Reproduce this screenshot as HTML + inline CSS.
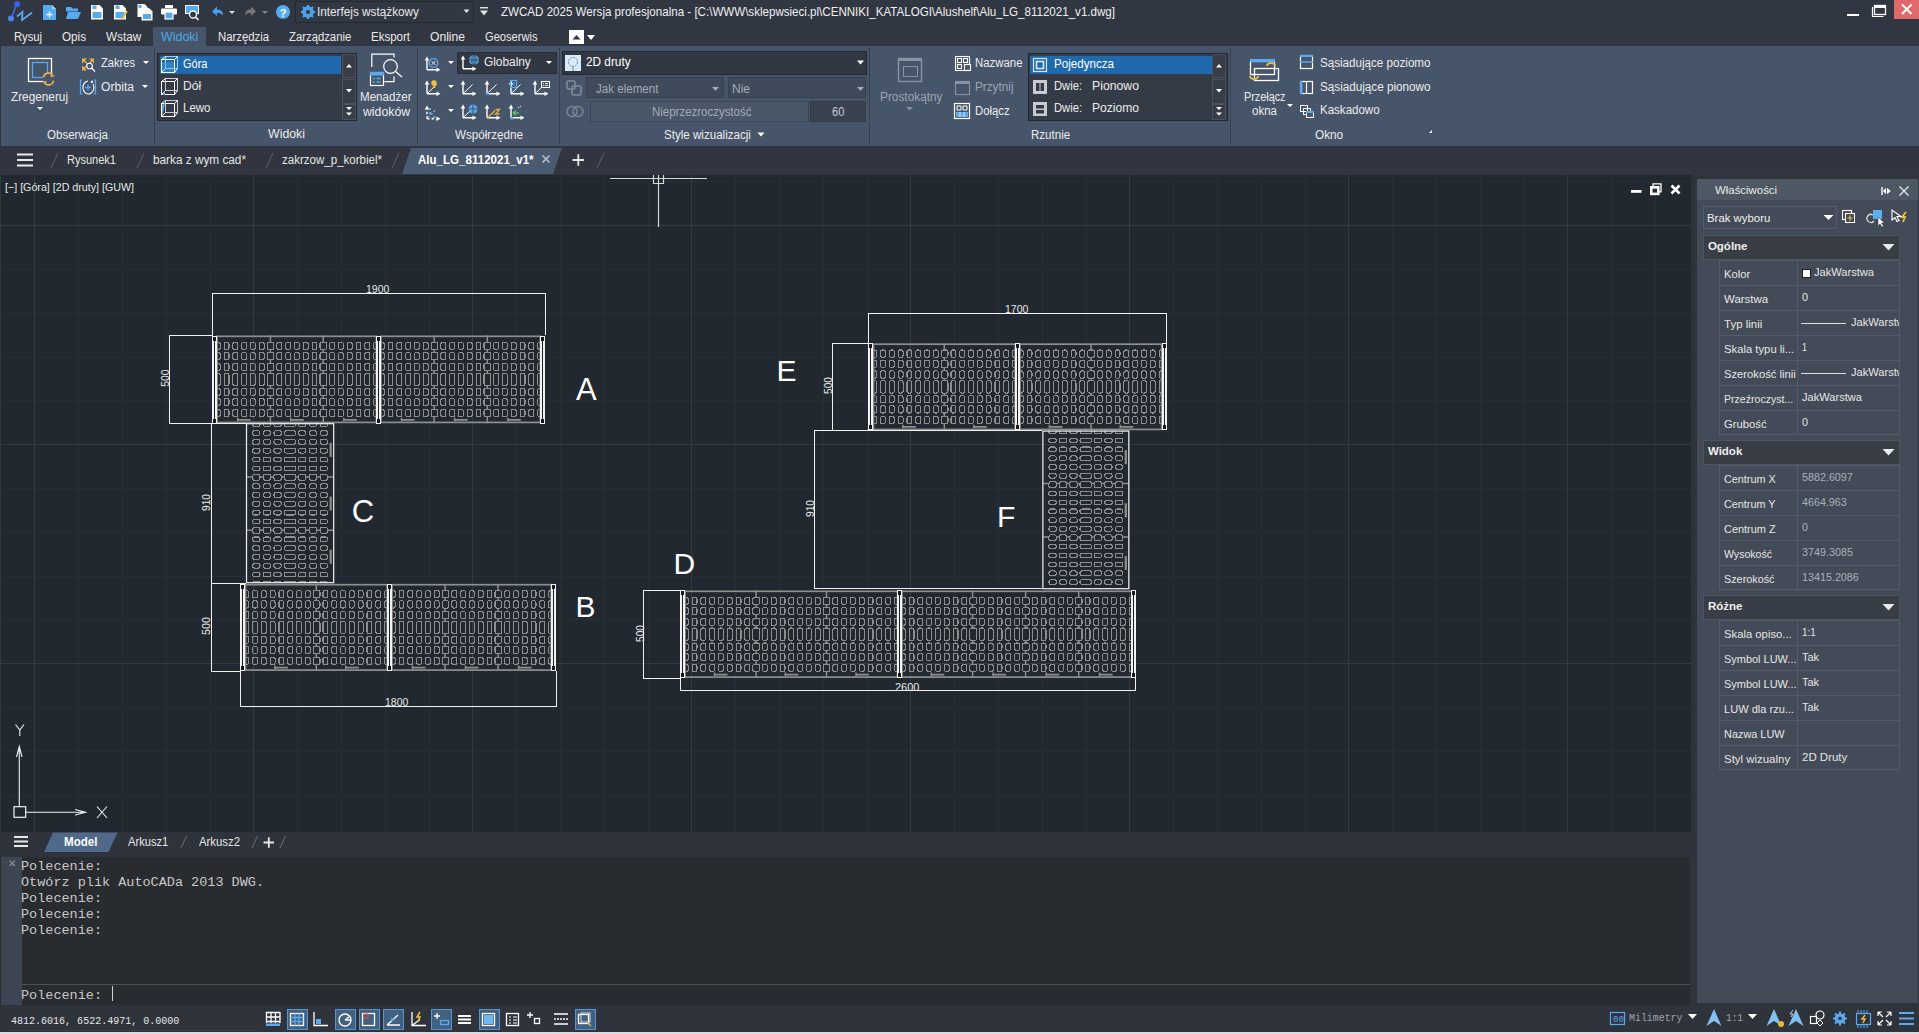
<!DOCTYPE html>
<html><head><meta charset="utf-8">
<style>
*{margin:0;padding:0;box-sizing:border-box}
html,body{width:1919px;height:1034px;overflow:hidden;background:#2e333c;font-family:"Liberation Sans",sans-serif}
.a{position:absolute}
.t{position:absolute;white-space:pre;line-height:normal;transform-origin:0 0}
svg{position:absolute;overflow:visible}
</style></head><body>
<div class="a" style="left:0px;top:0px;width:1919px;height:46px;background:#313742;"></div><div class="a" style="left:1px;top:46px;width:1918px;height:100px;background:#47556a;"></div><div class="a" style="left:0px;top:146px;width:1919px;height:29px;background:#30353f;"></div><div class="a" style="left:0px;top:175px;width:1691px;height:657px;background:#212830;"></div><div class="a" style="left:0px;top:175px;width:1px;height:657px;background:#38363a;"></div><div class="a" style="left:0px;top:832px;width:1697px;height:25px;background:#2e333c;"></div><div class="a" style="left:0px;top:857px;width:1690px;height:148px;background:#282b30;"></div><div class="a" style="left:1px;top:857px;width:21px;height:148px;background:#3e4552;"></div><div class="a" style="left:22px;top:984px;width:1668px;height:1px;background:#4a5059;"></div><div class="a" style="left:1697px;top:179px;width:221px;height:824px;background:#434b58;"></div><div class="a" style="left:1918px;top:179px;width:1px;height:824px;background:#30353f;"></div><div class="a" style="left:0px;top:1005px;width:1919px;height:27px;background:#2e333c;"></div><div class="a" style="left:0px;top:1032px;width:1919px;height:2px;background:#d9dde3;"></div><svg style="left:0;top:0" width="300" height="25">
<g fill="none" stroke-linecap="round">
<line x1="16.5" y1="4.5" x2="11.5" y2="18" stroke="#3d6ee8" stroke-width="1.6"/>
<circle cx="17" cy="4.3" r="3" fill="#3f5ff0"/>
<circle cx="11" cy="18.5" r="3" fill="#4a86f0"/>
<path d="M17.5 16 L22.5 12 L22 20 L31.5 13" stroke="#5aa8e8" stroke-width="1.8"/>
</g>
<path d="M43 5 h9 l4 4 v11 h-13z" fill="#56aaf0"/><path d="M52 5 v4 h4" fill="#a8d4f8"/>
<path d="M46.5 14.5 h6 M49.5 11.5 v6" stroke="#fff" stroke-width="1.3"/>
<path d="M66 7 h5 l1.5 1.5 h5.5 v3 h-12z" fill="#56aaf0"/><path d="M68 12 h13 l-3 7 h-12z" fill="#56aaf0"/>
<path d="M91 5 h8.5 l3.5 3.5 v11 h-12z" fill="#fff"/><rect x="92.5" y="12" width="9" height="6" fill="#56aaf0"/><rect x="92.5" y="5.5" width="4" height="3.5" fill="#56aaf0"/>
<path d="M114 5 h8.5 l3.5 3.5 v11 h-12z" fill="#fff"/><rect x="115.5" y="12" width="9" height="6" fill="#56aaf0"/><rect x="115.5" y="5.5" width="4" height="3.5" fill="#56aaf0"/>
<path d="M122 19 l5 -8" stroke="#e8b84a" stroke-width="2"/>
<path d="M137.5 4 h7 l3 3 v10 h-10z" fill="#fff"/><rect x="138.5" y="5" width="3" height="3" fill="#56aaf0"/>
<path d="M141.5 8 h7.5 l3.5 3.5 v9 h-11z" fill="#fff"/><rect x="143" y="14" width="8" height="5" fill="#56aaf0"/>
<rect x="165" y="5" width="8" height="3" fill="#fff"/><rect x="161" y="8.5" width="16" height="6" rx="1" fill="#fff"/><rect x="165" y="12" width="8" height="7" fill="#56aaf0" stroke="#fff" stroke-width="1.2"/>
<rect x="185.5" y="5.5" width="13" height="8" fill="#56aaf0" stroke="#fff" stroke-width="1"/>
<circle cx="193" cy="14.5" r="3.5" fill="#313742" stroke="#fff" stroke-width="1.3"/><path d="M195.5 17 l3 3" stroke="#fff" stroke-width="1.5"/>
<path d="M212 11.5 l5 -5 v3 c4 0 6 2 6 6 c-1.5 -2 -3 -2.5 -6 -2.5 v3z" fill="#4aa0f0"/>
<path d="M229 11 h6 l-3 3z" fill="#ddd"/>
<path d="M256 11.5 l-5 -5 v3 c-4 0 -6 2 -6 6 c1.5 -2 3 -2.5 6 -2.5 v3z" fill="#777"/>
<path d="M262 11 h6 l-3 3z" fill="#888"/>
<circle cx="283" cy="12" r="7" fill="#56aaf0"/>
<text x="283" y="16.5" font-family="Liberation Sans" font-size="11" font-weight="bold" fill="#fff" text-anchor="middle">?</text>
</svg><div class="a" style="left:295px;top:1px;width:179px;height:22px;background:#323843;border:1px solid #24282f;"></div><svg style="left:300px;top:4px" width="16" height="16"><g transform="translate(8 8)" fill="#4fa3ec">
<circle r="4.6" fill="none" stroke="#4fa3ec" stroke-width="2.4"/>
<g stroke="#4fa3ec" stroke-width="2.2"><line y1="-7" y2="7"/><line x1="-7" x2="7"/><line x1="-5" y1="-5" x2="5" y2="5"/><line x1="-5" y1="5" x2="5" y2="-5"/></g>
<circle r="2" fill="#323843"/></g></svg><svg style="left:463px;top:9px" width="8" height="6"><path d="M0.5 0.5h6l-3 3.5z" fill="#e0e0e0"/></svg><svg style="left:478px;top:6px" width="12" height="12"><rect x="2" y="1" width="8" height="1.5" fill="#e0e0e0"/><path d="M2 4.5h8l-4 5z" fill="#e0e0e0"/></svg><div class="a" style="left:1847px;top:14px;width:12px;height:2px;background:#fff;"></div><svg style="left:1870px;top:2px" width="20" height="16"><path d="M2.5 5 v9.5 h11" fill="none" stroke="#fff" stroke-width="1.2"/>
<rect x="4.5" y="3.5" width="11" height="9" fill="none" stroke="#fff" stroke-width="1.3"/><rect x="4.5" y="3" width="11" height="3" fill="#fff"/></svg><div class="a" style="left:1894px;top:0px;width:25px;height:19px;background:#e06a6a;"></div><svg style="left:1900px;top:3px" width="14" height="13"><path d="M2 1.5 L11.5 11 M11.5 1.5 L2 11" stroke="#fff" stroke-width="2"/></svg><div class="a" style="left:153px;top:27px;width:53px;height:19px;background:#47556a;"></div><div class="a" style="left:569px;top:30px;width:15px;height:14px;background:#ffffff;"></div><svg style="left:569px;top:30px" width="28" height="14"><path d="M3.5 9.5 l4 -4.5 l4 4.5z" fill="#313742"/><path d="M18 5 h8 l-4 5z" fill="#fff"/></svg><div class="a" style="left:154px;top:48px;width:1px;height:96px;background:#37404d;"></div><div class="a" style="left:417px;top:48px;width:1px;height:96px;background:#37404d;"></div><div class="a" style="left:559px;top:48px;width:1px;height:96px;background:#37404d;"></div><div class="a" style="left:869px;top:48px;width:1px;height:96px;background:#37404d;"></div><div class="a" style="left:1230px;top:48px;width:1px;height:96px;background:#37404d;"></div><svg style="left:0;top:46px" width="160" height="99">
<rect x="28.5" y="12.5" width="23" height="23" fill="none" stroke="#fff" stroke-width="1.3"/>
<rect x="32.5" y="16.5" width="15" height="15" fill="none" stroke="#5aaaf0" stroke-width="1.3"/>
<circle cx="48.5" cy="33" r="6" fill="#47556a"/>
<path d="M43.5 31.5 a5 5 0 0 1 9.5 -1.5 M53.5 34.5 a5 5 0 0 1 -9.5 1.5" fill="none" stroke="#e2b34a" stroke-width="1.7"/>
<path d="M51 27.5 l3.5 2.8 l-4 1z M46 38.5 l-3.5 -2.8 l4 -1z" fill="#e2b34a"/>
<path d="M37 61 h6 l-3 3z" fill="#fff"/>
<path d="M82 12.5 h5 l-5 5z M94 12.5 h-5 l5 5z M82 24.5 v-5 l5 5z" fill="#e2b34a"/>
<path d="M83 13.5 l4 4 M93 13.5 l-4 4 M83 23.5 l4 -4" stroke="#e2b34a" stroke-width="1.2"/>
<circle cx="89.5" cy="20" r="2.8" fill="#47556a" stroke="#fff" stroke-width="1.1"/><path d="M91.5 22 l3.5 3.5" stroke="#fff" stroke-width="1.2"/>
<path d="M82.5 34 h-2 v14 h2 M93.5 34 h2 v14 h-2" fill="none" stroke="#5aaaf0" stroke-width="1.2"/>
<path d="M88 35 a5.5 6.5 0 1 0 5 3" fill="none" stroke="#fff" stroke-width="1.1"/><path d="M85 41.5 h6 M88 38.5 v6" stroke="#5aaaf0" stroke-width="1.3"/><path d="M92 34 l1.5 2.5 l-3 0.5z" fill="#fff"/>
<path d="M143 15 h6 l-3 3z M142 39 h6 l-3 3z" fill="#fff"/>
</svg><div class="a" style="left:157px;top:53px;width:200px;height:68px;background:#22262d;"></div><div class="a" style="left:158px;top:54px;width:198px;height:66px;background:#353b46;"></div><div class="a" style="left:160px;top:56px;width:181px;height:18px;background:#1f6aae;"></div><div class="a" style="left:342px;top:54px;width:14px;height:24px;background:#383e49;border:1px solid #4b525d;"></div><div class="a" style="left:342px;top:79px;width:14px;height:25px;background:#383e49;border:1px solid #4b525d;"></div><div class="a" style="left:342px;top:104px;width:14px;height:16px;background:#383e49;border:1px solid #4b525d;"></div><svg style="left:157px;top:53px" width="200" height="68">
<g fill="none" stroke="#fff" stroke-width="1">
<rect x="4.5" y="6.5" width="13" height="13"/><rect x="8.5" y="3.5" width="12" height="12" stroke="#9fd0f8"/><path d="M4.5 6.5 l4 -3 M17.5 6.5 l3 -3 M4.5 19.5 l4 -4 M17.5 19.5 l3 -4"/>
<rect x="4.5" y="28.5" width="13" height="13"/><rect x="8.5" y="25.5" width="12" height="12" stroke="#ccc"/><path d="M4.5 28.5 l4 -3 M17.5 28.5 l3 -3 M4.5 41.5 l4 -4 M17.5 41.5 l3 -4"/>
<rect x="4.5" y="50.5" width="13" height="13"/><rect x="8.5" y="47.5" width="12" height="12" stroke="#ccc"/><path d="M4.5 50.5 l4 -3 M17.5 50.5 l3 -3 M4.5 63.5 l4 -4 M17.5 63.5 l3 -4"/>
</g>
<path d="M5 9 h12 v10 h-12z" fill="#5aaaf0" opacity="0.35"/>
<path d="M5 42 l3 -4 v4z M5 64 v-12 l3 -2z" fill="#5aaaf0"/>
<path d="M189 14.5 l3 -3.5 l3 3.5z M189 36 h6 l-3 3.5z M189 54 h6 l-3 3z M189 59.5 h6 l-3 3z" fill="#fff"/>
</svg><svg style="left:360px;top:50px" width="55" height="40">
<path d="M11.8 17V4.2H34V7.5 M24.5 31.7H34V26.5" fill="none" stroke="#fff" stroke-width="1.2"/>
<circle cx="30.5" cy="16.5" r="6.8" fill="none" stroke="#fff" stroke-width="1.2"/><path d="M35.3 21.3 L42 27" stroke="#fff" stroke-width="1.2"/>
<rect x="10.5" y="22.5" width="13" height="13" fill="#47556a" stroke="#fff" stroke-width="1.2"/>
<rect x="10" y="22" width="14" height="3.5" fill="#5aaaf0"/>
<path d="M13 28.5h2M16.5 28.5h4M13 32h2M16.5 32h4" stroke="#5aaaf0" stroke-width="1.5"/>
</svg><div class="a" style="left:457px;top:52px;width:100px;height:22px;background:#323843;border:1px solid #282c34;"></div><svg style="left:417px;top:46px" width="145" height="99"><path d="M10 23.8V12.5 M10 23.8H20.5" fill="none" stroke="#fff" stroke-width="1.4"/><path d="M7.7 14.5L10 10.5L12.3 14.5z M19.5 21.5L23.5 23.8L19.5 26.1z" fill="#fff"/><path d="M46 22.8V11.5 M46 22.8H56.5" fill="none" stroke="#fff" stroke-width="1.4"/><path d="M43.7 13.5L46 9.5L48.3 13.5z M55.5 20.5L59.5 22.8L55.5 25.1z" fill="#fff"/><path d="M10 47.8V36.5 M10 47.8H20.5" fill="none" stroke="#fff" stroke-width="1.4"/><path d="M7.7 38.5L10 34.5L12.3 38.5z M19.5 45.5L23.5 47.8L19.5 50.1z" fill="#fff"/><path d="M10.5 47.3L19.5 38.5" stroke="#fff" stroke-width="1" fill="none"/><path d="M46 47.8V36.5 M46 47.8H56.5" fill="none" stroke="#fff" stroke-width="1.4"/><path d="M43.7 38.5L46 34.5L48.3 38.5z M55.5 45.5L59.5 47.8L55.5 50.1z" fill="#fff"/><path d="M46.5 47.3L55.5 38.5" stroke="#fff" stroke-width="1" fill="none"/><path d="M70 47.8V36.5 M70 47.8H80.5" fill="none" stroke="#fff" stroke-width="1.4"/><path d="M67.7 38.5L70 34.5L72.3 38.5z M79.5 45.5L83.5 47.8L79.5 50.1z" fill="#fff"/><path d="M70.5 47.3L79.5 38.5" stroke="#fff" stroke-width="1" fill="none"/><path d="M94 47.8V36.5 M94 47.8H104.5" fill="none" stroke="#fff" stroke-width="1.4"/><path d="M91.7 38.5L94 34.5L96.3 38.5z M103.5 45.5L107.5 47.8L103.5 50.1z" fill="#fff"/><path d="M94.5 47.3L103.5 38.5" stroke="#fff" stroke-width="1" fill="none"/><path d="M118 47.8V36.5 M118 47.8H128.5" fill="none" stroke="#fff" stroke-width="1.4"/><path d="M115.7 38.5L118 34.5L120.3 38.5z M127.5 45.5L131.5 47.8L127.5 50.1z" fill="#fff"/><path d="M118.5 47.3L127.5 38.5" stroke="#fff" stroke-width="1" fill="none"/><path d="M46 71.8V60.5 M46 71.8H56.5" fill="none" stroke="#fff" stroke-width="1.4"/><path d="M43.7 62.5L46 58.5L48.3 62.5z M55.5 69.5L59.5 71.8L55.5 74.1z" fill="#fff"/><path d="M46.5 71.3L55.5 62.5" stroke="#fff" stroke-width="1" fill="none"/><path d="M70 71.8V60.5 M70 71.8H80.5" fill="none" stroke="#fff" stroke-width="1.4"/><path d="M67.7 62.5L70 58.5L72.3 62.5z M79.5 69.5L83.5 71.8L79.5 74.1z" fill="#fff"/><path d="M94 71.8V60.5 M94 71.8H104.5" fill="none" stroke="#fff" stroke-width="1.4"/><path d="M91.7 62.5L94 58.5L96.3 62.5z M103.5 69.5L107.5 71.8L103.5 74.1z" fill="#fff"/><path d="M10 72.8V61.5 M10 72.8H20.5" fill="none" stroke="#fff" stroke-width="1.4" stroke-dasharray="2.5 2"/><path d="M7.7 63.5L10 59.5L12.3 63.5z M19.5 70.5L23.5 72.8L19.5 75.1z" fill="#fff"/><path d="M11 71.5L19 63.5" stroke="#fff" stroke-dasharray="2 2"/><rect x="12" y="66" width="2.2" height="2.2" fill="#5aaaf0"/><rect x="16" y="70" width="2.2" height="2.2" fill="#5aaaf0"/><rect x="12" y="62" width="2" height="2" fill="#5aaaf0"/><path d="M31 15 h6 l-3 3z M31 39 h6 l-3 3z M31 63 h6 l-3 3z M129 15 h6 l-3 3z" fill="#fff"/><circle cx="16.5" cy="17" r="4.3" fill="none" stroke="#5aaaf0" stroke-width="1.3"/><path d="M14.5 15l4 4M18.5 15l-4 4" stroke="#fff" stroke-width="0.9"/><circle cx="57" cy="14" r="5" fill="#5aaaf0"/><path d="M52 14h10M57 9v10" stroke="#34404f" stroke-width="0.9"/><ellipse cx="57" cy="14" rx="2.2" ry="5" fill="none" stroke="#34404f" stroke-width="0.9"/><circle cx="17" cy="37" r="2.7" fill="#f0c040"/><rect x="15.8" y="40" width="2.4" height="2" fill="#f0c040"/><rect x="69.5" y="46.5" width="2.5" height="2.5" fill="#5aaaf0"/><rect x="93.5" y="34.5" width="6" height="7" fill="none" stroke="#5aaaf0" stroke-width="1.2"/><path d="M95.5 37h2M95.5 39h2" stroke="#5aaaf0"/><rect x="124.5" y="35.5" width="8" height="6" fill="#4d5a6c" stroke="#fff" stroke-width="1"/><path d="M126 37.5h1M128 37.5h3M126 39.5h1M128 39.5h3" stroke="#fff" stroke-width="0.8"/><circle cx="56" cy="63" r="4.5" fill="#5aaaf0"/><path d="M51.5 63h9M56 58.5v9" stroke="#34404f" stroke-width="0.8"/><path d="M70.5 72L78 64.5" stroke="#e0b040" stroke-width="1.2"/><path d="M78.5 63.5h4l-4 4.5h4" stroke="#e0b040" stroke-width="1.3" fill="none"/><path d="M96 67h6M96 67l3 -2.5M96 67l3 2.5" stroke="#5ac070" stroke-width="1.4" fill="none"/><path d="M101 62l3 -2" stroke="#fff" stroke-dasharray="1.5 1"/><rect x="93.5" y="71" width="2.5" height="2.5" fill="#5aaaf0"/></svg><div class="a" style="left:562px;top:51px;width:305px;height:24px;background:#323843;border:1px solid #24282f;"></div><div class="a" style="left:565px;top:55px;width:16px;height:16px;background:#d5ecfa;"></div><svg style="left:565px;top:55px" width="16" height="16"><circle cx="8" cy="7" r="4.5" fill="none" stroke="#667" stroke-width="0.8" stroke-dasharray="2 1"/><path d="M8 11 v5" stroke="#667" stroke-width="0.8"/></svg><svg style="left:856px;top:60px" width="10" height="6"><path d="M1 0.5h7l-3.5 4z" fill="#fff"/></svg><div class="a" style="left:586px;top:77px;width:138px;height:21px;background:#3f4a5a;border:1px solid #37404d;"></div><div class="a" style="left:728px;top:77px;width:138px;height:21px;background:#3f4a5a;border:1px solid #37404d;"></div><svg style="left:562px;top:76px" width="310" height="45"><path d="M150 11 h7 l-3.5 4z M295 11 h7 l-3.5 4z" fill="#a3abb6"/><g fill="none" stroke="#808a96" stroke-width="1.6"><rect x="5" y="5" width="8" height="8" rx="1.5"/><rect x="10" y="10" width="9" height="9" rx="1.5"/></g><g fill="none" stroke="#7d8794" stroke-width="1.4"><circle cx="10" cy="35.5" r="5"/><circle cx="16" cy="35.5" r="5"/></g></svg><div class="a" style="left:590px;top:101px;width:219px;height:21px;background:#4a5769;border:1px solid #3a4453;"></div><div class="a" style="left:810px;top:101px;width:56px;height:21px;background:#3a4250;border:1px solid #343c48;"></div><svg style="left:757px;top:132px" width="8" height="6"><path d="M0.5 0.5h7l-3.5 4z" fill="#fff"/></svg><svg style="left:869px;top:46px" width="361" height="99">
<rect x="29.5" y="12.5" width="23" height="23" fill="none" stroke="#8892a0" stroke-width="1.4"/><rect x="29" y="12" width="24" height="3" fill="#8892a0"/>
<rect x="34.5" y="20.5" width="14" height="10" fill="none" stroke="#8892a0" stroke-width="1"/>
<path d="M37 61 h7 l-3.5 3.5z" fill="#8892a0"/>
<g fill="none" stroke="#fff" stroke-width="1.1"><rect x="86.5" y="10.5" width="14" height="14"/><rect x="88.5" y="12.5" width="4" height="4"/><rect x="94.5" y="12.5" width="4" height="4"/><rect x="88.5" y="18.5" width="4" height="4"/><rect x="95.5" y="18.5" width="6" height="6" fill="#4d5a6c"/></g>
<g fill="none" stroke="#8892a0" stroke-width="1.1"><rect x="86.5" y="35.5" width="14" height="13"/></g><rect x="86" y="35" width="15" height="3" fill="#8892a0"/>
<rect x="85.5" y="57.5" width="15" height="15" fill="none" stroke="#fff" stroke-width="1.2"/>
<path d="M88 60 h4 v4 h-4z M94 60 h4 v4 h-4z" fill="none" stroke="#fff"/><rect x="87" y="66" width="12" height="5" fill="#5aaaf0"/><path d="M91 66 v5 M95 66 v5" stroke="#fff" stroke-width="0.8"/>
</svg><div class="a" style="left:1028px;top:53px;width:200px;height:68px;background:#22262d;"></div><div class="a" style="left:1029px;top:54px;width:198px;height:66px;background:#353b46;"></div><div class="a" style="left:1030px;top:56px;width:182px;height:18px;background:#1f6aae;"></div><div class="a" style="left:1212px;top:54px;width:14px;height:24px;background:#383e49;border:1px solid #4b525d;"></div><div class="a" style="left:1212px;top:79px;width:14px;height:25px;background:#383e49;border:1px solid #4b525d;"></div><div class="a" style="left:1212px;top:104px;width:14px;height:16px;background:#383e49;border:1px solid #4b525d;"></div><svg style="left:1028px;top:53px" width="200" height="68">
<rect x="5.5" y="5.5" width="13" height="13" fill="none" stroke="#d8e8f8" stroke-width="1.2"/><rect x="8.5" y="8.5" width="7" height="7" fill="none" stroke="#d8e8f8" stroke-width="1.6"/>
<rect x="5.5" y="27.5" width="13" height="13" fill="#c8ccd2" stroke="#c8ccd2"/><rect x="8" y="30" width="3.5" height="8" fill="#353b46"/><rect x="12.5" y="30" width="3.5" height="8" fill="#353b46"/>
<rect x="5.5" y="49.5" width="13" height="13" fill="#c8ccd2" stroke="#c8ccd2"/><rect x="8" y="52" width="8" height="3.5" fill="#353b46"/><rect x="8" y="57" width="8" height="3.5" fill="#353b46"/>
<path d="M188 14.5 l3 -3.5 l3 3.5z M188 36 h6 l-3 3.5z M188 54 h6 l-3 3z M188 59.5 h6 l-3 3z" fill="#fff"/>
</svg><svg style="left:1230px;top:46px" width="210" height="99">
<rect x="20.5" y="15.5" width="24" height="13" fill="none" stroke="#fff" stroke-width="1.3"/><rect x="20" y="13" width="25" height="3" fill="#5aaaf0"/>
<rect x="24.5" y="22.5" width="24" height="12" fill="none" stroke="#fff" stroke-width="1.3"/>
<path d="M37 20 a4 3 0 0 1 8 0" fill="none" stroke="#e8b84a" stroke-width="2"/><path d="M28 30 a4 3 0 0 1 -8 0" fill="none" stroke="#e8b84a" stroke-width="2"/>
<path d="M57 58 h6 l-3 3z" fill="#fff"/>
<rect x="70.5" y="9.5" width="12" height="13" fill="none" stroke="#fff" stroke-width="1.2"/><rect x="70" y="9" width="13" height="2" fill="#5aaaf0"/><path d="M70 16 h13" stroke="#5aaaf0" stroke-width="1.5"/>
<rect x="70.5" y="35.5" width="12" height="12" fill="none" stroke="#fff" stroke-width="1.2"/><rect x="70" y="35" width="2.5" height="13" fill="#5aaaf0"/><path d="M76.5 35.5 v12" stroke="#fff" stroke-width="1.2"/>
<rect x="70.5" y="59.5" width="7" height="6" fill="none" stroke="#fff"/><rect x="73.5" y="62.5" width="7" height="6" fill="none" stroke="#fff"/><rect x="76.5" y="65.5" width="7" height="6" fill="#4d5a6c" stroke="#fff"/><rect x="76" y="65" width="8" height="2" fill="#5aaaf0"/>
<path d="M199 87 l3 -3 v3z" fill="#fff"/>
</svg><svg style="left:0;top:145px" width="620" height="30"><path d="M17 9.5h16M17 15h16M17 20.5h16" stroke="#e8e8e8" stroke-width="1.8"/><path d="M51 23 l7 -15 M137 23 l7 -15 M266 23 l7 -15 M392 23 l7 -15" stroke="#5a606a" stroke-width="1"/><path d="M402 29 l9 -26 h151 l-9 26z" fill="#4a5a70"/><path d="M542.5 10.5 l7 7 M549.5 10.5 l-7 7" stroke="#b8c0ca" stroke-width="1.6"/><path d="M572.5 15 h11.5 M578.3 9.3 v11.5" stroke="#e8e8e8" stroke-width="1.8"/><path d="M597 23 l7 -15" stroke="#5a606a" stroke-width="1"/></svg><svg style="left:0;top:175px" width="1691" height="657" viewBox="0 175 1691 657"><path d="M78.5 175V832M122.5 175V832M166.5 175V832M210.5 175V832M297.5 175V832M341.5 175V832M385.5 175V832M429.5 175V832M516.5 175V832M560.5 175V832M604.5 175V832M648.5 175V832M735.5 175V832M779.5 175V832M823.5 175V832M867.5 175V832M954.5 175V832M998.5 175V832M1042.5 175V832M1086.5 175V832M1173.5 175V832M1217.5 175V832M1261.5 175V832M1305.5 175V832M1392.5 175V832M1436.5 175V832M1480.5 175V832M1524.5 175V832M1611.5 175V832M1655.5 175V832M0 181.5H1691M0 269.5H1691M0 313.5H1691M0 357.5H1691M0 400.5H1691M0 488.5H1691M0 532.5H1691M0 576.5H1691M0 619.5H1691M0 707.5H1691M0 751.5H1691M0 795.5H1691" stroke="#272e37" stroke-width="1"/><path d="M34.5 175V832M253.5 175V832M472.5 175V832M691.5 175V832M910.5 175V832M1129.5 175V832M1348.5 175V832M1567.5 175V832M0 225.5H1691M0 444.5H1691M0 663.5H1691" stroke="#333b46" stroke-width="1"/><clipPath id="c217_335"><rect x="217" y="335.5" width="159.39999999999998" height="87.69999999999999"/></clipPath><g clip-path="url(#c217_335)" fill="none" stroke="#8e8e8e" stroke-width="1.1" shape-rendering="crispEdges"><rect x="215.25" y="342.16" width="4.9" height="7.4" rx="2" ry="2"/><rect x="215.25" y="352.43" width="4.9" height="7.4" rx="2" ry="2"/><rect x="215.25" y="363.29" width="4.9" height="7.4" rx="2" ry="2"/><rect x="215.25" y="373.15" width="4.9" height="12.5" rx="2" ry="2"/><rect x="215.25" y="388.21" width="4.9" height="7.4" rx="2" ry="2"/><rect x="215.25" y="398.42" width="4.9" height="7.4" rx="2" ry="2"/><rect x="215.25" y="409.33" width="4.9" height="7.4" rx="2" ry="2"/><rect x="224.05" y="342.16" width="4.9" height="7.4" rx="2" ry="2"/><rect x="224.05" y="352.43" width="4.9" height="7.4" rx="2" ry="2"/><rect x="224.05" y="363.29" width="4.9" height="7.4" rx="2" ry="2"/><rect x="224.05" y="373.15" width="4.9" height="12.5" rx="2" ry="2"/><rect x="224.05" y="388.21" width="4.9" height="7.4" rx="2" ry="2"/><rect x="224.05" y="398.42" width="4.9" height="7.4" rx="2" ry="2"/><rect x="224.05" y="409.33" width="4.9" height="7.4" rx="2" ry="2"/><rect x="232.85" y="342.16" width="4.9" height="7.4" rx="2" ry="2"/><rect x="232.85" y="352.43" width="4.9" height="7.4" rx="2" ry="2"/><rect x="232.85" y="363.29" width="4.9" height="7.4" rx="2" ry="2"/><rect x="232.85" y="373.15" width="4.9" height="12.5" rx="2" ry="2"/><rect x="232.85" y="388.21" width="4.9" height="7.4" rx="2" ry="2"/><rect x="232.85" y="398.42" width="4.9" height="7.4" rx="2" ry="2"/><rect x="232.85" y="409.33" width="4.9" height="7.4" rx="2" ry="2"/><rect x="241.65" y="342.16" width="4.9" height="7.4" rx="2" ry="2"/><rect x="241.65" y="352.43" width="4.9" height="7.4" rx="2" ry="2"/><rect x="241.65" y="363.29" width="4.9" height="7.4" rx="2" ry="2"/><rect x="241.65" y="373.15" width="4.9" height="12.5" rx="2" ry="2"/><rect x="241.65" y="388.21" width="4.9" height="7.4" rx="2" ry="2"/><rect x="241.65" y="398.42" width="4.9" height="7.4" rx="2" ry="2"/><rect x="241.65" y="409.33" width="4.9" height="7.4" rx="2" ry="2"/><rect x="250.45" y="342.16" width="4.9" height="7.4" rx="2" ry="2"/><rect x="250.45" y="352.43" width="4.9" height="7.4" rx="2" ry="2"/><rect x="250.45" y="363.29" width="4.9" height="7.4" rx="2" ry="2"/><rect x="250.45" y="373.15" width="4.9" height="12.5" rx="2" ry="2"/><rect x="250.45" y="388.21" width="4.9" height="7.4" rx="2" ry="2"/><rect x="250.45" y="398.42" width="4.9" height="7.4" rx="2" ry="2"/><rect x="250.45" y="409.33" width="4.9" height="7.4" rx="2" ry="2"/><rect x="259.25" y="342.16" width="4.9" height="7.4" rx="2" ry="2"/><rect x="259.25" y="352.43" width="4.9" height="7.4" rx="2" ry="2"/><rect x="259.25" y="363.29" width="4.9" height="7.4" rx="2" ry="2"/><rect x="259.25" y="373.15" width="4.9" height="12.5" rx="2" ry="2"/><rect x="259.25" y="388.21" width="4.9" height="7.4" rx="2" ry="2"/><rect x="259.25" y="398.42" width="4.9" height="7.4" rx="2" ry="2"/><rect x="259.25" y="409.33" width="4.9" height="7.4" rx="2" ry="2"/><rect x="267.15" y="342.16" width="6.7" height="7.4" rx="2" ry="2"/><rect x="267.15" y="352.43" width="6.7" height="7.4" rx="2" ry="2"/><rect x="267.15" y="363.29" width="6.7" height="7.4" rx="2" ry="2"/><rect x="267.15" y="373.15" width="6.7" height="12.5" rx="2" ry="2"/><rect x="267.15" y="388.21" width="6.7" height="7.4" rx="2" ry="2"/><rect x="267.15" y="398.42" width="6.7" height="7.4" rx="2" ry="2"/><rect x="267.15" y="409.33" width="6.7" height="7.4" rx="2" ry="2"/><rect x="276.85" y="342.16" width="4.9" height="7.4" rx="2" ry="2"/><rect x="276.85" y="352.43" width="4.9" height="7.4" rx="2" ry="2"/><rect x="276.85" y="363.29" width="4.9" height="7.4" rx="2" ry="2"/><rect x="276.85" y="373.15" width="4.9" height="12.5" rx="2" ry="2"/><rect x="276.85" y="388.21" width="4.9" height="7.4" rx="2" ry="2"/><rect x="276.85" y="398.42" width="4.9" height="7.4" rx="2" ry="2"/><rect x="276.85" y="409.33" width="4.9" height="7.4" rx="2" ry="2"/><rect x="285.65" y="342.16" width="4.9" height="7.4" rx="2" ry="2"/><rect x="285.65" y="352.43" width="4.9" height="7.4" rx="2" ry="2"/><rect x="285.65" y="363.29" width="4.9" height="7.4" rx="2" ry="2"/><rect x="285.65" y="373.15" width="4.9" height="12.5" rx="2" ry="2"/><rect x="285.65" y="388.21" width="4.9" height="7.4" rx="2" ry="2"/><rect x="285.65" y="398.42" width="4.9" height="7.4" rx="2" ry="2"/><rect x="285.65" y="409.33" width="4.9" height="7.4" rx="2" ry="2"/><rect x="294.45" y="342.16" width="4.9" height="7.4" rx="2" ry="2"/><rect x="294.45" y="352.43" width="4.9" height="7.4" rx="2" ry="2"/><rect x="294.45" y="363.29" width="4.9" height="7.4" rx="2" ry="2"/><rect x="294.45" y="373.15" width="4.9" height="12.5" rx="2" ry="2"/><rect x="294.45" y="388.21" width="4.9" height="7.4" rx="2" ry="2"/><rect x="294.45" y="398.42" width="4.9" height="7.4" rx="2" ry="2"/><rect x="294.45" y="409.33" width="4.9" height="7.4" rx="2" ry="2"/><rect x="303.25" y="342.16" width="4.9" height="7.4" rx="2" ry="2"/><rect x="303.25" y="352.43" width="4.9" height="7.4" rx="2" ry="2"/><rect x="303.25" y="363.29" width="4.9" height="7.4" rx="2" ry="2"/><rect x="303.25" y="373.15" width="4.9" height="12.5" rx="2" ry="2"/><rect x="303.25" y="388.21" width="4.9" height="7.4" rx="2" ry="2"/><rect x="303.25" y="398.42" width="4.9" height="7.4" rx="2" ry="2"/><rect x="303.25" y="409.33" width="4.9" height="7.4" rx="2" ry="2"/><rect x="312.05" y="342.16" width="4.9" height="7.4" rx="2" ry="2"/><rect x="312.05" y="352.43" width="4.9" height="7.4" rx="2" ry="2"/><rect x="312.05" y="363.29" width="4.9" height="7.4" rx="2" ry="2"/><rect x="312.05" y="373.15" width="4.9" height="12.5" rx="2" ry="2"/><rect x="312.05" y="388.21" width="4.9" height="7.4" rx="2" ry="2"/><rect x="312.05" y="398.42" width="4.9" height="7.4" rx="2" ry="2"/><rect x="312.05" y="409.33" width="4.9" height="7.4" rx="2" ry="2"/><rect x="319.95" y="342.16" width="6.7" height="7.4" rx="2" ry="2"/><rect x="319.95" y="352.43" width="6.7" height="7.4" rx="2" ry="2"/><rect x="319.95" y="363.29" width="6.7" height="7.4" rx="2" ry="2"/><rect x="319.95" y="373.15" width="6.7" height="12.5" rx="2" ry="2"/><rect x="319.95" y="388.21" width="6.7" height="7.4" rx="2" ry="2"/><rect x="319.95" y="398.42" width="6.7" height="7.4" rx="2" ry="2"/><rect x="319.95" y="409.33" width="6.7" height="7.4" rx="2" ry="2"/><rect x="329.65" y="342.16" width="4.9" height="7.4" rx="2" ry="2"/><rect x="329.65" y="352.43" width="4.9" height="7.4" rx="2" ry="2"/><rect x="329.65" y="363.29" width="4.9" height="7.4" rx="2" ry="2"/><rect x="329.65" y="373.15" width="4.9" height="12.5" rx="2" ry="2"/><rect x="329.65" y="388.21" width="4.9" height="7.4" rx="2" ry="2"/><rect x="329.65" y="398.42" width="4.9" height="7.4" rx="2" ry="2"/><rect x="329.65" y="409.33" width="4.9" height="7.4" rx="2" ry="2"/><rect x="338.45" y="342.16" width="4.9" height="7.4" rx="2" ry="2"/><rect x="338.45" y="352.43" width="4.9" height="7.4" rx="2" ry="2"/><rect x="338.45" y="363.29" width="4.9" height="7.4" rx="2" ry="2"/><rect x="338.45" y="373.15" width="4.9" height="12.5" rx="2" ry="2"/><rect x="338.45" y="388.21" width="4.9" height="7.4" rx="2" ry="2"/><rect x="338.45" y="398.42" width="4.9" height="7.4" rx="2" ry="2"/><rect x="338.45" y="409.33" width="4.9" height="7.4" rx="2" ry="2"/><rect x="347.25" y="342.16" width="4.9" height="7.4" rx="2" ry="2"/><rect x="347.25" y="352.43" width="4.9" height="7.4" rx="2" ry="2"/><rect x="347.25" y="363.29" width="4.9" height="7.4" rx="2" ry="2"/><rect x="347.25" y="373.15" width="4.9" height="12.5" rx="2" ry="2"/><rect x="347.25" y="388.21" width="4.9" height="7.4" rx="2" ry="2"/><rect x="347.25" y="398.42" width="4.9" height="7.4" rx="2" ry="2"/><rect x="347.25" y="409.33" width="4.9" height="7.4" rx="2" ry="2"/><rect x="356.05" y="342.16" width="4.9" height="7.4" rx="2" ry="2"/><rect x="356.05" y="352.43" width="4.9" height="7.4" rx="2" ry="2"/><rect x="356.05" y="363.29" width="4.9" height="7.4" rx="2" ry="2"/><rect x="356.05" y="373.15" width="4.9" height="12.5" rx="2" ry="2"/><rect x="356.05" y="388.21" width="4.9" height="7.4" rx="2" ry="2"/><rect x="356.05" y="398.42" width="4.9" height="7.4" rx="2" ry="2"/><rect x="356.05" y="409.33" width="4.9" height="7.4" rx="2" ry="2"/><rect x="364.85" y="342.16" width="4.9" height="7.4" rx="2" ry="2"/><rect x="364.85" y="352.43" width="4.9" height="7.4" rx="2" ry="2"/><rect x="364.85" y="363.29" width="4.9" height="7.4" rx="2" ry="2"/><rect x="364.85" y="373.15" width="4.9" height="12.5" rx="2" ry="2"/><rect x="364.85" y="388.21" width="4.9" height="7.4" rx="2" ry="2"/><rect x="364.85" y="398.42" width="4.9" height="7.4" rx="2" ry="2"/><rect x="364.85" y="409.33" width="4.9" height="7.4" rx="2" ry="2"/><rect x="373.65" y="342.16" width="4.9" height="7.4" rx="2" ry="2"/><rect x="373.65" y="352.43" width="4.9" height="7.4" rx="2" ry="2"/><rect x="373.65" y="363.29" width="4.9" height="7.4" rx="2" ry="2"/><rect x="373.65" y="373.15" width="4.9" height="12.5" rx="2" ry="2"/><rect x="373.65" y="388.21" width="4.9" height="7.4" rx="2" ry="2"/><rect x="373.65" y="398.42" width="4.9" height="7.4" rx="2" ry="2"/><rect x="373.65" y="409.33" width="4.9" height="7.4" rx="2" ry="2"/></g><path d="M270.4 335.5V342.2M270.4 349.6V352.4M270.4 359.8V363.3M270.4 370.7V373.1M270.4 385.6V388.2M270.4 395.6V398.4M270.4 405.8V409.3M270.4 416.7V423.2M323.2 335.5V342.2M323.2 349.6V352.4M323.2 359.8V363.3M323.2 370.7V373.1M323.2 385.6V388.2M323.2 395.6V398.4M323.2 405.8V409.3M323.2 416.7V423.2" stroke="#8e8e8e" stroke-width="1.5"/><rect x="217" y="336.3" width="159.39999999999998" height="86.1" fill="none" stroke="#8e8e8e" stroke-width="1.7"/><path d="M237.7 419.9h13M237.7 417.7v3.5" stroke="#8e8e8e" stroke-width="1.6"/><path d="M290.8 419.9h13M290.8 417.7v3.5" stroke="#8e8e8e" stroke-width="1.6"/><path d="M343.8 419.9h13M343.8 417.7v3.5" stroke="#8e8e8e" stroke-width="1.6"/><clipPath id="c381_335"><rect x="381" y="335.5" width="159.39999999999998" height="87.69999999999999"/></clipPath><g clip-path="url(#c381_335)" fill="none" stroke="#8e8e8e" stroke-width="1.1" shape-rendering="crispEdges"><rect x="379.25" y="342.16" width="4.9" height="7.4" rx="2" ry="2"/><rect x="379.25" y="352.43" width="4.9" height="7.4" rx="2" ry="2"/><rect x="379.25" y="363.29" width="4.9" height="7.4" rx="2" ry="2"/><rect x="379.25" y="373.15" width="4.9" height="12.5" rx="2" ry="2"/><rect x="379.25" y="388.21" width="4.9" height="7.4" rx="2" ry="2"/><rect x="379.25" y="398.42" width="4.9" height="7.4" rx="2" ry="2"/><rect x="379.25" y="409.33" width="4.9" height="7.4" rx="2" ry="2"/><rect x="388.05" y="342.16" width="4.9" height="7.4" rx="2" ry="2"/><rect x="388.05" y="352.43" width="4.9" height="7.4" rx="2" ry="2"/><rect x="388.05" y="363.29" width="4.9" height="7.4" rx="2" ry="2"/><rect x="388.05" y="373.15" width="4.9" height="12.5" rx="2" ry="2"/><rect x="388.05" y="388.21" width="4.9" height="7.4" rx="2" ry="2"/><rect x="388.05" y="398.42" width="4.9" height="7.4" rx="2" ry="2"/><rect x="388.05" y="409.33" width="4.9" height="7.4" rx="2" ry="2"/><rect x="396.85" y="342.16" width="4.9" height="7.4" rx="2" ry="2"/><rect x="396.85" y="352.43" width="4.9" height="7.4" rx="2" ry="2"/><rect x="396.85" y="363.29" width="4.9" height="7.4" rx="2" ry="2"/><rect x="396.85" y="373.15" width="4.9" height="12.5" rx="2" ry="2"/><rect x="396.85" y="388.21" width="4.9" height="7.4" rx="2" ry="2"/><rect x="396.85" y="398.42" width="4.9" height="7.4" rx="2" ry="2"/><rect x="396.85" y="409.33" width="4.9" height="7.4" rx="2" ry="2"/><rect x="405.65" y="342.16" width="4.9" height="7.4" rx="2" ry="2"/><rect x="405.65" y="352.43" width="4.9" height="7.4" rx="2" ry="2"/><rect x="405.65" y="363.29" width="4.9" height="7.4" rx="2" ry="2"/><rect x="405.65" y="373.15" width="4.9" height="12.5" rx="2" ry="2"/><rect x="405.65" y="388.21" width="4.9" height="7.4" rx="2" ry="2"/><rect x="405.65" y="398.42" width="4.9" height="7.4" rx="2" ry="2"/><rect x="405.65" y="409.33" width="4.9" height="7.4" rx="2" ry="2"/><rect x="414.45" y="342.16" width="4.9" height="7.4" rx="2" ry="2"/><rect x="414.45" y="352.43" width="4.9" height="7.4" rx="2" ry="2"/><rect x="414.45" y="363.29" width="4.9" height="7.4" rx="2" ry="2"/><rect x="414.45" y="373.15" width="4.9" height="12.5" rx="2" ry="2"/><rect x="414.45" y="388.21" width="4.9" height="7.4" rx="2" ry="2"/><rect x="414.45" y="398.42" width="4.9" height="7.4" rx="2" ry="2"/><rect x="414.45" y="409.33" width="4.9" height="7.4" rx="2" ry="2"/><rect x="423.25" y="342.16" width="4.9" height="7.4" rx="2" ry="2"/><rect x="423.25" y="352.43" width="4.9" height="7.4" rx="2" ry="2"/><rect x="423.25" y="363.29" width="4.9" height="7.4" rx="2" ry="2"/><rect x="423.25" y="373.15" width="4.9" height="12.5" rx="2" ry="2"/><rect x="423.25" y="388.21" width="4.9" height="7.4" rx="2" ry="2"/><rect x="423.25" y="398.42" width="4.9" height="7.4" rx="2" ry="2"/><rect x="423.25" y="409.33" width="4.9" height="7.4" rx="2" ry="2"/><rect x="431.15" y="342.16" width="6.7" height="7.4" rx="2" ry="2"/><rect x="431.15" y="352.43" width="6.7" height="7.4" rx="2" ry="2"/><rect x="431.15" y="363.29" width="6.7" height="7.4" rx="2" ry="2"/><rect x="431.15" y="373.15" width="6.7" height="12.5" rx="2" ry="2"/><rect x="431.15" y="388.21" width="6.7" height="7.4" rx="2" ry="2"/><rect x="431.15" y="398.42" width="6.7" height="7.4" rx="2" ry="2"/><rect x="431.15" y="409.33" width="6.7" height="7.4" rx="2" ry="2"/><rect x="440.85" y="342.16" width="4.9" height="7.4" rx="2" ry="2"/><rect x="440.85" y="352.43" width="4.9" height="7.4" rx="2" ry="2"/><rect x="440.85" y="363.29" width="4.9" height="7.4" rx="2" ry="2"/><rect x="440.85" y="373.15" width="4.9" height="12.5" rx="2" ry="2"/><rect x="440.85" y="388.21" width="4.9" height="7.4" rx="2" ry="2"/><rect x="440.85" y="398.42" width="4.9" height="7.4" rx="2" ry="2"/><rect x="440.85" y="409.33" width="4.9" height="7.4" rx="2" ry="2"/><rect x="449.65" y="342.16" width="4.9" height="7.4" rx="2" ry="2"/><rect x="449.65" y="352.43" width="4.9" height="7.4" rx="2" ry="2"/><rect x="449.65" y="363.29" width="4.9" height="7.4" rx="2" ry="2"/><rect x="449.65" y="373.15" width="4.9" height="12.5" rx="2" ry="2"/><rect x="449.65" y="388.21" width="4.9" height="7.4" rx="2" ry="2"/><rect x="449.65" y="398.42" width="4.9" height="7.4" rx="2" ry="2"/><rect x="449.65" y="409.33" width="4.9" height="7.4" rx="2" ry="2"/><rect x="458.45" y="342.16" width="4.9" height="7.4" rx="2" ry="2"/><rect x="458.45" y="352.43" width="4.9" height="7.4" rx="2" ry="2"/><rect x="458.45" y="363.29" width="4.9" height="7.4" rx="2" ry="2"/><rect x="458.45" y="373.15" width="4.9" height="12.5" rx="2" ry="2"/><rect x="458.45" y="388.21" width="4.9" height="7.4" rx="2" ry="2"/><rect x="458.45" y="398.42" width="4.9" height="7.4" rx="2" ry="2"/><rect x="458.45" y="409.33" width="4.9" height="7.4" rx="2" ry="2"/><rect x="467.25" y="342.16" width="4.9" height="7.4" rx="2" ry="2"/><rect x="467.25" y="352.43" width="4.9" height="7.4" rx="2" ry="2"/><rect x="467.25" y="363.29" width="4.9" height="7.4" rx="2" ry="2"/><rect x="467.25" y="373.15" width="4.9" height="12.5" rx="2" ry="2"/><rect x="467.25" y="388.21" width="4.9" height="7.4" rx="2" ry="2"/><rect x="467.25" y="398.42" width="4.9" height="7.4" rx="2" ry="2"/><rect x="467.25" y="409.33" width="4.9" height="7.4" rx="2" ry="2"/><rect x="476.05" y="342.16" width="4.9" height="7.4" rx="2" ry="2"/><rect x="476.05" y="352.43" width="4.9" height="7.4" rx="2" ry="2"/><rect x="476.05" y="363.29" width="4.9" height="7.4" rx="2" ry="2"/><rect x="476.05" y="373.15" width="4.9" height="12.5" rx="2" ry="2"/><rect x="476.05" y="388.21" width="4.9" height="7.4" rx="2" ry="2"/><rect x="476.05" y="398.42" width="4.9" height="7.4" rx="2" ry="2"/><rect x="476.05" y="409.33" width="4.9" height="7.4" rx="2" ry="2"/><rect x="483.95" y="342.16" width="6.7" height="7.4" rx="2" ry="2"/><rect x="483.95" y="352.43" width="6.7" height="7.4" rx="2" ry="2"/><rect x="483.95" y="363.29" width="6.7" height="7.4" rx="2" ry="2"/><rect x="483.95" y="373.15" width="6.7" height="12.5" rx="2" ry="2"/><rect x="483.95" y="388.21" width="6.7" height="7.4" rx="2" ry="2"/><rect x="483.95" y="398.42" width="6.7" height="7.4" rx="2" ry="2"/><rect x="483.95" y="409.33" width="6.7" height="7.4" rx="2" ry="2"/><rect x="493.65" y="342.16" width="4.9" height="7.4" rx="2" ry="2"/><rect x="493.65" y="352.43" width="4.9" height="7.4" rx="2" ry="2"/><rect x="493.65" y="363.29" width="4.9" height="7.4" rx="2" ry="2"/><rect x="493.65" y="373.15" width="4.9" height="12.5" rx="2" ry="2"/><rect x="493.65" y="388.21" width="4.9" height="7.4" rx="2" ry="2"/><rect x="493.65" y="398.42" width="4.9" height="7.4" rx="2" ry="2"/><rect x="493.65" y="409.33" width="4.9" height="7.4" rx="2" ry="2"/><rect x="502.45" y="342.16" width="4.9" height="7.4" rx="2" ry="2"/><rect x="502.45" y="352.43" width="4.9" height="7.4" rx="2" ry="2"/><rect x="502.45" y="363.29" width="4.9" height="7.4" rx="2" ry="2"/><rect x="502.45" y="373.15" width="4.9" height="12.5" rx="2" ry="2"/><rect x="502.45" y="388.21" width="4.9" height="7.4" rx="2" ry="2"/><rect x="502.45" y="398.42" width="4.9" height="7.4" rx="2" ry="2"/><rect x="502.45" y="409.33" width="4.9" height="7.4" rx="2" ry="2"/><rect x="511.25" y="342.16" width="4.9" height="7.4" rx="2" ry="2"/><rect x="511.25" y="352.43" width="4.9" height="7.4" rx="2" ry="2"/><rect x="511.25" y="363.29" width="4.9" height="7.4" rx="2" ry="2"/><rect x="511.25" y="373.15" width="4.9" height="12.5" rx="2" ry="2"/><rect x="511.25" y="388.21" width="4.9" height="7.4" rx="2" ry="2"/><rect x="511.25" y="398.42" width="4.9" height="7.4" rx="2" ry="2"/><rect x="511.25" y="409.33" width="4.9" height="7.4" rx="2" ry="2"/><rect x="520.05" y="342.16" width="4.9" height="7.4" rx="2" ry="2"/><rect x="520.05" y="352.43" width="4.9" height="7.4" rx="2" ry="2"/><rect x="520.05" y="363.29" width="4.9" height="7.4" rx="2" ry="2"/><rect x="520.05" y="373.15" width="4.9" height="12.5" rx="2" ry="2"/><rect x="520.05" y="388.21" width="4.9" height="7.4" rx="2" ry="2"/><rect x="520.05" y="398.42" width="4.9" height="7.4" rx="2" ry="2"/><rect x="520.05" y="409.33" width="4.9" height="7.4" rx="2" ry="2"/><rect x="528.85" y="342.16" width="4.9" height="7.4" rx="2" ry="2"/><rect x="528.85" y="352.43" width="4.9" height="7.4" rx="2" ry="2"/><rect x="528.85" y="363.29" width="4.9" height="7.4" rx="2" ry="2"/><rect x="528.85" y="373.15" width="4.9" height="12.5" rx="2" ry="2"/><rect x="528.85" y="388.21" width="4.9" height="7.4" rx="2" ry="2"/><rect x="528.85" y="398.42" width="4.9" height="7.4" rx="2" ry="2"/><rect x="528.85" y="409.33" width="4.9" height="7.4" rx="2" ry="2"/><rect x="537.65" y="342.16" width="4.9" height="7.4" rx="2" ry="2"/><rect x="537.65" y="352.43" width="4.9" height="7.4" rx="2" ry="2"/><rect x="537.65" y="363.29" width="4.9" height="7.4" rx="2" ry="2"/><rect x="537.65" y="373.15" width="4.9" height="12.5" rx="2" ry="2"/><rect x="537.65" y="388.21" width="4.9" height="7.4" rx="2" ry="2"/><rect x="537.65" y="398.42" width="4.9" height="7.4" rx="2" ry="2"/><rect x="537.65" y="409.33" width="4.9" height="7.4" rx="2" ry="2"/></g><path d="M434.1 335.5V342.2M434.1 349.6V352.4M434.1 359.8V363.3M434.1 370.7V373.1M434.1 385.6V388.2M434.1 395.6V398.4M434.1 405.8V409.3M434.1 416.7V423.2M487.3 335.5V342.2M487.3 349.6V352.4M487.3 359.8V363.3M487.3 370.7V373.1M487.3 385.6V388.2M487.3 395.6V398.4M487.3 405.8V409.3M487.3 416.7V423.2" stroke="#8e8e8e" stroke-width="1.5"/><rect x="381" y="336.3" width="159.39999999999998" height="86.1" fill="none" stroke="#8e8e8e" stroke-width="1.7"/><path d="M401.6 419.9h13M401.6 417.7v3.5" stroke="#8e8e8e" stroke-width="1.6"/><path d="M454.7 419.9h13M454.7 417.7v3.5" stroke="#8e8e8e" stroke-width="1.6"/><path d="M507.9 419.9h13M507.9 417.7v3.5" stroke="#8e8e8e" stroke-width="1.6"/><g shape-rendering="crispEdges"><rect x="212" y="336" width="5" height="88" fill="#f2f2f2"/><rect x="214" y="341" width="1" height="78" fill="#1c2128"/><rect x="213" y="337" width="3" height="4" fill="#15181d"/><rect x="213" y="419" width="3" height="4" fill="#15181d"/></g><g shape-rendering="crispEdges"><rect x="376" y="336" width="5" height="88" fill="#f2f2f2"/><rect x="378" y="341" width="1" height="78" fill="#1c2128"/><rect x="377" y="337" width="3" height="4" fill="#15181d"/><rect x="377" y="419" width="3" height="4" fill="#15181d"/></g><g shape-rendering="crispEdges"><rect x="540" y="336" width="5" height="88" fill="#f2f2f2"/><rect x="542" y="341" width="1" height="78" fill="#1c2128"/><rect x="541" y="337" width="3" height="4" fill="#15181d"/><rect x="541" y="419" width="3" height="4" fill="#15181d"/></g><path d="M212.3 335.3V293.6H545V335.3 M213 335.3H169.3V423.5H213" fill="none" stroke="#f2f2f2" stroke-width="1" shape-rendering="crispEdges"/><clipPath id="v246_423"><rect x="246" y="423.2" width="88.19999999999999" height="160.00000000000006"/></clipPath><g clip-path="url(#v246_423)" fill="none" stroke="#8e8e8e" stroke-width="1.1" shape-rendering="crispEdges"><rect x="252.67" y="421.90" width="7.3" height="4.6" rx="2" ry="2"/><rect x="263.30" y="421.90" width="7.3" height="4.6" rx="2" ry="2"/><rect x="273.92" y="421.90" width="7.3" height="4.6" rx="2" ry="2"/><rect x="284.25" y="421.90" width="11.5" height="4.6" rx="2" ry="2"/><rect x="298.58" y="421.90" width="7.3" height="4.6" rx="2" ry="2"/><rect x="309.40" y="421.90" width="7.3" height="4.6" rx="2" ry="2"/><rect x="320.13" y="421.90" width="7.3" height="4.6" rx="2" ry="2"/><rect x="252.67" y="430.75" width="7.3" height="4.6" rx="2" ry="2"/><rect x="263.30" y="430.75" width="7.3" height="4.6" rx="2" ry="2"/><rect x="273.92" y="430.75" width="7.3" height="4.6" rx="2" ry="2"/><rect x="284.25" y="430.75" width="11.5" height="4.6" rx="2" ry="2"/><rect x="298.58" y="430.75" width="7.3" height="4.6" rx="2" ry="2"/><rect x="309.40" y="430.75" width="7.3" height="4.6" rx="2" ry="2"/><rect x="320.13" y="430.75" width="7.3" height="4.6" rx="2" ry="2"/><rect x="252.67" y="439.60" width="7.3" height="4.6" rx="2" ry="2"/><rect x="263.30" y="439.60" width="7.3" height="4.6" rx="2" ry="2"/><rect x="273.92" y="439.60" width="7.3" height="4.6" rx="2" ry="2"/><rect x="284.25" y="439.60" width="11.5" height="4.6" rx="2" ry="2"/><rect x="298.58" y="439.60" width="7.3" height="4.6" rx="2" ry="2"/><rect x="309.40" y="439.60" width="7.3" height="4.6" rx="2" ry="2"/><rect x="320.13" y="439.60" width="7.3" height="4.6" rx="2" ry="2"/><rect x="252.67" y="448.45" width="7.3" height="4.6" rx="2" ry="2"/><rect x="263.30" y="448.45" width="7.3" height="4.6" rx="2" ry="2"/><rect x="273.92" y="448.45" width="7.3" height="4.6" rx="2" ry="2"/><rect x="284.25" y="448.45" width="11.5" height="4.6" rx="2" ry="2"/><rect x="298.58" y="448.45" width="7.3" height="4.6" rx="2" ry="2"/><rect x="309.40" y="448.45" width="7.3" height="4.6" rx="2" ry="2"/><rect x="320.13" y="448.45" width="7.3" height="4.6" rx="2" ry="2"/><rect x="252.67" y="457.30" width="7.3" height="4.6" rx="2" ry="2"/><rect x="263.30" y="457.30" width="7.3" height="4.6" rx="2" ry="2"/><rect x="273.92" y="457.30" width="7.3" height="4.6" rx="2" ry="2"/><rect x="284.25" y="457.30" width="11.5" height="4.6" rx="2" ry="2"/><rect x="298.58" y="457.30" width="7.3" height="4.6" rx="2" ry="2"/><rect x="309.40" y="457.30" width="7.3" height="4.6" rx="2" ry="2"/><rect x="320.13" y="457.30" width="7.3" height="4.6" rx="2" ry="2"/><rect x="252.67" y="466.15" width="7.3" height="4.6" rx="2" ry="2"/><rect x="263.30" y="466.15" width="7.3" height="4.6" rx="2" ry="2"/><rect x="273.92" y="466.15" width="7.3" height="4.6" rx="2" ry="2"/><rect x="284.25" y="466.15" width="11.5" height="4.6" rx="2" ry="2"/><rect x="298.58" y="466.15" width="7.3" height="4.6" rx="2" ry="2"/><rect x="309.40" y="466.15" width="7.3" height="4.6" rx="2" ry="2"/><rect x="320.13" y="466.15" width="7.3" height="4.6" rx="2" ry="2"/><rect x="252.67" y="474.30" width="7.3" height="6.0" rx="2" ry="2"/><rect x="263.30" y="474.30" width="7.3" height="6.0" rx="2" ry="2"/><rect x="273.92" y="474.30" width="7.3" height="6.0" rx="2" ry="2"/><rect x="284.25" y="474.30" width="11.5" height="6.0" rx="2" ry="2"/><rect x="298.58" y="474.30" width="7.3" height="6.0" rx="2" ry="2"/><rect x="309.40" y="474.30" width="7.3" height="6.0" rx="2" ry="2"/><rect x="320.13" y="474.30" width="7.3" height="6.0" rx="2" ry="2"/><rect x="252.67" y="483.85" width="7.3" height="4.6" rx="2" ry="2"/><rect x="263.30" y="483.85" width="7.3" height="4.6" rx="2" ry="2"/><rect x="273.92" y="483.85" width="7.3" height="4.6" rx="2" ry="2"/><rect x="284.25" y="483.85" width="11.5" height="4.6" rx="2" ry="2"/><rect x="298.58" y="483.85" width="7.3" height="4.6" rx="2" ry="2"/><rect x="309.40" y="483.85" width="7.3" height="4.6" rx="2" ry="2"/><rect x="320.13" y="483.85" width="7.3" height="4.6" rx="2" ry="2"/><rect x="252.67" y="492.70" width="7.3" height="4.6" rx="2" ry="2"/><rect x="263.30" y="492.70" width="7.3" height="4.6" rx="2" ry="2"/><rect x="273.92" y="492.70" width="7.3" height="4.6" rx="2" ry="2"/><rect x="284.25" y="492.70" width="11.5" height="4.6" rx="2" ry="2"/><rect x="298.58" y="492.70" width="7.3" height="4.6" rx="2" ry="2"/><rect x="309.40" y="492.70" width="7.3" height="4.6" rx="2" ry="2"/><rect x="320.13" y="492.70" width="7.3" height="4.6" rx="2" ry="2"/><rect x="252.67" y="501.55" width="7.3" height="4.6" rx="2" ry="2"/><rect x="263.30" y="501.55" width="7.3" height="4.6" rx="2" ry="2"/><rect x="273.92" y="501.55" width="7.3" height="4.6" rx="2" ry="2"/><rect x="284.25" y="501.55" width="11.5" height="4.6" rx="2" ry="2"/><rect x="298.58" y="501.55" width="7.3" height="4.6" rx="2" ry="2"/><rect x="309.40" y="501.55" width="7.3" height="4.6" rx="2" ry="2"/><rect x="320.13" y="501.55" width="7.3" height="4.6" rx="2" ry="2"/><rect x="252.67" y="510.40" width="7.3" height="4.6" rx="2" ry="2"/><rect x="263.30" y="510.40" width="7.3" height="4.6" rx="2" ry="2"/><rect x="273.92" y="510.40" width="7.3" height="4.6" rx="2" ry="2"/><rect x="284.25" y="510.40" width="11.5" height="4.6" rx="2" ry="2"/><rect x="298.58" y="510.40" width="7.3" height="4.6" rx="2" ry="2"/><rect x="309.40" y="510.40" width="7.3" height="4.6" rx="2" ry="2"/><rect x="320.13" y="510.40" width="7.3" height="4.6" rx="2" ry="2"/><rect x="252.67" y="519.25" width="7.3" height="4.6" rx="2" ry="2"/><rect x="263.30" y="519.25" width="7.3" height="4.6" rx="2" ry="2"/><rect x="273.92" y="519.25" width="7.3" height="4.6" rx="2" ry="2"/><rect x="284.25" y="519.25" width="11.5" height="4.6" rx="2" ry="2"/><rect x="298.58" y="519.25" width="7.3" height="4.6" rx="2" ry="2"/><rect x="309.40" y="519.25" width="7.3" height="4.6" rx="2" ry="2"/><rect x="320.13" y="519.25" width="7.3" height="4.6" rx="2" ry="2"/><rect x="252.67" y="527.40" width="7.3" height="6.0" rx="2" ry="2"/><rect x="263.30" y="527.40" width="7.3" height="6.0" rx="2" ry="2"/><rect x="273.92" y="527.40" width="7.3" height="6.0" rx="2" ry="2"/><rect x="284.25" y="527.40" width="11.5" height="6.0" rx="2" ry="2"/><rect x="298.58" y="527.40" width="7.3" height="6.0" rx="2" ry="2"/><rect x="309.40" y="527.40" width="7.3" height="6.0" rx="2" ry="2"/><rect x="320.13" y="527.40" width="7.3" height="6.0" rx="2" ry="2"/><rect x="252.67" y="536.95" width="7.3" height="4.6" rx="2" ry="2"/><rect x="263.30" y="536.95" width="7.3" height="4.6" rx="2" ry="2"/><rect x="273.92" y="536.95" width="7.3" height="4.6" rx="2" ry="2"/><rect x="284.25" y="536.95" width="11.5" height="4.6" rx="2" ry="2"/><rect x="298.58" y="536.95" width="7.3" height="4.6" rx="2" ry="2"/><rect x="309.40" y="536.95" width="7.3" height="4.6" rx="2" ry="2"/><rect x="320.13" y="536.95" width="7.3" height="4.6" rx="2" ry="2"/><rect x="252.67" y="545.80" width="7.3" height="4.6" rx="2" ry="2"/><rect x="263.30" y="545.80" width="7.3" height="4.6" rx="2" ry="2"/><rect x="273.92" y="545.80" width="7.3" height="4.6" rx="2" ry="2"/><rect x="284.25" y="545.80" width="11.5" height="4.6" rx="2" ry="2"/><rect x="298.58" y="545.80" width="7.3" height="4.6" rx="2" ry="2"/><rect x="309.40" y="545.80" width="7.3" height="4.6" rx="2" ry="2"/><rect x="320.13" y="545.80" width="7.3" height="4.6" rx="2" ry="2"/><rect x="252.67" y="554.65" width="7.3" height="4.6" rx="2" ry="2"/><rect x="263.30" y="554.65" width="7.3" height="4.6" rx="2" ry="2"/><rect x="273.92" y="554.65" width="7.3" height="4.6" rx="2" ry="2"/><rect x="284.25" y="554.65" width="11.5" height="4.6" rx="2" ry="2"/><rect x="298.58" y="554.65" width="7.3" height="4.6" rx="2" ry="2"/><rect x="309.40" y="554.65" width="7.3" height="4.6" rx="2" ry="2"/><rect x="320.13" y="554.65" width="7.3" height="4.6" rx="2" ry="2"/><rect x="252.67" y="563.50" width="7.3" height="4.6" rx="2" ry="2"/><rect x="263.30" y="563.50" width="7.3" height="4.6" rx="2" ry="2"/><rect x="273.92" y="563.50" width="7.3" height="4.6" rx="2" ry="2"/><rect x="284.25" y="563.50" width="11.5" height="4.6" rx="2" ry="2"/><rect x="298.58" y="563.50" width="7.3" height="4.6" rx="2" ry="2"/><rect x="309.40" y="563.50" width="7.3" height="4.6" rx="2" ry="2"/><rect x="320.13" y="563.50" width="7.3" height="4.6" rx="2" ry="2"/><rect x="252.67" y="572.35" width="7.3" height="4.6" rx="2" ry="2"/><rect x="263.30" y="572.35" width="7.3" height="4.6" rx="2" ry="2"/><rect x="273.92" y="572.35" width="7.3" height="4.6" rx="2" ry="2"/><rect x="284.25" y="572.35" width="11.5" height="4.6" rx="2" ry="2"/><rect x="298.58" y="572.35" width="7.3" height="4.6" rx="2" ry="2"/><rect x="309.40" y="572.35" width="7.3" height="4.6" rx="2" ry="2"/><rect x="320.13" y="572.35" width="7.3" height="4.6" rx="2" ry="2"/><rect x="252.67" y="581.20" width="7.3" height="4.6" rx="2" ry="2"/><rect x="263.30" y="581.20" width="7.3" height="4.6" rx="2" ry="2"/><rect x="273.92" y="581.20" width="7.3" height="4.6" rx="2" ry="2"/><rect x="284.25" y="581.20" width="11.5" height="4.6" rx="2" ry="2"/><rect x="298.58" y="581.20" width="7.3" height="4.6" rx="2" ry="2"/><rect x="309.40" y="581.20" width="7.3" height="4.6" rx="2" ry="2"/><rect x="320.13" y="581.20" width="7.3" height="4.6" rx="2" ry="2"/></g><path d="M247.0 476.9H252.7M260.0 476.9H263.3M270.6 476.9H273.9M281.2 476.9H284.2M295.7 476.9H298.6M305.9 476.9H309.4M316.7 476.9H320.1M327.4 476.9H333.2M247.0 530.2H252.7M260.0 530.2H263.3M270.6 530.2H273.9M281.2 530.2H284.2M295.7 530.2H298.6M305.9 530.2H309.4M316.7 530.2H320.1M327.4 530.2H333.2" stroke="#8e8e8e" stroke-width="1.5"/><path d="M330.7 443.0v14" stroke="#8e8e8e" stroke-width="2.2"/><path d="M330.7 496.6v14" stroke="#8e8e8e" stroke-width="2.2"/><path d="M330.7 549.7v14" stroke="#8e8e8e" stroke-width="2.2"/><rect x="246.5" y="423.7" width="87.19999999999999" height="159.00000000000006" fill="none" stroke="#f2f2f2" stroke-width="1.2"/><path d="M246 423.3H211.7V583.2H246" fill="none" stroke="#f2f2f2" stroke-width="1" shape-rendering="crispEdges"/><clipPath id="c245_583"><rect x="245.5" y="583.9" width="141.8" height="87.0"/></clipPath><g clip-path="url(#c245_583)" fill="none" stroke="#8e8e8e" stroke-width="1.1" shape-rendering="crispEdges"><rect x="243.75" y="590.48" width="4.9" height="7.4" rx="2" ry="2"/><rect x="243.75" y="600.66" width="4.9" height="7.4" rx="2" ry="2"/><rect x="243.75" y="611.44" width="4.9" height="7.4" rx="2" ry="2"/><rect x="243.75" y="621.20" width="4.9" height="12.5" rx="2" ry="2"/><rect x="243.75" y="636.16" width="4.9" height="7.4" rx="2" ry="2"/><rect x="243.75" y="646.29" width="4.9" height="7.4" rx="2" ry="2"/><rect x="243.75" y="657.12" width="4.9" height="7.4" rx="2" ry="2"/><rect x="252.55" y="590.48" width="4.9" height="7.4" rx="2" ry="2"/><rect x="252.55" y="600.66" width="4.9" height="7.4" rx="2" ry="2"/><rect x="252.55" y="611.44" width="4.9" height="7.4" rx="2" ry="2"/><rect x="252.55" y="621.20" width="4.9" height="12.5" rx="2" ry="2"/><rect x="252.55" y="636.16" width="4.9" height="7.4" rx="2" ry="2"/><rect x="252.55" y="646.29" width="4.9" height="7.4" rx="2" ry="2"/><rect x="252.55" y="657.12" width="4.9" height="7.4" rx="2" ry="2"/><rect x="261.35" y="590.48" width="4.9" height="7.4" rx="2" ry="2"/><rect x="261.35" y="600.66" width="4.9" height="7.4" rx="2" ry="2"/><rect x="261.35" y="611.44" width="4.9" height="7.4" rx="2" ry="2"/><rect x="261.35" y="621.20" width="4.9" height="12.5" rx="2" ry="2"/><rect x="261.35" y="636.16" width="4.9" height="7.4" rx="2" ry="2"/><rect x="261.35" y="646.29" width="4.9" height="7.4" rx="2" ry="2"/><rect x="261.35" y="657.12" width="4.9" height="7.4" rx="2" ry="2"/><rect x="270.15" y="590.48" width="4.9" height="7.4" rx="2" ry="2"/><rect x="270.15" y="600.66" width="4.9" height="7.4" rx="2" ry="2"/><rect x="270.15" y="611.44" width="4.9" height="7.4" rx="2" ry="2"/><rect x="270.15" y="621.20" width="4.9" height="12.5" rx="2" ry="2"/><rect x="270.15" y="636.16" width="4.9" height="7.4" rx="2" ry="2"/><rect x="270.15" y="646.29" width="4.9" height="7.4" rx="2" ry="2"/><rect x="270.15" y="657.12" width="4.9" height="7.4" rx="2" ry="2"/><rect x="278.95" y="590.48" width="4.9" height="7.4" rx="2" ry="2"/><rect x="278.95" y="600.66" width="4.9" height="7.4" rx="2" ry="2"/><rect x="278.95" y="611.44" width="4.9" height="7.4" rx="2" ry="2"/><rect x="278.95" y="621.20" width="4.9" height="12.5" rx="2" ry="2"/><rect x="278.95" y="636.16" width="4.9" height="7.4" rx="2" ry="2"/><rect x="278.95" y="646.29" width="4.9" height="7.4" rx="2" ry="2"/><rect x="278.95" y="657.12" width="4.9" height="7.4" rx="2" ry="2"/><rect x="287.75" y="590.48" width="4.9" height="7.4" rx="2" ry="2"/><rect x="287.75" y="600.66" width="4.9" height="7.4" rx="2" ry="2"/><rect x="287.75" y="611.44" width="4.9" height="7.4" rx="2" ry="2"/><rect x="287.75" y="621.20" width="4.9" height="12.5" rx="2" ry="2"/><rect x="287.75" y="636.16" width="4.9" height="7.4" rx="2" ry="2"/><rect x="287.75" y="646.29" width="4.9" height="7.4" rx="2" ry="2"/><rect x="287.75" y="657.12" width="4.9" height="7.4" rx="2" ry="2"/><rect x="296.55" y="590.48" width="4.9" height="7.4" rx="2" ry="2"/><rect x="296.55" y="600.66" width="4.9" height="7.4" rx="2" ry="2"/><rect x="296.55" y="611.44" width="4.9" height="7.4" rx="2" ry="2"/><rect x="296.55" y="621.20" width="4.9" height="12.5" rx="2" ry="2"/><rect x="296.55" y="636.16" width="4.9" height="7.4" rx="2" ry="2"/><rect x="296.55" y="646.29" width="4.9" height="7.4" rx="2" ry="2"/><rect x="296.55" y="657.12" width="4.9" height="7.4" rx="2" ry="2"/><rect x="305.35" y="590.48" width="4.9" height="7.4" rx="2" ry="2"/><rect x="305.35" y="600.66" width="4.9" height="7.4" rx="2" ry="2"/><rect x="305.35" y="611.44" width="4.9" height="7.4" rx="2" ry="2"/><rect x="305.35" y="621.20" width="4.9" height="12.5" rx="2" ry="2"/><rect x="305.35" y="636.16" width="4.9" height="7.4" rx="2" ry="2"/><rect x="305.35" y="646.29" width="4.9" height="7.4" rx="2" ry="2"/><rect x="305.35" y="657.12" width="4.9" height="7.4" rx="2" ry="2"/><rect x="313.25" y="590.48" width="6.7" height="7.4" rx="2" ry="2"/><rect x="313.25" y="600.66" width="6.7" height="7.4" rx="2" ry="2"/><rect x="313.25" y="611.44" width="6.7" height="7.4" rx="2" ry="2"/><rect x="313.25" y="621.20" width="6.7" height="12.5" rx="2" ry="2"/><rect x="313.25" y="636.16" width="6.7" height="7.4" rx="2" ry="2"/><rect x="313.25" y="646.29" width="6.7" height="7.4" rx="2" ry="2"/><rect x="313.25" y="657.12" width="6.7" height="7.4" rx="2" ry="2"/><rect x="322.95" y="590.48" width="4.9" height="7.4" rx="2" ry="2"/><rect x="322.95" y="600.66" width="4.9" height="7.4" rx="2" ry="2"/><rect x="322.95" y="611.44" width="4.9" height="7.4" rx="2" ry="2"/><rect x="322.95" y="621.20" width="4.9" height="12.5" rx="2" ry="2"/><rect x="322.95" y="636.16" width="4.9" height="7.4" rx="2" ry="2"/><rect x="322.95" y="646.29" width="4.9" height="7.4" rx="2" ry="2"/><rect x="322.95" y="657.12" width="4.9" height="7.4" rx="2" ry="2"/><rect x="331.75" y="590.48" width="4.9" height="7.4" rx="2" ry="2"/><rect x="331.75" y="600.66" width="4.9" height="7.4" rx="2" ry="2"/><rect x="331.75" y="611.44" width="4.9" height="7.4" rx="2" ry="2"/><rect x="331.75" y="621.20" width="4.9" height="12.5" rx="2" ry="2"/><rect x="331.75" y="636.16" width="4.9" height="7.4" rx="2" ry="2"/><rect x="331.75" y="646.29" width="4.9" height="7.4" rx="2" ry="2"/><rect x="331.75" y="657.12" width="4.9" height="7.4" rx="2" ry="2"/><rect x="340.55" y="590.48" width="4.9" height="7.4" rx="2" ry="2"/><rect x="340.55" y="600.66" width="4.9" height="7.4" rx="2" ry="2"/><rect x="340.55" y="611.44" width="4.9" height="7.4" rx="2" ry="2"/><rect x="340.55" y="621.20" width="4.9" height="12.5" rx="2" ry="2"/><rect x="340.55" y="636.16" width="4.9" height="7.4" rx="2" ry="2"/><rect x="340.55" y="646.29" width="4.9" height="7.4" rx="2" ry="2"/><rect x="340.55" y="657.12" width="4.9" height="7.4" rx="2" ry="2"/><rect x="349.35" y="590.48" width="4.9" height="7.4" rx="2" ry="2"/><rect x="349.35" y="600.66" width="4.9" height="7.4" rx="2" ry="2"/><rect x="349.35" y="611.44" width="4.9" height="7.4" rx="2" ry="2"/><rect x="349.35" y="621.20" width="4.9" height="12.5" rx="2" ry="2"/><rect x="349.35" y="636.16" width="4.9" height="7.4" rx="2" ry="2"/><rect x="349.35" y="646.29" width="4.9" height="7.4" rx="2" ry="2"/><rect x="349.35" y="657.12" width="4.9" height="7.4" rx="2" ry="2"/><rect x="358.15" y="590.48" width="4.9" height="7.4" rx="2" ry="2"/><rect x="358.15" y="600.66" width="4.9" height="7.4" rx="2" ry="2"/><rect x="358.15" y="611.44" width="4.9" height="7.4" rx="2" ry="2"/><rect x="358.15" y="621.20" width="4.9" height="12.5" rx="2" ry="2"/><rect x="358.15" y="636.16" width="4.9" height="7.4" rx="2" ry="2"/><rect x="358.15" y="646.29" width="4.9" height="7.4" rx="2" ry="2"/><rect x="358.15" y="657.12" width="4.9" height="7.4" rx="2" ry="2"/><rect x="366.95" y="590.48" width="4.9" height="7.4" rx="2" ry="2"/><rect x="366.95" y="600.66" width="4.9" height="7.4" rx="2" ry="2"/><rect x="366.95" y="611.44" width="4.9" height="7.4" rx="2" ry="2"/><rect x="366.95" y="621.20" width="4.9" height="12.5" rx="2" ry="2"/><rect x="366.95" y="636.16" width="4.9" height="7.4" rx="2" ry="2"/><rect x="366.95" y="646.29" width="4.9" height="7.4" rx="2" ry="2"/><rect x="366.95" y="657.12" width="4.9" height="7.4" rx="2" ry="2"/><rect x="375.75" y="590.48" width="4.9" height="7.4" rx="2" ry="2"/><rect x="375.75" y="600.66" width="4.9" height="7.4" rx="2" ry="2"/><rect x="375.75" y="611.44" width="4.9" height="7.4" rx="2" ry="2"/><rect x="375.75" y="621.20" width="4.9" height="12.5" rx="2" ry="2"/><rect x="375.75" y="636.16" width="4.9" height="7.4" rx="2" ry="2"/><rect x="375.75" y="646.29" width="4.9" height="7.4" rx="2" ry="2"/><rect x="375.75" y="657.12" width="4.9" height="7.4" rx="2" ry="2"/><rect x="384.55" y="590.48" width="4.9" height="7.4" rx="2" ry="2"/><rect x="384.55" y="600.66" width="4.9" height="7.4" rx="2" ry="2"/><rect x="384.55" y="611.44" width="4.9" height="7.4" rx="2" ry="2"/><rect x="384.55" y="621.20" width="4.9" height="12.5" rx="2" ry="2"/><rect x="384.55" y="636.16" width="4.9" height="7.4" rx="2" ry="2"/><rect x="384.55" y="646.29" width="4.9" height="7.4" rx="2" ry="2"/><rect x="384.55" y="657.12" width="4.9" height="7.4" rx="2" ry="2"/></g><path d="M316.3 583.9V590.5M316.3 597.9V600.7M316.3 608.1V611.4M316.3 618.8V621.2M316.3 633.7V636.2M316.3 643.6V646.3M316.3 653.7V657.1M316.3 664.5V670.9" stroke="#8e8e8e" stroke-width="1.5"/><rect x="245.5" y="584.6999999999999" width="141.8" height="85.4" fill="none" stroke="#8e8e8e" stroke-width="1.7"/><path d="M274.9 667.6h13M274.9 665.4v3.5" stroke="#8e8e8e" stroke-width="1.6"/><path d="M345.8 667.6h13M345.8 665.4v3.5" stroke="#8e8e8e" stroke-width="1.6"/><clipPath id="c392_583"><rect x="392" y="583.9" width="159.29999999999995" height="87.0"/></clipPath><g clip-path="url(#c392_583)" fill="none" stroke="#8e8e8e" stroke-width="1.1" shape-rendering="crispEdges"><rect x="390.25" y="590.48" width="4.9" height="7.4" rx="2" ry="2"/><rect x="390.25" y="600.66" width="4.9" height="7.4" rx="2" ry="2"/><rect x="390.25" y="611.44" width="4.9" height="7.4" rx="2" ry="2"/><rect x="390.25" y="621.20" width="4.9" height="12.5" rx="2" ry="2"/><rect x="390.25" y="636.16" width="4.9" height="7.4" rx="2" ry="2"/><rect x="390.25" y="646.29" width="4.9" height="7.4" rx="2" ry="2"/><rect x="390.25" y="657.12" width="4.9" height="7.4" rx="2" ry="2"/><rect x="399.05" y="590.48" width="4.9" height="7.4" rx="2" ry="2"/><rect x="399.05" y="600.66" width="4.9" height="7.4" rx="2" ry="2"/><rect x="399.05" y="611.44" width="4.9" height="7.4" rx="2" ry="2"/><rect x="399.05" y="621.20" width="4.9" height="12.5" rx="2" ry="2"/><rect x="399.05" y="636.16" width="4.9" height="7.4" rx="2" ry="2"/><rect x="399.05" y="646.29" width="4.9" height="7.4" rx="2" ry="2"/><rect x="399.05" y="657.12" width="4.9" height="7.4" rx="2" ry="2"/><rect x="407.85" y="590.48" width="4.9" height="7.4" rx="2" ry="2"/><rect x="407.85" y="600.66" width="4.9" height="7.4" rx="2" ry="2"/><rect x="407.85" y="611.44" width="4.9" height="7.4" rx="2" ry="2"/><rect x="407.85" y="621.20" width="4.9" height="12.5" rx="2" ry="2"/><rect x="407.85" y="636.16" width="4.9" height="7.4" rx="2" ry="2"/><rect x="407.85" y="646.29" width="4.9" height="7.4" rx="2" ry="2"/><rect x="407.85" y="657.12" width="4.9" height="7.4" rx="2" ry="2"/><rect x="416.65" y="590.48" width="4.9" height="7.4" rx="2" ry="2"/><rect x="416.65" y="600.66" width="4.9" height="7.4" rx="2" ry="2"/><rect x="416.65" y="611.44" width="4.9" height="7.4" rx="2" ry="2"/><rect x="416.65" y="621.20" width="4.9" height="12.5" rx="2" ry="2"/><rect x="416.65" y="636.16" width="4.9" height="7.4" rx="2" ry="2"/><rect x="416.65" y="646.29" width="4.9" height="7.4" rx="2" ry="2"/><rect x="416.65" y="657.12" width="4.9" height="7.4" rx="2" ry="2"/><rect x="425.45" y="590.48" width="4.9" height="7.4" rx="2" ry="2"/><rect x="425.45" y="600.66" width="4.9" height="7.4" rx="2" ry="2"/><rect x="425.45" y="611.44" width="4.9" height="7.4" rx="2" ry="2"/><rect x="425.45" y="621.20" width="4.9" height="12.5" rx="2" ry="2"/><rect x="425.45" y="636.16" width="4.9" height="7.4" rx="2" ry="2"/><rect x="425.45" y="646.29" width="4.9" height="7.4" rx="2" ry="2"/><rect x="425.45" y="657.12" width="4.9" height="7.4" rx="2" ry="2"/><rect x="434.25" y="590.48" width="4.9" height="7.4" rx="2" ry="2"/><rect x="434.25" y="600.66" width="4.9" height="7.4" rx="2" ry="2"/><rect x="434.25" y="611.44" width="4.9" height="7.4" rx="2" ry="2"/><rect x="434.25" y="621.20" width="4.9" height="12.5" rx="2" ry="2"/><rect x="434.25" y="636.16" width="4.9" height="7.4" rx="2" ry="2"/><rect x="434.25" y="646.29" width="4.9" height="7.4" rx="2" ry="2"/><rect x="434.25" y="657.12" width="4.9" height="7.4" rx="2" ry="2"/><rect x="442.15" y="590.48" width="6.7" height="7.4" rx="2" ry="2"/><rect x="442.15" y="600.66" width="6.7" height="7.4" rx="2" ry="2"/><rect x="442.15" y="611.44" width="6.7" height="7.4" rx="2" ry="2"/><rect x="442.15" y="621.20" width="6.7" height="12.5" rx="2" ry="2"/><rect x="442.15" y="636.16" width="6.7" height="7.4" rx="2" ry="2"/><rect x="442.15" y="646.29" width="6.7" height="7.4" rx="2" ry="2"/><rect x="442.15" y="657.12" width="6.7" height="7.4" rx="2" ry="2"/><rect x="451.85" y="590.48" width="4.9" height="7.4" rx="2" ry="2"/><rect x="451.85" y="600.66" width="4.9" height="7.4" rx="2" ry="2"/><rect x="451.85" y="611.44" width="4.9" height="7.4" rx="2" ry="2"/><rect x="451.85" y="621.20" width="4.9" height="12.5" rx="2" ry="2"/><rect x="451.85" y="636.16" width="4.9" height="7.4" rx="2" ry="2"/><rect x="451.85" y="646.29" width="4.9" height="7.4" rx="2" ry="2"/><rect x="451.85" y="657.12" width="4.9" height="7.4" rx="2" ry="2"/><rect x="460.65" y="590.48" width="4.9" height="7.4" rx="2" ry="2"/><rect x="460.65" y="600.66" width="4.9" height="7.4" rx="2" ry="2"/><rect x="460.65" y="611.44" width="4.9" height="7.4" rx="2" ry="2"/><rect x="460.65" y="621.20" width="4.9" height="12.5" rx="2" ry="2"/><rect x="460.65" y="636.16" width="4.9" height="7.4" rx="2" ry="2"/><rect x="460.65" y="646.29" width="4.9" height="7.4" rx="2" ry="2"/><rect x="460.65" y="657.12" width="4.9" height="7.4" rx="2" ry="2"/><rect x="469.45" y="590.48" width="4.9" height="7.4" rx="2" ry="2"/><rect x="469.45" y="600.66" width="4.9" height="7.4" rx="2" ry="2"/><rect x="469.45" y="611.44" width="4.9" height="7.4" rx="2" ry="2"/><rect x="469.45" y="621.20" width="4.9" height="12.5" rx="2" ry="2"/><rect x="469.45" y="636.16" width="4.9" height="7.4" rx="2" ry="2"/><rect x="469.45" y="646.29" width="4.9" height="7.4" rx="2" ry="2"/><rect x="469.45" y="657.12" width="4.9" height="7.4" rx="2" ry="2"/><rect x="478.25" y="590.48" width="4.9" height="7.4" rx="2" ry="2"/><rect x="478.25" y="600.66" width="4.9" height="7.4" rx="2" ry="2"/><rect x="478.25" y="611.44" width="4.9" height="7.4" rx="2" ry="2"/><rect x="478.25" y="621.20" width="4.9" height="12.5" rx="2" ry="2"/><rect x="478.25" y="636.16" width="4.9" height="7.4" rx="2" ry="2"/><rect x="478.25" y="646.29" width="4.9" height="7.4" rx="2" ry="2"/><rect x="478.25" y="657.12" width="4.9" height="7.4" rx="2" ry="2"/><rect x="487.05" y="590.48" width="4.9" height="7.4" rx="2" ry="2"/><rect x="487.05" y="600.66" width="4.9" height="7.4" rx="2" ry="2"/><rect x="487.05" y="611.44" width="4.9" height="7.4" rx="2" ry="2"/><rect x="487.05" y="621.20" width="4.9" height="12.5" rx="2" ry="2"/><rect x="487.05" y="636.16" width="4.9" height="7.4" rx="2" ry="2"/><rect x="487.05" y="646.29" width="4.9" height="7.4" rx="2" ry="2"/><rect x="487.05" y="657.12" width="4.9" height="7.4" rx="2" ry="2"/><rect x="494.95" y="590.48" width="6.7" height="7.4" rx="2" ry="2"/><rect x="494.95" y="600.66" width="6.7" height="7.4" rx="2" ry="2"/><rect x="494.95" y="611.44" width="6.7" height="7.4" rx="2" ry="2"/><rect x="494.95" y="621.20" width="6.7" height="12.5" rx="2" ry="2"/><rect x="494.95" y="636.16" width="6.7" height="7.4" rx="2" ry="2"/><rect x="494.95" y="646.29" width="6.7" height="7.4" rx="2" ry="2"/><rect x="494.95" y="657.12" width="6.7" height="7.4" rx="2" ry="2"/><rect x="504.65" y="590.48" width="4.9" height="7.4" rx="2" ry="2"/><rect x="504.65" y="600.66" width="4.9" height="7.4" rx="2" ry="2"/><rect x="504.65" y="611.44" width="4.9" height="7.4" rx="2" ry="2"/><rect x="504.65" y="621.20" width="4.9" height="12.5" rx="2" ry="2"/><rect x="504.65" y="636.16" width="4.9" height="7.4" rx="2" ry="2"/><rect x="504.65" y="646.29" width="4.9" height="7.4" rx="2" ry="2"/><rect x="504.65" y="657.12" width="4.9" height="7.4" rx="2" ry="2"/><rect x="513.45" y="590.48" width="4.9" height="7.4" rx="2" ry="2"/><rect x="513.45" y="600.66" width="4.9" height="7.4" rx="2" ry="2"/><rect x="513.45" y="611.44" width="4.9" height="7.4" rx="2" ry="2"/><rect x="513.45" y="621.20" width="4.9" height="12.5" rx="2" ry="2"/><rect x="513.45" y="636.16" width="4.9" height="7.4" rx="2" ry="2"/><rect x="513.45" y="646.29" width="4.9" height="7.4" rx="2" ry="2"/><rect x="513.45" y="657.12" width="4.9" height="7.4" rx="2" ry="2"/><rect x="522.25" y="590.48" width="4.9" height="7.4" rx="2" ry="2"/><rect x="522.25" y="600.66" width="4.9" height="7.4" rx="2" ry="2"/><rect x="522.25" y="611.44" width="4.9" height="7.4" rx="2" ry="2"/><rect x="522.25" y="621.20" width="4.9" height="12.5" rx="2" ry="2"/><rect x="522.25" y="636.16" width="4.9" height="7.4" rx="2" ry="2"/><rect x="522.25" y="646.29" width="4.9" height="7.4" rx="2" ry="2"/><rect x="522.25" y="657.12" width="4.9" height="7.4" rx="2" ry="2"/><rect x="531.05" y="590.48" width="4.9" height="7.4" rx="2" ry="2"/><rect x="531.05" y="600.66" width="4.9" height="7.4" rx="2" ry="2"/><rect x="531.05" y="611.44" width="4.9" height="7.4" rx="2" ry="2"/><rect x="531.05" y="621.20" width="4.9" height="12.5" rx="2" ry="2"/><rect x="531.05" y="636.16" width="4.9" height="7.4" rx="2" ry="2"/><rect x="531.05" y="646.29" width="4.9" height="7.4" rx="2" ry="2"/><rect x="531.05" y="657.12" width="4.9" height="7.4" rx="2" ry="2"/><rect x="539.85" y="590.48" width="4.9" height="7.4" rx="2" ry="2"/><rect x="539.85" y="600.66" width="4.9" height="7.4" rx="2" ry="2"/><rect x="539.85" y="611.44" width="4.9" height="7.4" rx="2" ry="2"/><rect x="539.85" y="621.20" width="4.9" height="12.5" rx="2" ry="2"/><rect x="539.85" y="636.16" width="4.9" height="7.4" rx="2" ry="2"/><rect x="539.85" y="646.29" width="4.9" height="7.4" rx="2" ry="2"/><rect x="539.85" y="657.12" width="4.9" height="7.4" rx="2" ry="2"/><rect x="548.65" y="590.48" width="4.9" height="7.4" rx="2" ry="2"/><rect x="548.65" y="600.66" width="4.9" height="7.4" rx="2" ry="2"/><rect x="548.65" y="611.44" width="4.9" height="7.4" rx="2" ry="2"/><rect x="548.65" y="621.20" width="4.9" height="12.5" rx="2" ry="2"/><rect x="548.65" y="636.16" width="4.9" height="7.4" rx="2" ry="2"/><rect x="548.65" y="646.29" width="4.9" height="7.4" rx="2" ry="2"/><rect x="548.65" y="657.12" width="4.9" height="7.4" rx="2" ry="2"/></g><path d="M445 583.9V590.5M445 597.9V600.7M445 608.1V611.4M445 618.8V621.2M445 633.7V636.2M445 643.6V646.3M445 653.7V657.1M445 664.5V670.9M498 583.9V590.5M498 597.9V600.7M498 608.1V611.4M498 618.8V621.2M498 633.7V636.2M498 643.6V646.3M498 653.7V657.1M498 664.5V670.9" stroke="#8e8e8e" stroke-width="1.5"/><rect x="392" y="584.6999999999999" width="159.29999999999995" height="85.4" fill="none" stroke="#8e8e8e" stroke-width="1.7"/><path d="M412.5 667.6h13M412.5 665.4v3.5" stroke="#8e8e8e" stroke-width="1.6"/><path d="M465.5 667.6h13M465.5 665.4v3.5" stroke="#8e8e8e" stroke-width="1.6"/><path d="M518.6 667.6h13M518.6 665.4v3.5" stroke="#8e8e8e" stroke-width="1.6"/><g shape-rendering="crispEdges"><rect x="240" y="584" width="5" height="87" fill="#f2f2f2"/><rect x="242" y="589" width="1" height="77" fill="#1c2128"/><rect x="241" y="585" width="3" height="4" fill="#15181d"/><rect x="241" y="666" width="3" height="4" fill="#15181d"/></g><g shape-rendering="crispEdges"><rect x="387" y="584" width="5" height="87" fill="#f2f2f2"/><rect x="389" y="589" width="1" height="77" fill="#1c2128"/><rect x="388" y="585" width="3" height="4" fill="#15181d"/><rect x="388" y="666" width="3" height="4" fill="#15181d"/></g><g shape-rendering="crispEdges"><rect x="551" y="584" width="5" height="87" fill="#f2f2f2"/><rect x="553" y="589" width="1" height="77" fill="#1c2128"/><rect x="552" y="585" width="3" height="4" fill="#15181d"/><rect x="552" y="666" width="3" height="4" fill="#15181d"/></g><path d="M241 583.7H211.1V671H241 M240.1 583.7V706H556V671" fill="none" stroke="#f2f2f2" stroke-width="1" shape-rendering="crispEdges"/><clipPath id="c873_343"><rect x="873.5" y="343.4" width="141.70000000000005" height="86.80000000000001"/></clipPath><g clip-path="url(#c873_343)" fill="none" stroke="#8e8e8e" stroke-width="1.1" shape-rendering="crispEdges"><rect x="871.75" y="349.96" width="4.9" height="7.4" rx="2" ry="2"/><rect x="871.75" y="360.12" width="4.9" height="7.4" rx="2" ry="2"/><rect x="871.75" y="370.87" width="4.9" height="7.4" rx="2" ry="2"/><rect x="871.75" y="380.60" width="4.9" height="12.5" rx="2" ry="2"/><rect x="871.75" y="395.53" width="4.9" height="7.4" rx="2" ry="2"/><rect x="871.75" y="405.64" width="4.9" height="7.4" rx="2" ry="2"/><rect x="871.75" y="416.44" width="4.9" height="7.4" rx="2" ry="2"/><rect x="880.55" y="349.96" width="4.9" height="7.4" rx="2" ry="2"/><rect x="880.55" y="360.12" width="4.9" height="7.4" rx="2" ry="2"/><rect x="880.55" y="370.87" width="4.9" height="7.4" rx="2" ry="2"/><rect x="880.55" y="380.60" width="4.9" height="12.5" rx="2" ry="2"/><rect x="880.55" y="395.53" width="4.9" height="7.4" rx="2" ry="2"/><rect x="880.55" y="405.64" width="4.9" height="7.4" rx="2" ry="2"/><rect x="880.55" y="416.44" width="4.9" height="7.4" rx="2" ry="2"/><rect x="889.35" y="349.96" width="4.9" height="7.4" rx="2" ry="2"/><rect x="889.35" y="360.12" width="4.9" height="7.4" rx="2" ry="2"/><rect x="889.35" y="370.87" width="4.9" height="7.4" rx="2" ry="2"/><rect x="889.35" y="380.60" width="4.9" height="12.5" rx="2" ry="2"/><rect x="889.35" y="395.53" width="4.9" height="7.4" rx="2" ry="2"/><rect x="889.35" y="405.64" width="4.9" height="7.4" rx="2" ry="2"/><rect x="889.35" y="416.44" width="4.9" height="7.4" rx="2" ry="2"/><rect x="898.15" y="349.96" width="4.9" height="7.4" rx="2" ry="2"/><rect x="898.15" y="360.12" width="4.9" height="7.4" rx="2" ry="2"/><rect x="898.15" y="370.87" width="4.9" height="7.4" rx="2" ry="2"/><rect x="898.15" y="380.60" width="4.9" height="12.5" rx="2" ry="2"/><rect x="898.15" y="395.53" width="4.9" height="7.4" rx="2" ry="2"/><rect x="898.15" y="405.64" width="4.9" height="7.4" rx="2" ry="2"/><rect x="898.15" y="416.44" width="4.9" height="7.4" rx="2" ry="2"/><rect x="906.95" y="349.96" width="4.9" height="7.4" rx="2" ry="2"/><rect x="906.95" y="360.12" width="4.9" height="7.4" rx="2" ry="2"/><rect x="906.95" y="370.87" width="4.9" height="7.4" rx="2" ry="2"/><rect x="906.95" y="380.60" width="4.9" height="12.5" rx="2" ry="2"/><rect x="906.95" y="395.53" width="4.9" height="7.4" rx="2" ry="2"/><rect x="906.95" y="405.64" width="4.9" height="7.4" rx="2" ry="2"/><rect x="906.95" y="416.44" width="4.9" height="7.4" rx="2" ry="2"/><rect x="915.75" y="349.96" width="4.9" height="7.4" rx="2" ry="2"/><rect x="915.75" y="360.12" width="4.9" height="7.4" rx="2" ry="2"/><rect x="915.75" y="370.87" width="4.9" height="7.4" rx="2" ry="2"/><rect x="915.75" y="380.60" width="4.9" height="12.5" rx="2" ry="2"/><rect x="915.75" y="395.53" width="4.9" height="7.4" rx="2" ry="2"/><rect x="915.75" y="405.64" width="4.9" height="7.4" rx="2" ry="2"/><rect x="915.75" y="416.44" width="4.9" height="7.4" rx="2" ry="2"/><rect x="924.55" y="349.96" width="4.9" height="7.4" rx="2" ry="2"/><rect x="924.55" y="360.12" width="4.9" height="7.4" rx="2" ry="2"/><rect x="924.55" y="370.87" width="4.9" height="7.4" rx="2" ry="2"/><rect x="924.55" y="380.60" width="4.9" height="12.5" rx="2" ry="2"/><rect x="924.55" y="395.53" width="4.9" height="7.4" rx="2" ry="2"/><rect x="924.55" y="405.64" width="4.9" height="7.4" rx="2" ry="2"/><rect x="924.55" y="416.44" width="4.9" height="7.4" rx="2" ry="2"/><rect x="933.35" y="349.96" width="4.9" height="7.4" rx="2" ry="2"/><rect x="933.35" y="360.12" width="4.9" height="7.4" rx="2" ry="2"/><rect x="933.35" y="370.87" width="4.9" height="7.4" rx="2" ry="2"/><rect x="933.35" y="380.60" width="4.9" height="12.5" rx="2" ry="2"/><rect x="933.35" y="395.53" width="4.9" height="7.4" rx="2" ry="2"/><rect x="933.35" y="405.64" width="4.9" height="7.4" rx="2" ry="2"/><rect x="933.35" y="416.44" width="4.9" height="7.4" rx="2" ry="2"/><rect x="941.25" y="349.96" width="6.7" height="7.4" rx="2" ry="2"/><rect x="941.25" y="360.12" width="6.7" height="7.4" rx="2" ry="2"/><rect x="941.25" y="370.87" width="6.7" height="7.4" rx="2" ry="2"/><rect x="941.25" y="380.60" width="6.7" height="12.5" rx="2" ry="2"/><rect x="941.25" y="395.53" width="6.7" height="7.4" rx="2" ry="2"/><rect x="941.25" y="405.64" width="6.7" height="7.4" rx="2" ry="2"/><rect x="941.25" y="416.44" width="6.7" height="7.4" rx="2" ry="2"/><rect x="950.95" y="349.96" width="4.9" height="7.4" rx="2" ry="2"/><rect x="950.95" y="360.12" width="4.9" height="7.4" rx="2" ry="2"/><rect x="950.95" y="370.87" width="4.9" height="7.4" rx="2" ry="2"/><rect x="950.95" y="380.60" width="4.9" height="12.5" rx="2" ry="2"/><rect x="950.95" y="395.53" width="4.9" height="7.4" rx="2" ry="2"/><rect x="950.95" y="405.64" width="4.9" height="7.4" rx="2" ry="2"/><rect x="950.95" y="416.44" width="4.9" height="7.4" rx="2" ry="2"/><rect x="959.75" y="349.96" width="4.9" height="7.4" rx="2" ry="2"/><rect x="959.75" y="360.12" width="4.9" height="7.4" rx="2" ry="2"/><rect x="959.75" y="370.87" width="4.9" height="7.4" rx="2" ry="2"/><rect x="959.75" y="380.60" width="4.9" height="12.5" rx="2" ry="2"/><rect x="959.75" y="395.53" width="4.9" height="7.4" rx="2" ry="2"/><rect x="959.75" y="405.64" width="4.9" height="7.4" rx="2" ry="2"/><rect x="959.75" y="416.44" width="4.9" height="7.4" rx="2" ry="2"/><rect x="968.55" y="349.96" width="4.9" height="7.4" rx="2" ry="2"/><rect x="968.55" y="360.12" width="4.9" height="7.4" rx="2" ry="2"/><rect x="968.55" y="370.87" width="4.9" height="7.4" rx="2" ry="2"/><rect x="968.55" y="380.60" width="4.9" height="12.5" rx="2" ry="2"/><rect x="968.55" y="395.53" width="4.9" height="7.4" rx="2" ry="2"/><rect x="968.55" y="405.64" width="4.9" height="7.4" rx="2" ry="2"/><rect x="968.55" y="416.44" width="4.9" height="7.4" rx="2" ry="2"/><rect x="977.35" y="349.96" width="4.9" height="7.4" rx="2" ry="2"/><rect x="977.35" y="360.12" width="4.9" height="7.4" rx="2" ry="2"/><rect x="977.35" y="370.87" width="4.9" height="7.4" rx="2" ry="2"/><rect x="977.35" y="380.60" width="4.9" height="12.5" rx="2" ry="2"/><rect x="977.35" y="395.53" width="4.9" height="7.4" rx="2" ry="2"/><rect x="977.35" y="405.64" width="4.9" height="7.4" rx="2" ry="2"/><rect x="977.35" y="416.44" width="4.9" height="7.4" rx="2" ry="2"/><rect x="986.15" y="349.96" width="4.9" height="7.4" rx="2" ry="2"/><rect x="986.15" y="360.12" width="4.9" height="7.4" rx="2" ry="2"/><rect x="986.15" y="370.87" width="4.9" height="7.4" rx="2" ry="2"/><rect x="986.15" y="380.60" width="4.9" height="12.5" rx="2" ry="2"/><rect x="986.15" y="395.53" width="4.9" height="7.4" rx="2" ry="2"/><rect x="986.15" y="405.64" width="4.9" height="7.4" rx="2" ry="2"/><rect x="986.15" y="416.44" width="4.9" height="7.4" rx="2" ry="2"/><rect x="994.95" y="349.96" width="4.9" height="7.4" rx="2" ry="2"/><rect x="994.95" y="360.12" width="4.9" height="7.4" rx="2" ry="2"/><rect x="994.95" y="370.87" width="4.9" height="7.4" rx="2" ry="2"/><rect x="994.95" y="380.60" width="4.9" height="12.5" rx="2" ry="2"/><rect x="994.95" y="395.53" width="4.9" height="7.4" rx="2" ry="2"/><rect x="994.95" y="405.64" width="4.9" height="7.4" rx="2" ry="2"/><rect x="994.95" y="416.44" width="4.9" height="7.4" rx="2" ry="2"/><rect x="1003.75" y="349.96" width="4.9" height="7.4" rx="2" ry="2"/><rect x="1003.75" y="360.12" width="4.9" height="7.4" rx="2" ry="2"/><rect x="1003.75" y="370.87" width="4.9" height="7.4" rx="2" ry="2"/><rect x="1003.75" y="380.60" width="4.9" height="12.5" rx="2" ry="2"/><rect x="1003.75" y="395.53" width="4.9" height="7.4" rx="2" ry="2"/><rect x="1003.75" y="405.64" width="4.9" height="7.4" rx="2" ry="2"/><rect x="1003.75" y="416.44" width="4.9" height="7.4" rx="2" ry="2"/><rect x="1012.55" y="349.96" width="4.9" height="7.4" rx="2" ry="2"/><rect x="1012.55" y="360.12" width="4.9" height="7.4" rx="2" ry="2"/><rect x="1012.55" y="370.87" width="4.9" height="7.4" rx="2" ry="2"/><rect x="1012.55" y="380.60" width="4.9" height="12.5" rx="2" ry="2"/><rect x="1012.55" y="395.53" width="4.9" height="7.4" rx="2" ry="2"/><rect x="1012.55" y="405.64" width="4.9" height="7.4" rx="2" ry="2"/><rect x="1012.55" y="416.44" width="4.9" height="7.4" rx="2" ry="2"/></g><path d="M944.3 343.4V350.0M944.3 357.4V360.1M944.3 367.5V370.9M944.3 378.3V380.6M944.3 393.1V395.5M944.3 402.9V405.6M944.3 413.0V416.4M944.3 423.8V430.2" stroke="#8e8e8e" stroke-width="1.5"/><rect x="873.5" y="344.2" width="141.70000000000005" height="85.20000000000002" fill="none" stroke="#8e8e8e" stroke-width="1.7"/><path d="M902.9 426.9h13M902.9 424.7v3.5" stroke="#8e8e8e" stroke-width="1.6"/><path d="M973.8 426.9h13M973.8 424.7v3.5" stroke="#8e8e8e" stroke-width="1.6"/><clipPath id="c1020_343"><rect x="1020" y="343.4" width="141.70000000000005" height="86.80000000000001"/></clipPath><g clip-path="url(#c1020_343)" fill="none" stroke="#8e8e8e" stroke-width="1.1" shape-rendering="crispEdges"><rect x="1018.25" y="349.96" width="4.9" height="7.4" rx="2" ry="2"/><rect x="1018.25" y="360.12" width="4.9" height="7.4" rx="2" ry="2"/><rect x="1018.25" y="370.87" width="4.9" height="7.4" rx="2" ry="2"/><rect x="1018.25" y="380.60" width="4.9" height="12.5" rx="2" ry="2"/><rect x="1018.25" y="395.53" width="4.9" height="7.4" rx="2" ry="2"/><rect x="1018.25" y="405.64" width="4.9" height="7.4" rx="2" ry="2"/><rect x="1018.25" y="416.44" width="4.9" height="7.4" rx="2" ry="2"/><rect x="1027.05" y="349.96" width="4.9" height="7.4" rx="2" ry="2"/><rect x="1027.05" y="360.12" width="4.9" height="7.4" rx="2" ry="2"/><rect x="1027.05" y="370.87" width="4.9" height="7.4" rx="2" ry="2"/><rect x="1027.05" y="380.60" width="4.9" height="12.5" rx="2" ry="2"/><rect x="1027.05" y="395.53" width="4.9" height="7.4" rx="2" ry="2"/><rect x="1027.05" y="405.64" width="4.9" height="7.4" rx="2" ry="2"/><rect x="1027.05" y="416.44" width="4.9" height="7.4" rx="2" ry="2"/><rect x="1035.85" y="349.96" width="4.9" height="7.4" rx="2" ry="2"/><rect x="1035.85" y="360.12" width="4.9" height="7.4" rx="2" ry="2"/><rect x="1035.85" y="370.87" width="4.9" height="7.4" rx="2" ry="2"/><rect x="1035.85" y="380.60" width="4.9" height="12.5" rx="2" ry="2"/><rect x="1035.85" y="395.53" width="4.9" height="7.4" rx="2" ry="2"/><rect x="1035.85" y="405.64" width="4.9" height="7.4" rx="2" ry="2"/><rect x="1035.85" y="416.44" width="4.9" height="7.4" rx="2" ry="2"/><rect x="1044.65" y="349.96" width="4.9" height="7.4" rx="2" ry="2"/><rect x="1044.65" y="360.12" width="4.9" height="7.4" rx="2" ry="2"/><rect x="1044.65" y="370.87" width="4.9" height="7.4" rx="2" ry="2"/><rect x="1044.65" y="380.60" width="4.9" height="12.5" rx="2" ry="2"/><rect x="1044.65" y="395.53" width="4.9" height="7.4" rx="2" ry="2"/><rect x="1044.65" y="405.64" width="4.9" height="7.4" rx="2" ry="2"/><rect x="1044.65" y="416.44" width="4.9" height="7.4" rx="2" ry="2"/><rect x="1053.45" y="349.96" width="4.9" height="7.4" rx="2" ry="2"/><rect x="1053.45" y="360.12" width="4.9" height="7.4" rx="2" ry="2"/><rect x="1053.45" y="370.87" width="4.9" height="7.4" rx="2" ry="2"/><rect x="1053.45" y="380.60" width="4.9" height="12.5" rx="2" ry="2"/><rect x="1053.45" y="395.53" width="4.9" height="7.4" rx="2" ry="2"/><rect x="1053.45" y="405.64" width="4.9" height="7.4" rx="2" ry="2"/><rect x="1053.45" y="416.44" width="4.9" height="7.4" rx="2" ry="2"/><rect x="1062.25" y="349.96" width="4.9" height="7.4" rx="2" ry="2"/><rect x="1062.25" y="360.12" width="4.9" height="7.4" rx="2" ry="2"/><rect x="1062.25" y="370.87" width="4.9" height="7.4" rx="2" ry="2"/><rect x="1062.25" y="380.60" width="4.9" height="12.5" rx="2" ry="2"/><rect x="1062.25" y="395.53" width="4.9" height="7.4" rx="2" ry="2"/><rect x="1062.25" y="405.64" width="4.9" height="7.4" rx="2" ry="2"/><rect x="1062.25" y="416.44" width="4.9" height="7.4" rx="2" ry="2"/><rect x="1071.05" y="349.96" width="4.9" height="7.4" rx="2" ry="2"/><rect x="1071.05" y="360.12" width="4.9" height="7.4" rx="2" ry="2"/><rect x="1071.05" y="370.87" width="4.9" height="7.4" rx="2" ry="2"/><rect x="1071.05" y="380.60" width="4.9" height="12.5" rx="2" ry="2"/><rect x="1071.05" y="395.53" width="4.9" height="7.4" rx="2" ry="2"/><rect x="1071.05" y="405.64" width="4.9" height="7.4" rx="2" ry="2"/><rect x="1071.05" y="416.44" width="4.9" height="7.4" rx="2" ry="2"/><rect x="1079.85" y="349.96" width="4.9" height="7.4" rx="2" ry="2"/><rect x="1079.85" y="360.12" width="4.9" height="7.4" rx="2" ry="2"/><rect x="1079.85" y="370.87" width="4.9" height="7.4" rx="2" ry="2"/><rect x="1079.85" y="380.60" width="4.9" height="12.5" rx="2" ry="2"/><rect x="1079.85" y="395.53" width="4.9" height="7.4" rx="2" ry="2"/><rect x="1079.85" y="405.64" width="4.9" height="7.4" rx="2" ry="2"/><rect x="1079.85" y="416.44" width="4.9" height="7.4" rx="2" ry="2"/><rect x="1087.75" y="349.96" width="6.7" height="7.4" rx="2" ry="2"/><rect x="1087.75" y="360.12" width="6.7" height="7.4" rx="2" ry="2"/><rect x="1087.75" y="370.87" width="6.7" height="7.4" rx="2" ry="2"/><rect x="1087.75" y="380.60" width="6.7" height="12.5" rx="2" ry="2"/><rect x="1087.75" y="395.53" width="6.7" height="7.4" rx="2" ry="2"/><rect x="1087.75" y="405.64" width="6.7" height="7.4" rx="2" ry="2"/><rect x="1087.75" y="416.44" width="6.7" height="7.4" rx="2" ry="2"/><rect x="1097.45" y="349.96" width="4.9" height="7.4" rx="2" ry="2"/><rect x="1097.45" y="360.12" width="4.9" height="7.4" rx="2" ry="2"/><rect x="1097.45" y="370.87" width="4.9" height="7.4" rx="2" ry="2"/><rect x="1097.45" y="380.60" width="4.9" height="12.5" rx="2" ry="2"/><rect x="1097.45" y="395.53" width="4.9" height="7.4" rx="2" ry="2"/><rect x="1097.45" y="405.64" width="4.9" height="7.4" rx="2" ry="2"/><rect x="1097.45" y="416.44" width="4.9" height="7.4" rx="2" ry="2"/><rect x="1106.25" y="349.96" width="4.9" height="7.4" rx="2" ry="2"/><rect x="1106.25" y="360.12" width="4.9" height="7.4" rx="2" ry="2"/><rect x="1106.25" y="370.87" width="4.9" height="7.4" rx="2" ry="2"/><rect x="1106.25" y="380.60" width="4.9" height="12.5" rx="2" ry="2"/><rect x="1106.25" y="395.53" width="4.9" height="7.4" rx="2" ry="2"/><rect x="1106.25" y="405.64" width="4.9" height="7.4" rx="2" ry="2"/><rect x="1106.25" y="416.44" width="4.9" height="7.4" rx="2" ry="2"/><rect x="1115.05" y="349.96" width="4.9" height="7.4" rx="2" ry="2"/><rect x="1115.05" y="360.12" width="4.9" height="7.4" rx="2" ry="2"/><rect x="1115.05" y="370.87" width="4.9" height="7.4" rx="2" ry="2"/><rect x="1115.05" y="380.60" width="4.9" height="12.5" rx="2" ry="2"/><rect x="1115.05" y="395.53" width="4.9" height="7.4" rx="2" ry="2"/><rect x="1115.05" y="405.64" width="4.9" height="7.4" rx="2" ry="2"/><rect x="1115.05" y="416.44" width="4.9" height="7.4" rx="2" ry="2"/><rect x="1123.85" y="349.96" width="4.9" height="7.4" rx="2" ry="2"/><rect x="1123.85" y="360.12" width="4.9" height="7.4" rx="2" ry="2"/><rect x="1123.85" y="370.87" width="4.9" height="7.4" rx="2" ry="2"/><rect x="1123.85" y="380.60" width="4.9" height="12.5" rx="2" ry="2"/><rect x="1123.85" y="395.53" width="4.9" height="7.4" rx="2" ry="2"/><rect x="1123.85" y="405.64" width="4.9" height="7.4" rx="2" ry="2"/><rect x="1123.85" y="416.44" width="4.9" height="7.4" rx="2" ry="2"/><rect x="1132.65" y="349.96" width="4.9" height="7.4" rx="2" ry="2"/><rect x="1132.65" y="360.12" width="4.9" height="7.4" rx="2" ry="2"/><rect x="1132.65" y="370.87" width="4.9" height="7.4" rx="2" ry="2"/><rect x="1132.65" y="380.60" width="4.9" height="12.5" rx="2" ry="2"/><rect x="1132.65" y="395.53" width="4.9" height="7.4" rx="2" ry="2"/><rect x="1132.65" y="405.64" width="4.9" height="7.4" rx="2" ry="2"/><rect x="1132.65" y="416.44" width="4.9" height="7.4" rx="2" ry="2"/><rect x="1141.45" y="349.96" width="4.9" height="7.4" rx="2" ry="2"/><rect x="1141.45" y="360.12" width="4.9" height="7.4" rx="2" ry="2"/><rect x="1141.45" y="370.87" width="4.9" height="7.4" rx="2" ry="2"/><rect x="1141.45" y="380.60" width="4.9" height="12.5" rx="2" ry="2"/><rect x="1141.45" y="395.53" width="4.9" height="7.4" rx="2" ry="2"/><rect x="1141.45" y="405.64" width="4.9" height="7.4" rx="2" ry="2"/><rect x="1141.45" y="416.44" width="4.9" height="7.4" rx="2" ry="2"/><rect x="1150.25" y="349.96" width="4.9" height="7.4" rx="2" ry="2"/><rect x="1150.25" y="360.12" width="4.9" height="7.4" rx="2" ry="2"/><rect x="1150.25" y="370.87" width="4.9" height="7.4" rx="2" ry="2"/><rect x="1150.25" y="380.60" width="4.9" height="12.5" rx="2" ry="2"/><rect x="1150.25" y="395.53" width="4.9" height="7.4" rx="2" ry="2"/><rect x="1150.25" y="405.64" width="4.9" height="7.4" rx="2" ry="2"/><rect x="1150.25" y="416.44" width="4.9" height="7.4" rx="2" ry="2"/><rect x="1159.05" y="349.96" width="4.9" height="7.4" rx="2" ry="2"/><rect x="1159.05" y="360.12" width="4.9" height="7.4" rx="2" ry="2"/><rect x="1159.05" y="370.87" width="4.9" height="7.4" rx="2" ry="2"/><rect x="1159.05" y="380.60" width="4.9" height="12.5" rx="2" ry="2"/><rect x="1159.05" y="395.53" width="4.9" height="7.4" rx="2" ry="2"/><rect x="1159.05" y="405.64" width="4.9" height="7.4" rx="2" ry="2"/><rect x="1159.05" y="416.44" width="4.9" height="7.4" rx="2" ry="2"/></g><path d="M1091 343.4V350.0M1091 357.4V360.1M1091 367.5V370.9M1091 378.3V380.6M1091 393.1V395.5M1091 402.9V405.6M1091 413.0V416.4M1091 423.8V430.2" stroke="#8e8e8e" stroke-width="1.5"/><rect x="1020" y="344.2" width="141.70000000000005" height="85.20000000000002" fill="none" stroke="#8e8e8e" stroke-width="1.7"/><path d="M1049.5 426.9h13M1049.5 424.7v3.5" stroke="#8e8e8e" stroke-width="1.6"/><path d="M1120.3 426.9h13M1120.3 424.7v3.5" stroke="#8e8e8e" stroke-width="1.6"/><g shape-rendering="crispEdges"><rect x="868" y="343" width="5" height="87" fill="#f2f2f2"/><rect x="870" y="348" width="1" height="77" fill="#1c2128"/><rect x="869" y="344" width="3" height="4" fill="#15181d"/><rect x="869" y="425" width="3" height="4" fill="#15181d"/></g><g shape-rendering="crispEdges"><rect x="1015" y="343" width="5" height="87" fill="#f2f2f2"/><rect x="1017" y="348" width="1" height="77" fill="#1c2128"/><rect x="1016" y="344" width="3" height="4" fill="#15181d"/><rect x="1016" y="425" width="3" height="4" fill="#15181d"/></g><g shape-rendering="crispEdges"><rect x="1162" y="343" width="5" height="87" fill="#f2f2f2"/><rect x="1164" y="348" width="1" height="77" fill="#1c2128"/><rect x="1163" y="344" width="3" height="4" fill="#15181d"/><rect x="1163" y="425" width="3" height="4" fill="#15181d"/></g><path d="M868.1 343V313.5H1166.5V343 M868.5 343H832.5V430.2" fill="none" stroke="#f2f2f2" stroke-width="1" shape-rendering="crispEdges"/><clipPath id="v1042_430"><rect x="1042.4" y="430.6" width="86.89999999999986" height="158.60000000000002"/></clipPath><g clip-path="url(#v1042_430)" fill="none" stroke="#8e8e8e" stroke-width="1.1" shape-rendering="crispEdges"><rect x="1048.92" y="429.30" width="7.3" height="4.6" rx="2" ry="2"/><rect x="1059.39" y="429.30" width="7.3" height="4.6" rx="2" ry="2"/><rect x="1069.86" y="429.30" width="7.3" height="4.6" rx="2" ry="2"/><rect x="1080.00" y="429.30" width="11.5" height="4.6" rx="2" ry="2"/><rect x="1094.15" y="429.30" width="7.3" height="4.6" rx="2" ry="2"/><rect x="1104.81" y="429.30" width="7.3" height="4.6" rx="2" ry="2"/><rect x="1115.38" y="429.30" width="7.3" height="4.6" rx="2" ry="2"/><rect x="1048.92" y="438.15" width="7.3" height="4.6" rx="2" ry="2"/><rect x="1059.39" y="438.15" width="7.3" height="4.6" rx="2" ry="2"/><rect x="1069.86" y="438.15" width="7.3" height="4.6" rx="2" ry="2"/><rect x="1080.00" y="438.15" width="11.5" height="4.6" rx="2" ry="2"/><rect x="1094.15" y="438.15" width="7.3" height="4.6" rx="2" ry="2"/><rect x="1104.81" y="438.15" width="7.3" height="4.6" rx="2" ry="2"/><rect x="1115.38" y="438.15" width="7.3" height="4.6" rx="2" ry="2"/><rect x="1048.92" y="447.00" width="7.3" height="4.6" rx="2" ry="2"/><rect x="1059.39" y="447.00" width="7.3" height="4.6" rx="2" ry="2"/><rect x="1069.86" y="447.00" width="7.3" height="4.6" rx="2" ry="2"/><rect x="1080.00" y="447.00" width="11.5" height="4.6" rx="2" ry="2"/><rect x="1094.15" y="447.00" width="7.3" height="4.6" rx="2" ry="2"/><rect x="1104.81" y="447.00" width="7.3" height="4.6" rx="2" ry="2"/><rect x="1115.38" y="447.00" width="7.3" height="4.6" rx="2" ry="2"/><rect x="1048.92" y="455.85" width="7.3" height="4.6" rx="2" ry="2"/><rect x="1059.39" y="455.85" width="7.3" height="4.6" rx="2" ry="2"/><rect x="1069.86" y="455.85" width="7.3" height="4.6" rx="2" ry="2"/><rect x="1080.00" y="455.85" width="11.5" height="4.6" rx="2" ry="2"/><rect x="1094.15" y="455.85" width="7.3" height="4.6" rx="2" ry="2"/><rect x="1104.81" y="455.85" width="7.3" height="4.6" rx="2" ry="2"/><rect x="1115.38" y="455.85" width="7.3" height="4.6" rx="2" ry="2"/><rect x="1048.92" y="464.70" width="7.3" height="4.6" rx="2" ry="2"/><rect x="1059.39" y="464.70" width="7.3" height="4.6" rx="2" ry="2"/><rect x="1069.86" y="464.70" width="7.3" height="4.6" rx="2" ry="2"/><rect x="1080.00" y="464.70" width="11.5" height="4.6" rx="2" ry="2"/><rect x="1094.15" y="464.70" width="7.3" height="4.6" rx="2" ry="2"/><rect x="1104.81" y="464.70" width="7.3" height="4.6" rx="2" ry="2"/><rect x="1115.38" y="464.70" width="7.3" height="4.6" rx="2" ry="2"/><rect x="1048.92" y="473.55" width="7.3" height="4.6" rx="2" ry="2"/><rect x="1059.39" y="473.55" width="7.3" height="4.6" rx="2" ry="2"/><rect x="1069.86" y="473.55" width="7.3" height="4.6" rx="2" ry="2"/><rect x="1080.00" y="473.55" width="11.5" height="4.6" rx="2" ry="2"/><rect x="1094.15" y="473.55" width="7.3" height="4.6" rx="2" ry="2"/><rect x="1104.81" y="473.55" width="7.3" height="4.6" rx="2" ry="2"/><rect x="1115.38" y="473.55" width="7.3" height="4.6" rx="2" ry="2"/><rect x="1048.92" y="481.70" width="7.3" height="6.0" rx="2" ry="2"/><rect x="1059.39" y="481.70" width="7.3" height="6.0" rx="2" ry="2"/><rect x="1069.86" y="481.70" width="7.3" height="6.0" rx="2" ry="2"/><rect x="1080.00" y="481.70" width="11.5" height="6.0" rx="2" ry="2"/><rect x="1094.15" y="481.70" width="7.3" height="6.0" rx="2" ry="2"/><rect x="1104.81" y="481.70" width="7.3" height="6.0" rx="2" ry="2"/><rect x="1115.38" y="481.70" width="7.3" height="6.0" rx="2" ry="2"/><rect x="1048.92" y="491.25" width="7.3" height="4.6" rx="2" ry="2"/><rect x="1059.39" y="491.25" width="7.3" height="4.6" rx="2" ry="2"/><rect x="1069.86" y="491.25" width="7.3" height="4.6" rx="2" ry="2"/><rect x="1080.00" y="491.25" width="11.5" height="4.6" rx="2" ry="2"/><rect x="1094.15" y="491.25" width="7.3" height="4.6" rx="2" ry="2"/><rect x="1104.81" y="491.25" width="7.3" height="4.6" rx="2" ry="2"/><rect x="1115.38" y="491.25" width="7.3" height="4.6" rx="2" ry="2"/><rect x="1048.92" y="500.10" width="7.3" height="4.6" rx="2" ry="2"/><rect x="1059.39" y="500.10" width="7.3" height="4.6" rx="2" ry="2"/><rect x="1069.86" y="500.10" width="7.3" height="4.6" rx="2" ry="2"/><rect x="1080.00" y="500.10" width="11.5" height="4.6" rx="2" ry="2"/><rect x="1094.15" y="500.10" width="7.3" height="4.6" rx="2" ry="2"/><rect x="1104.81" y="500.10" width="7.3" height="4.6" rx="2" ry="2"/><rect x="1115.38" y="500.10" width="7.3" height="4.6" rx="2" ry="2"/><rect x="1048.92" y="508.95" width="7.3" height="4.6" rx="2" ry="2"/><rect x="1059.39" y="508.95" width="7.3" height="4.6" rx="2" ry="2"/><rect x="1069.86" y="508.95" width="7.3" height="4.6" rx="2" ry="2"/><rect x="1080.00" y="508.95" width="11.5" height="4.6" rx="2" ry="2"/><rect x="1094.15" y="508.95" width="7.3" height="4.6" rx="2" ry="2"/><rect x="1104.81" y="508.95" width="7.3" height="4.6" rx="2" ry="2"/><rect x="1115.38" y="508.95" width="7.3" height="4.6" rx="2" ry="2"/><rect x="1048.92" y="517.80" width="7.3" height="4.6" rx="2" ry="2"/><rect x="1059.39" y="517.80" width="7.3" height="4.6" rx="2" ry="2"/><rect x="1069.86" y="517.80" width="7.3" height="4.6" rx="2" ry="2"/><rect x="1080.00" y="517.80" width="11.5" height="4.6" rx="2" ry="2"/><rect x="1094.15" y="517.80" width="7.3" height="4.6" rx="2" ry="2"/><rect x="1104.81" y="517.80" width="7.3" height="4.6" rx="2" ry="2"/><rect x="1115.38" y="517.80" width="7.3" height="4.6" rx="2" ry="2"/><rect x="1048.92" y="526.65" width="7.3" height="4.6" rx="2" ry="2"/><rect x="1059.39" y="526.65" width="7.3" height="4.6" rx="2" ry="2"/><rect x="1069.86" y="526.65" width="7.3" height="4.6" rx="2" ry="2"/><rect x="1080.00" y="526.65" width="11.5" height="4.6" rx="2" ry="2"/><rect x="1094.15" y="526.65" width="7.3" height="4.6" rx="2" ry="2"/><rect x="1104.81" y="526.65" width="7.3" height="4.6" rx="2" ry="2"/><rect x="1115.38" y="526.65" width="7.3" height="4.6" rx="2" ry="2"/><rect x="1048.92" y="534.80" width="7.3" height="6.0" rx="2" ry="2"/><rect x="1059.39" y="534.80" width="7.3" height="6.0" rx="2" ry="2"/><rect x="1069.86" y="534.80" width="7.3" height="6.0" rx="2" ry="2"/><rect x="1080.00" y="534.80" width="11.5" height="6.0" rx="2" ry="2"/><rect x="1094.15" y="534.80" width="7.3" height="6.0" rx="2" ry="2"/><rect x="1104.81" y="534.80" width="7.3" height="6.0" rx="2" ry="2"/><rect x="1115.38" y="534.80" width="7.3" height="6.0" rx="2" ry="2"/><rect x="1048.92" y="544.35" width="7.3" height="4.6" rx="2" ry="2"/><rect x="1059.39" y="544.35" width="7.3" height="4.6" rx="2" ry="2"/><rect x="1069.86" y="544.35" width="7.3" height="4.6" rx="2" ry="2"/><rect x="1080.00" y="544.35" width="11.5" height="4.6" rx="2" ry="2"/><rect x="1094.15" y="544.35" width="7.3" height="4.6" rx="2" ry="2"/><rect x="1104.81" y="544.35" width="7.3" height="4.6" rx="2" ry="2"/><rect x="1115.38" y="544.35" width="7.3" height="4.6" rx="2" ry="2"/><rect x="1048.92" y="553.20" width="7.3" height="4.6" rx="2" ry="2"/><rect x="1059.39" y="553.20" width="7.3" height="4.6" rx="2" ry="2"/><rect x="1069.86" y="553.20" width="7.3" height="4.6" rx="2" ry="2"/><rect x="1080.00" y="553.20" width="11.5" height="4.6" rx="2" ry="2"/><rect x="1094.15" y="553.20" width="7.3" height="4.6" rx="2" ry="2"/><rect x="1104.81" y="553.20" width="7.3" height="4.6" rx="2" ry="2"/><rect x="1115.38" y="553.20" width="7.3" height="4.6" rx="2" ry="2"/><rect x="1048.92" y="562.05" width="7.3" height="4.6" rx="2" ry="2"/><rect x="1059.39" y="562.05" width="7.3" height="4.6" rx="2" ry="2"/><rect x="1069.86" y="562.05" width="7.3" height="4.6" rx="2" ry="2"/><rect x="1080.00" y="562.05" width="11.5" height="4.6" rx="2" ry="2"/><rect x="1094.15" y="562.05" width="7.3" height="4.6" rx="2" ry="2"/><rect x="1104.81" y="562.05" width="7.3" height="4.6" rx="2" ry="2"/><rect x="1115.38" y="562.05" width="7.3" height="4.6" rx="2" ry="2"/><rect x="1048.92" y="570.90" width="7.3" height="4.6" rx="2" ry="2"/><rect x="1059.39" y="570.90" width="7.3" height="4.6" rx="2" ry="2"/><rect x="1069.86" y="570.90" width="7.3" height="4.6" rx="2" ry="2"/><rect x="1080.00" y="570.90" width="11.5" height="4.6" rx="2" ry="2"/><rect x="1094.15" y="570.90" width="7.3" height="4.6" rx="2" ry="2"/><rect x="1104.81" y="570.90" width="7.3" height="4.6" rx="2" ry="2"/><rect x="1115.38" y="570.90" width="7.3" height="4.6" rx="2" ry="2"/><rect x="1048.92" y="579.75" width="7.3" height="4.6" rx="2" ry="2"/><rect x="1059.39" y="579.75" width="7.3" height="4.6" rx="2" ry="2"/><rect x="1069.86" y="579.75" width="7.3" height="4.6" rx="2" ry="2"/><rect x="1080.00" y="579.75" width="11.5" height="4.6" rx="2" ry="2"/><rect x="1094.15" y="579.75" width="7.3" height="4.6" rx="2" ry="2"/><rect x="1104.81" y="579.75" width="7.3" height="4.6" rx="2" ry="2"/><rect x="1115.38" y="579.75" width="7.3" height="4.6" rx="2" ry="2"/><rect x="1048.92" y="588.60" width="7.3" height="4.6" rx="2" ry="2"/><rect x="1059.39" y="588.60" width="7.3" height="4.6" rx="2" ry="2"/><rect x="1069.86" y="588.60" width="7.3" height="4.6" rx="2" ry="2"/><rect x="1080.00" y="588.60" width="11.5" height="4.6" rx="2" ry="2"/><rect x="1094.15" y="588.60" width="7.3" height="4.6" rx="2" ry="2"/><rect x="1104.81" y="588.60" width="7.3" height="4.6" rx="2" ry="2"/><rect x="1115.38" y="588.60" width="7.3" height="4.6" rx="2" ry="2"/></g><path d="M1043.4 483.6H1048.9M1056.2 483.6H1059.4M1066.7 483.6H1069.9M1077.2 483.6H1080.0M1091.5 483.6H1094.1M1101.4 483.6H1104.8M1112.1 483.6H1115.4M1122.7 483.6H1128.3M1043.4 537H1048.9M1056.2 537H1059.4M1066.7 537H1069.9M1077.2 537H1080.0M1091.5 537H1094.1M1101.4 537H1104.8M1112.1 537H1115.4M1122.7 537H1128.3" stroke="#8e8e8e" stroke-width="1.5"/><path d="M1125.8 450.1v14" stroke="#8e8e8e" stroke-width="2.2"/><path d="M1125.8 503.3v14" stroke="#8e8e8e" stroke-width="2.2"/><path d="M1125.8 556.1v14" stroke="#8e8e8e" stroke-width="2.2"/><rect x="1042.9" y="431.1" width="85.89999999999986" height="157.60000000000002" fill="none" stroke="#f2f2f2" stroke-width="1.2"/><path d="M1042.4 430.6H814.5V588.3H1042.4" fill="none" stroke="#f2f2f2" stroke-width="1" shape-rendering="crispEdges"/><clipPath id="c685_590"><rect x="685" y="590.5" width="212.60000000000002" height="87.39999999999998"/></clipPath><g clip-path="url(#c685_590)" fill="none" stroke="#8e8e8e" stroke-width="1.1" shape-rendering="crispEdges"><rect x="683.25" y="597.13" width="4.9" height="7.4" rx="2" ry="2"/><rect x="683.25" y="607.36" width="4.9" height="7.4" rx="2" ry="2"/><rect x="683.25" y="618.18" width="4.9" height="7.4" rx="2" ry="2"/><rect x="683.25" y="628.00" width="4.9" height="12.5" rx="2" ry="2"/><rect x="683.25" y="643.01" width="4.9" height="7.4" rx="2" ry="2"/><rect x="683.25" y="653.19" width="4.9" height="7.4" rx="2" ry="2"/><rect x="683.25" y="664.07" width="4.9" height="7.4" rx="2" ry="2"/><rect x="692.05" y="597.13" width="4.9" height="7.4" rx="2" ry="2"/><rect x="692.05" y="607.36" width="4.9" height="7.4" rx="2" ry="2"/><rect x="692.05" y="618.18" width="4.9" height="7.4" rx="2" ry="2"/><rect x="692.05" y="628.00" width="4.9" height="12.5" rx="2" ry="2"/><rect x="692.05" y="643.01" width="4.9" height="7.4" rx="2" ry="2"/><rect x="692.05" y="653.19" width="4.9" height="7.4" rx="2" ry="2"/><rect x="692.05" y="664.07" width="4.9" height="7.4" rx="2" ry="2"/><rect x="700.85" y="597.13" width="4.9" height="7.4" rx="2" ry="2"/><rect x="700.85" y="607.36" width="4.9" height="7.4" rx="2" ry="2"/><rect x="700.85" y="618.18" width="4.9" height="7.4" rx="2" ry="2"/><rect x="700.85" y="628.00" width="4.9" height="12.5" rx="2" ry="2"/><rect x="700.85" y="643.01" width="4.9" height="7.4" rx="2" ry="2"/><rect x="700.85" y="653.19" width="4.9" height="7.4" rx="2" ry="2"/><rect x="700.85" y="664.07" width="4.9" height="7.4" rx="2" ry="2"/><rect x="709.65" y="597.13" width="4.9" height="7.4" rx="2" ry="2"/><rect x="709.65" y="607.36" width="4.9" height="7.4" rx="2" ry="2"/><rect x="709.65" y="618.18" width="4.9" height="7.4" rx="2" ry="2"/><rect x="709.65" y="628.00" width="4.9" height="12.5" rx="2" ry="2"/><rect x="709.65" y="643.01" width="4.9" height="7.4" rx="2" ry="2"/><rect x="709.65" y="653.19" width="4.9" height="7.4" rx="2" ry="2"/><rect x="709.65" y="664.07" width="4.9" height="7.4" rx="2" ry="2"/><rect x="718.45" y="597.13" width="4.9" height="7.4" rx="2" ry="2"/><rect x="718.45" y="607.36" width="4.9" height="7.4" rx="2" ry="2"/><rect x="718.45" y="618.18" width="4.9" height="7.4" rx="2" ry="2"/><rect x="718.45" y="628.00" width="4.9" height="12.5" rx="2" ry="2"/><rect x="718.45" y="643.01" width="4.9" height="7.4" rx="2" ry="2"/><rect x="718.45" y="653.19" width="4.9" height="7.4" rx="2" ry="2"/><rect x="718.45" y="664.07" width="4.9" height="7.4" rx="2" ry="2"/><rect x="727.25" y="597.13" width="4.9" height="7.4" rx="2" ry="2"/><rect x="727.25" y="607.36" width="4.9" height="7.4" rx="2" ry="2"/><rect x="727.25" y="618.18" width="4.9" height="7.4" rx="2" ry="2"/><rect x="727.25" y="628.00" width="4.9" height="12.5" rx="2" ry="2"/><rect x="727.25" y="643.01" width="4.9" height="7.4" rx="2" ry="2"/><rect x="727.25" y="653.19" width="4.9" height="7.4" rx="2" ry="2"/><rect x="727.25" y="664.07" width="4.9" height="7.4" rx="2" ry="2"/><rect x="736.05" y="597.13" width="4.9" height="7.4" rx="2" ry="2"/><rect x="736.05" y="607.36" width="4.9" height="7.4" rx="2" ry="2"/><rect x="736.05" y="618.18" width="4.9" height="7.4" rx="2" ry="2"/><rect x="736.05" y="628.00" width="4.9" height="12.5" rx="2" ry="2"/><rect x="736.05" y="643.01" width="4.9" height="7.4" rx="2" ry="2"/><rect x="736.05" y="653.19" width="4.9" height="7.4" rx="2" ry="2"/><rect x="736.05" y="664.07" width="4.9" height="7.4" rx="2" ry="2"/><rect x="744.85" y="597.13" width="4.9" height="7.4" rx="2" ry="2"/><rect x="744.85" y="607.36" width="4.9" height="7.4" rx="2" ry="2"/><rect x="744.85" y="618.18" width="4.9" height="7.4" rx="2" ry="2"/><rect x="744.85" y="628.00" width="4.9" height="12.5" rx="2" ry="2"/><rect x="744.85" y="643.01" width="4.9" height="7.4" rx="2" ry="2"/><rect x="744.85" y="653.19" width="4.9" height="7.4" rx="2" ry="2"/><rect x="744.85" y="664.07" width="4.9" height="7.4" rx="2" ry="2"/><rect x="752.75" y="597.13" width="6.7" height="7.4" rx="2" ry="2"/><rect x="752.75" y="607.36" width="6.7" height="7.4" rx="2" ry="2"/><rect x="752.75" y="618.18" width="6.7" height="7.4" rx="2" ry="2"/><rect x="752.75" y="628.00" width="6.7" height="12.5" rx="2" ry="2"/><rect x="752.75" y="643.01" width="6.7" height="7.4" rx="2" ry="2"/><rect x="752.75" y="653.19" width="6.7" height="7.4" rx="2" ry="2"/><rect x="752.75" y="664.07" width="6.7" height="7.4" rx="2" ry="2"/><rect x="762.45" y="597.13" width="4.9" height="7.4" rx="2" ry="2"/><rect x="762.45" y="607.36" width="4.9" height="7.4" rx="2" ry="2"/><rect x="762.45" y="618.18" width="4.9" height="7.4" rx="2" ry="2"/><rect x="762.45" y="628.00" width="4.9" height="12.5" rx="2" ry="2"/><rect x="762.45" y="643.01" width="4.9" height="7.4" rx="2" ry="2"/><rect x="762.45" y="653.19" width="4.9" height="7.4" rx="2" ry="2"/><rect x="762.45" y="664.07" width="4.9" height="7.4" rx="2" ry="2"/><rect x="771.25" y="597.13" width="4.9" height="7.4" rx="2" ry="2"/><rect x="771.25" y="607.36" width="4.9" height="7.4" rx="2" ry="2"/><rect x="771.25" y="618.18" width="4.9" height="7.4" rx="2" ry="2"/><rect x="771.25" y="628.00" width="4.9" height="12.5" rx="2" ry="2"/><rect x="771.25" y="643.01" width="4.9" height="7.4" rx="2" ry="2"/><rect x="771.25" y="653.19" width="4.9" height="7.4" rx="2" ry="2"/><rect x="771.25" y="664.07" width="4.9" height="7.4" rx="2" ry="2"/><rect x="780.05" y="597.13" width="4.9" height="7.4" rx="2" ry="2"/><rect x="780.05" y="607.36" width="4.9" height="7.4" rx="2" ry="2"/><rect x="780.05" y="618.18" width="4.9" height="7.4" rx="2" ry="2"/><rect x="780.05" y="628.00" width="4.9" height="12.5" rx="2" ry="2"/><rect x="780.05" y="643.01" width="4.9" height="7.4" rx="2" ry="2"/><rect x="780.05" y="653.19" width="4.9" height="7.4" rx="2" ry="2"/><rect x="780.05" y="664.07" width="4.9" height="7.4" rx="2" ry="2"/><rect x="788.85" y="597.13" width="4.9" height="7.4" rx="2" ry="2"/><rect x="788.85" y="607.36" width="4.9" height="7.4" rx="2" ry="2"/><rect x="788.85" y="618.18" width="4.9" height="7.4" rx="2" ry="2"/><rect x="788.85" y="628.00" width="4.9" height="12.5" rx="2" ry="2"/><rect x="788.85" y="643.01" width="4.9" height="7.4" rx="2" ry="2"/><rect x="788.85" y="653.19" width="4.9" height="7.4" rx="2" ry="2"/><rect x="788.85" y="664.07" width="4.9" height="7.4" rx="2" ry="2"/><rect x="797.65" y="597.13" width="4.9" height="7.4" rx="2" ry="2"/><rect x="797.65" y="607.36" width="4.9" height="7.4" rx="2" ry="2"/><rect x="797.65" y="618.18" width="4.9" height="7.4" rx="2" ry="2"/><rect x="797.65" y="628.00" width="4.9" height="12.5" rx="2" ry="2"/><rect x="797.65" y="643.01" width="4.9" height="7.4" rx="2" ry="2"/><rect x="797.65" y="653.19" width="4.9" height="7.4" rx="2" ry="2"/><rect x="797.65" y="664.07" width="4.9" height="7.4" rx="2" ry="2"/><rect x="806.45" y="597.13" width="4.9" height="7.4" rx="2" ry="2"/><rect x="806.45" y="607.36" width="4.9" height="7.4" rx="2" ry="2"/><rect x="806.45" y="618.18" width="4.9" height="7.4" rx="2" ry="2"/><rect x="806.45" y="628.00" width="4.9" height="12.5" rx="2" ry="2"/><rect x="806.45" y="643.01" width="4.9" height="7.4" rx="2" ry="2"/><rect x="806.45" y="653.19" width="4.9" height="7.4" rx="2" ry="2"/><rect x="806.45" y="664.07" width="4.9" height="7.4" rx="2" ry="2"/><rect x="815.25" y="597.13" width="4.9" height="7.4" rx="2" ry="2"/><rect x="815.25" y="607.36" width="4.9" height="7.4" rx="2" ry="2"/><rect x="815.25" y="618.18" width="4.9" height="7.4" rx="2" ry="2"/><rect x="815.25" y="628.00" width="4.9" height="12.5" rx="2" ry="2"/><rect x="815.25" y="643.01" width="4.9" height="7.4" rx="2" ry="2"/><rect x="815.25" y="653.19" width="4.9" height="7.4" rx="2" ry="2"/><rect x="815.25" y="664.07" width="4.9" height="7.4" rx="2" ry="2"/><rect x="823.15" y="597.13" width="6.7" height="7.4" rx="2" ry="2"/><rect x="823.15" y="607.36" width="6.7" height="7.4" rx="2" ry="2"/><rect x="823.15" y="618.18" width="6.7" height="7.4" rx="2" ry="2"/><rect x="823.15" y="628.00" width="6.7" height="12.5" rx="2" ry="2"/><rect x="823.15" y="643.01" width="6.7" height="7.4" rx="2" ry="2"/><rect x="823.15" y="653.19" width="6.7" height="7.4" rx="2" ry="2"/><rect x="823.15" y="664.07" width="6.7" height="7.4" rx="2" ry="2"/><rect x="832.85" y="597.13" width="4.9" height="7.4" rx="2" ry="2"/><rect x="832.85" y="607.36" width="4.9" height="7.4" rx="2" ry="2"/><rect x="832.85" y="618.18" width="4.9" height="7.4" rx="2" ry="2"/><rect x="832.85" y="628.00" width="4.9" height="12.5" rx="2" ry="2"/><rect x="832.85" y="643.01" width="4.9" height="7.4" rx="2" ry="2"/><rect x="832.85" y="653.19" width="4.9" height="7.4" rx="2" ry="2"/><rect x="832.85" y="664.07" width="4.9" height="7.4" rx="2" ry="2"/><rect x="841.65" y="597.13" width="4.9" height="7.4" rx="2" ry="2"/><rect x="841.65" y="607.36" width="4.9" height="7.4" rx="2" ry="2"/><rect x="841.65" y="618.18" width="4.9" height="7.4" rx="2" ry="2"/><rect x="841.65" y="628.00" width="4.9" height="12.5" rx="2" ry="2"/><rect x="841.65" y="643.01" width="4.9" height="7.4" rx="2" ry="2"/><rect x="841.65" y="653.19" width="4.9" height="7.4" rx="2" ry="2"/><rect x="841.65" y="664.07" width="4.9" height="7.4" rx="2" ry="2"/><rect x="850.45" y="597.13" width="4.9" height="7.4" rx="2" ry="2"/><rect x="850.45" y="607.36" width="4.9" height="7.4" rx="2" ry="2"/><rect x="850.45" y="618.18" width="4.9" height="7.4" rx="2" ry="2"/><rect x="850.45" y="628.00" width="4.9" height="12.5" rx="2" ry="2"/><rect x="850.45" y="643.01" width="4.9" height="7.4" rx="2" ry="2"/><rect x="850.45" y="653.19" width="4.9" height="7.4" rx="2" ry="2"/><rect x="850.45" y="664.07" width="4.9" height="7.4" rx="2" ry="2"/><rect x="859.25" y="597.13" width="4.9" height="7.4" rx="2" ry="2"/><rect x="859.25" y="607.36" width="4.9" height="7.4" rx="2" ry="2"/><rect x="859.25" y="618.18" width="4.9" height="7.4" rx="2" ry="2"/><rect x="859.25" y="628.00" width="4.9" height="12.5" rx="2" ry="2"/><rect x="859.25" y="643.01" width="4.9" height="7.4" rx="2" ry="2"/><rect x="859.25" y="653.19" width="4.9" height="7.4" rx="2" ry="2"/><rect x="859.25" y="664.07" width="4.9" height="7.4" rx="2" ry="2"/><rect x="868.05" y="597.13" width="4.9" height="7.4" rx="2" ry="2"/><rect x="868.05" y="607.36" width="4.9" height="7.4" rx="2" ry="2"/><rect x="868.05" y="618.18" width="4.9" height="7.4" rx="2" ry="2"/><rect x="868.05" y="628.00" width="4.9" height="12.5" rx="2" ry="2"/><rect x="868.05" y="643.01" width="4.9" height="7.4" rx="2" ry="2"/><rect x="868.05" y="653.19" width="4.9" height="7.4" rx="2" ry="2"/><rect x="868.05" y="664.07" width="4.9" height="7.4" rx="2" ry="2"/><rect x="876.85" y="597.13" width="4.9" height="7.4" rx="2" ry="2"/><rect x="876.85" y="607.36" width="4.9" height="7.4" rx="2" ry="2"/><rect x="876.85" y="618.18" width="4.9" height="7.4" rx="2" ry="2"/><rect x="876.85" y="628.00" width="4.9" height="12.5" rx="2" ry="2"/><rect x="876.85" y="643.01" width="4.9" height="7.4" rx="2" ry="2"/><rect x="876.85" y="653.19" width="4.9" height="7.4" rx="2" ry="2"/><rect x="876.85" y="664.07" width="4.9" height="7.4" rx="2" ry="2"/><rect x="885.65" y="597.13" width="4.9" height="7.4" rx="2" ry="2"/><rect x="885.65" y="607.36" width="4.9" height="7.4" rx="2" ry="2"/><rect x="885.65" y="618.18" width="4.9" height="7.4" rx="2" ry="2"/><rect x="885.65" y="628.00" width="4.9" height="12.5" rx="2" ry="2"/><rect x="885.65" y="643.01" width="4.9" height="7.4" rx="2" ry="2"/><rect x="885.65" y="653.19" width="4.9" height="7.4" rx="2" ry="2"/><rect x="885.65" y="664.07" width="4.9" height="7.4" rx="2" ry="2"/><rect x="894.45" y="597.13" width="4.9" height="7.4" rx="2" ry="2"/><rect x="894.45" y="607.36" width="4.9" height="7.4" rx="2" ry="2"/><rect x="894.45" y="618.18" width="4.9" height="7.4" rx="2" ry="2"/><rect x="894.45" y="628.00" width="4.9" height="12.5" rx="2" ry="2"/><rect x="894.45" y="643.01" width="4.9" height="7.4" rx="2" ry="2"/><rect x="894.45" y="653.19" width="4.9" height="7.4" rx="2" ry="2"/><rect x="894.45" y="664.07" width="4.9" height="7.4" rx="2" ry="2"/></g><path d="M756.1 590.5V597.1M756.1 604.5V607.4M756.1 614.8V618.2M756.1 625.6V628.0M756.1 640.5V643.0M756.1 650.4V653.2M756.1 660.6V664.1M756.1 671.5V677.9M826.5 590.5V597.1M826.5 604.5V607.4M826.5 614.8V618.2M826.5 625.6V628.0M826.5 640.5V643.0M826.5 650.4V653.2M826.5 660.6V664.1M826.5 671.5V677.9" stroke="#8e8e8e" stroke-width="1.5"/><rect x="685" y="591.3" width="212.60000000000002" height="85.79999999999998" fill="none" stroke="#8e8e8e" stroke-width="1.7"/><path d="M714.5 674.6h13M714.5 672.4v3.5" stroke="#8e8e8e" stroke-width="1.6"/><path d="M785.3 674.6h13M785.3 672.4v3.5" stroke="#8e8e8e" stroke-width="1.6"/><path d="M856.0 674.6h13M856.0 672.4v3.5" stroke="#8e8e8e" stroke-width="1.6"/><clipPath id="c902_590"><rect x="902" y="590.5" width="230.4000000000001" height="87.39999999999998"/></clipPath><g clip-path="url(#c902_590)" fill="none" stroke="#8e8e8e" stroke-width="1.1" shape-rendering="crispEdges"><rect x="900.25" y="597.13" width="4.9" height="7.4" rx="2" ry="2"/><rect x="900.25" y="607.36" width="4.9" height="7.4" rx="2" ry="2"/><rect x="900.25" y="618.18" width="4.9" height="7.4" rx="2" ry="2"/><rect x="900.25" y="628.00" width="4.9" height="12.5" rx="2" ry="2"/><rect x="900.25" y="643.01" width="4.9" height="7.4" rx="2" ry="2"/><rect x="900.25" y="653.19" width="4.9" height="7.4" rx="2" ry="2"/><rect x="900.25" y="664.07" width="4.9" height="7.4" rx="2" ry="2"/><rect x="909.05" y="597.13" width="4.9" height="7.4" rx="2" ry="2"/><rect x="909.05" y="607.36" width="4.9" height="7.4" rx="2" ry="2"/><rect x="909.05" y="618.18" width="4.9" height="7.4" rx="2" ry="2"/><rect x="909.05" y="628.00" width="4.9" height="12.5" rx="2" ry="2"/><rect x="909.05" y="643.01" width="4.9" height="7.4" rx="2" ry="2"/><rect x="909.05" y="653.19" width="4.9" height="7.4" rx="2" ry="2"/><rect x="909.05" y="664.07" width="4.9" height="7.4" rx="2" ry="2"/><rect x="917.85" y="597.13" width="4.9" height="7.4" rx="2" ry="2"/><rect x="917.85" y="607.36" width="4.9" height="7.4" rx="2" ry="2"/><rect x="917.85" y="618.18" width="4.9" height="7.4" rx="2" ry="2"/><rect x="917.85" y="628.00" width="4.9" height="12.5" rx="2" ry="2"/><rect x="917.85" y="643.01" width="4.9" height="7.4" rx="2" ry="2"/><rect x="917.85" y="653.19" width="4.9" height="7.4" rx="2" ry="2"/><rect x="917.85" y="664.07" width="4.9" height="7.4" rx="2" ry="2"/><rect x="926.65" y="597.13" width="4.9" height="7.4" rx="2" ry="2"/><rect x="926.65" y="607.36" width="4.9" height="7.4" rx="2" ry="2"/><rect x="926.65" y="618.18" width="4.9" height="7.4" rx="2" ry="2"/><rect x="926.65" y="628.00" width="4.9" height="12.5" rx="2" ry="2"/><rect x="926.65" y="643.01" width="4.9" height="7.4" rx="2" ry="2"/><rect x="926.65" y="653.19" width="4.9" height="7.4" rx="2" ry="2"/><rect x="926.65" y="664.07" width="4.9" height="7.4" rx="2" ry="2"/><rect x="935.45" y="597.13" width="4.9" height="7.4" rx="2" ry="2"/><rect x="935.45" y="607.36" width="4.9" height="7.4" rx="2" ry="2"/><rect x="935.45" y="618.18" width="4.9" height="7.4" rx="2" ry="2"/><rect x="935.45" y="628.00" width="4.9" height="12.5" rx="2" ry="2"/><rect x="935.45" y="643.01" width="4.9" height="7.4" rx="2" ry="2"/><rect x="935.45" y="653.19" width="4.9" height="7.4" rx="2" ry="2"/><rect x="935.45" y="664.07" width="4.9" height="7.4" rx="2" ry="2"/><rect x="944.25" y="597.13" width="4.9" height="7.4" rx="2" ry="2"/><rect x="944.25" y="607.36" width="4.9" height="7.4" rx="2" ry="2"/><rect x="944.25" y="618.18" width="4.9" height="7.4" rx="2" ry="2"/><rect x="944.25" y="628.00" width="4.9" height="12.5" rx="2" ry="2"/><rect x="944.25" y="643.01" width="4.9" height="7.4" rx="2" ry="2"/><rect x="944.25" y="653.19" width="4.9" height="7.4" rx="2" ry="2"/><rect x="944.25" y="664.07" width="4.9" height="7.4" rx="2" ry="2"/><rect x="953.05" y="597.13" width="4.9" height="7.4" rx="2" ry="2"/><rect x="953.05" y="607.36" width="4.9" height="7.4" rx="2" ry="2"/><rect x="953.05" y="618.18" width="4.9" height="7.4" rx="2" ry="2"/><rect x="953.05" y="628.00" width="4.9" height="12.5" rx="2" ry="2"/><rect x="953.05" y="643.01" width="4.9" height="7.4" rx="2" ry="2"/><rect x="953.05" y="653.19" width="4.9" height="7.4" rx="2" ry="2"/><rect x="953.05" y="664.07" width="4.9" height="7.4" rx="2" ry="2"/><rect x="961.85" y="597.13" width="4.9" height="7.4" rx="2" ry="2"/><rect x="961.85" y="607.36" width="4.9" height="7.4" rx="2" ry="2"/><rect x="961.85" y="618.18" width="4.9" height="7.4" rx="2" ry="2"/><rect x="961.85" y="628.00" width="4.9" height="12.5" rx="2" ry="2"/><rect x="961.85" y="643.01" width="4.9" height="7.4" rx="2" ry="2"/><rect x="961.85" y="653.19" width="4.9" height="7.4" rx="2" ry="2"/><rect x="961.85" y="664.07" width="4.9" height="7.4" rx="2" ry="2"/><rect x="969.75" y="597.13" width="6.7" height="7.4" rx="2" ry="2"/><rect x="969.75" y="607.36" width="6.7" height="7.4" rx="2" ry="2"/><rect x="969.75" y="618.18" width="6.7" height="7.4" rx="2" ry="2"/><rect x="969.75" y="628.00" width="6.7" height="12.5" rx="2" ry="2"/><rect x="969.75" y="643.01" width="6.7" height="7.4" rx="2" ry="2"/><rect x="969.75" y="653.19" width="6.7" height="7.4" rx="2" ry="2"/><rect x="969.75" y="664.07" width="6.7" height="7.4" rx="2" ry="2"/><rect x="979.45" y="597.13" width="4.9" height="7.4" rx="2" ry="2"/><rect x="979.45" y="607.36" width="4.9" height="7.4" rx="2" ry="2"/><rect x="979.45" y="618.18" width="4.9" height="7.4" rx="2" ry="2"/><rect x="979.45" y="628.00" width="4.9" height="12.5" rx="2" ry="2"/><rect x="979.45" y="643.01" width="4.9" height="7.4" rx="2" ry="2"/><rect x="979.45" y="653.19" width="4.9" height="7.4" rx="2" ry="2"/><rect x="979.45" y="664.07" width="4.9" height="7.4" rx="2" ry="2"/><rect x="988.25" y="597.13" width="4.9" height="7.4" rx="2" ry="2"/><rect x="988.25" y="607.36" width="4.9" height="7.4" rx="2" ry="2"/><rect x="988.25" y="618.18" width="4.9" height="7.4" rx="2" ry="2"/><rect x="988.25" y="628.00" width="4.9" height="12.5" rx="2" ry="2"/><rect x="988.25" y="643.01" width="4.9" height="7.4" rx="2" ry="2"/><rect x="988.25" y="653.19" width="4.9" height="7.4" rx="2" ry="2"/><rect x="988.25" y="664.07" width="4.9" height="7.4" rx="2" ry="2"/><rect x="997.05" y="597.13" width="4.9" height="7.4" rx="2" ry="2"/><rect x="997.05" y="607.36" width="4.9" height="7.4" rx="2" ry="2"/><rect x="997.05" y="618.18" width="4.9" height="7.4" rx="2" ry="2"/><rect x="997.05" y="628.00" width="4.9" height="12.5" rx="2" ry="2"/><rect x="997.05" y="643.01" width="4.9" height="7.4" rx="2" ry="2"/><rect x="997.05" y="653.19" width="4.9" height="7.4" rx="2" ry="2"/><rect x="997.05" y="664.07" width="4.9" height="7.4" rx="2" ry="2"/><rect x="1005.85" y="597.13" width="4.9" height="7.4" rx="2" ry="2"/><rect x="1005.85" y="607.36" width="4.9" height="7.4" rx="2" ry="2"/><rect x="1005.85" y="618.18" width="4.9" height="7.4" rx="2" ry="2"/><rect x="1005.85" y="628.00" width="4.9" height="12.5" rx="2" ry="2"/><rect x="1005.85" y="643.01" width="4.9" height="7.4" rx="2" ry="2"/><rect x="1005.85" y="653.19" width="4.9" height="7.4" rx="2" ry="2"/><rect x="1005.85" y="664.07" width="4.9" height="7.4" rx="2" ry="2"/><rect x="1014.65" y="597.13" width="4.9" height="7.4" rx="2" ry="2"/><rect x="1014.65" y="607.36" width="4.9" height="7.4" rx="2" ry="2"/><rect x="1014.65" y="618.18" width="4.9" height="7.4" rx="2" ry="2"/><rect x="1014.65" y="628.00" width="4.9" height="12.5" rx="2" ry="2"/><rect x="1014.65" y="643.01" width="4.9" height="7.4" rx="2" ry="2"/><rect x="1014.65" y="653.19" width="4.9" height="7.4" rx="2" ry="2"/><rect x="1014.65" y="664.07" width="4.9" height="7.4" rx="2" ry="2"/><rect x="1022.55" y="597.13" width="6.7" height="7.4" rx="2" ry="2"/><rect x="1022.55" y="607.36" width="6.7" height="7.4" rx="2" ry="2"/><rect x="1022.55" y="618.18" width="6.7" height="7.4" rx="2" ry="2"/><rect x="1022.55" y="628.00" width="6.7" height="12.5" rx="2" ry="2"/><rect x="1022.55" y="643.01" width="6.7" height="7.4" rx="2" ry="2"/><rect x="1022.55" y="653.19" width="6.7" height="7.4" rx="2" ry="2"/><rect x="1022.55" y="664.07" width="6.7" height="7.4" rx="2" ry="2"/><rect x="1032.25" y="597.13" width="4.9" height="7.4" rx="2" ry="2"/><rect x="1032.25" y="607.36" width="4.9" height="7.4" rx="2" ry="2"/><rect x="1032.25" y="618.18" width="4.9" height="7.4" rx="2" ry="2"/><rect x="1032.25" y="628.00" width="4.9" height="12.5" rx="2" ry="2"/><rect x="1032.25" y="643.01" width="4.9" height="7.4" rx="2" ry="2"/><rect x="1032.25" y="653.19" width="4.9" height="7.4" rx="2" ry="2"/><rect x="1032.25" y="664.07" width="4.9" height="7.4" rx="2" ry="2"/><rect x="1041.05" y="597.13" width="4.9" height="7.4" rx="2" ry="2"/><rect x="1041.05" y="607.36" width="4.9" height="7.4" rx="2" ry="2"/><rect x="1041.05" y="618.18" width="4.9" height="7.4" rx="2" ry="2"/><rect x="1041.05" y="628.00" width="4.9" height="12.5" rx="2" ry="2"/><rect x="1041.05" y="643.01" width="4.9" height="7.4" rx="2" ry="2"/><rect x="1041.05" y="653.19" width="4.9" height="7.4" rx="2" ry="2"/><rect x="1041.05" y="664.07" width="4.9" height="7.4" rx="2" ry="2"/><rect x="1049.85" y="597.13" width="4.9" height="7.4" rx="2" ry="2"/><rect x="1049.85" y="607.36" width="4.9" height="7.4" rx="2" ry="2"/><rect x="1049.85" y="618.18" width="4.9" height="7.4" rx="2" ry="2"/><rect x="1049.85" y="628.00" width="4.9" height="12.5" rx="2" ry="2"/><rect x="1049.85" y="643.01" width="4.9" height="7.4" rx="2" ry="2"/><rect x="1049.85" y="653.19" width="4.9" height="7.4" rx="2" ry="2"/><rect x="1049.85" y="664.07" width="4.9" height="7.4" rx="2" ry="2"/><rect x="1058.65" y="597.13" width="4.9" height="7.4" rx="2" ry="2"/><rect x="1058.65" y="607.36" width="4.9" height="7.4" rx="2" ry="2"/><rect x="1058.65" y="618.18" width="4.9" height="7.4" rx="2" ry="2"/><rect x="1058.65" y="628.00" width="4.9" height="12.5" rx="2" ry="2"/><rect x="1058.65" y="643.01" width="4.9" height="7.4" rx="2" ry="2"/><rect x="1058.65" y="653.19" width="4.9" height="7.4" rx="2" ry="2"/><rect x="1058.65" y="664.07" width="4.9" height="7.4" rx="2" ry="2"/><rect x="1067.45" y="597.13" width="4.9" height="7.4" rx="2" ry="2"/><rect x="1067.45" y="607.36" width="4.9" height="7.4" rx="2" ry="2"/><rect x="1067.45" y="618.18" width="4.9" height="7.4" rx="2" ry="2"/><rect x="1067.45" y="628.00" width="4.9" height="12.5" rx="2" ry="2"/><rect x="1067.45" y="643.01" width="4.9" height="7.4" rx="2" ry="2"/><rect x="1067.45" y="653.19" width="4.9" height="7.4" rx="2" ry="2"/><rect x="1067.45" y="664.07" width="4.9" height="7.4" rx="2" ry="2"/><rect x="1075.35" y="597.13" width="6.7" height="7.4" rx="2" ry="2"/><rect x="1075.35" y="607.36" width="6.7" height="7.4" rx="2" ry="2"/><rect x="1075.35" y="618.18" width="6.7" height="7.4" rx="2" ry="2"/><rect x="1075.35" y="628.00" width="6.7" height="12.5" rx="2" ry="2"/><rect x="1075.35" y="643.01" width="6.7" height="7.4" rx="2" ry="2"/><rect x="1075.35" y="653.19" width="6.7" height="7.4" rx="2" ry="2"/><rect x="1075.35" y="664.07" width="6.7" height="7.4" rx="2" ry="2"/><rect x="1085.05" y="597.13" width="4.9" height="7.4" rx="2" ry="2"/><rect x="1085.05" y="607.36" width="4.9" height="7.4" rx="2" ry="2"/><rect x="1085.05" y="618.18" width="4.9" height="7.4" rx="2" ry="2"/><rect x="1085.05" y="628.00" width="4.9" height="12.5" rx="2" ry="2"/><rect x="1085.05" y="643.01" width="4.9" height="7.4" rx="2" ry="2"/><rect x="1085.05" y="653.19" width="4.9" height="7.4" rx="2" ry="2"/><rect x="1085.05" y="664.07" width="4.9" height="7.4" rx="2" ry="2"/><rect x="1093.85" y="597.13" width="4.9" height="7.4" rx="2" ry="2"/><rect x="1093.85" y="607.36" width="4.9" height="7.4" rx="2" ry="2"/><rect x="1093.85" y="618.18" width="4.9" height="7.4" rx="2" ry="2"/><rect x="1093.85" y="628.00" width="4.9" height="12.5" rx="2" ry="2"/><rect x="1093.85" y="643.01" width="4.9" height="7.4" rx="2" ry="2"/><rect x="1093.85" y="653.19" width="4.9" height="7.4" rx="2" ry="2"/><rect x="1093.85" y="664.07" width="4.9" height="7.4" rx="2" ry="2"/><rect x="1102.65" y="597.13" width="4.9" height="7.4" rx="2" ry="2"/><rect x="1102.65" y="607.36" width="4.9" height="7.4" rx="2" ry="2"/><rect x="1102.65" y="618.18" width="4.9" height="7.4" rx="2" ry="2"/><rect x="1102.65" y="628.00" width="4.9" height="12.5" rx="2" ry="2"/><rect x="1102.65" y="643.01" width="4.9" height="7.4" rx="2" ry="2"/><rect x="1102.65" y="653.19" width="4.9" height="7.4" rx="2" ry="2"/><rect x="1102.65" y="664.07" width="4.9" height="7.4" rx="2" ry="2"/><rect x="1111.45" y="597.13" width="4.9" height="7.4" rx="2" ry="2"/><rect x="1111.45" y="607.36" width="4.9" height="7.4" rx="2" ry="2"/><rect x="1111.45" y="618.18" width="4.9" height="7.4" rx="2" ry="2"/><rect x="1111.45" y="628.00" width="4.9" height="12.5" rx="2" ry="2"/><rect x="1111.45" y="643.01" width="4.9" height="7.4" rx="2" ry="2"/><rect x="1111.45" y="653.19" width="4.9" height="7.4" rx="2" ry="2"/><rect x="1111.45" y="664.07" width="4.9" height="7.4" rx="2" ry="2"/><rect x="1120.25" y="597.13" width="4.9" height="7.4" rx="2" ry="2"/><rect x="1120.25" y="607.36" width="4.9" height="7.4" rx="2" ry="2"/><rect x="1120.25" y="618.18" width="4.9" height="7.4" rx="2" ry="2"/><rect x="1120.25" y="628.00" width="4.9" height="12.5" rx="2" ry="2"/><rect x="1120.25" y="643.01" width="4.9" height="7.4" rx="2" ry="2"/><rect x="1120.25" y="653.19" width="4.9" height="7.4" rx="2" ry="2"/><rect x="1120.25" y="664.07" width="4.9" height="7.4" rx="2" ry="2"/><rect x="1129.05" y="597.13" width="4.9" height="7.4" rx="2" ry="2"/><rect x="1129.05" y="607.36" width="4.9" height="7.4" rx="2" ry="2"/><rect x="1129.05" y="618.18" width="4.9" height="7.4" rx="2" ry="2"/><rect x="1129.05" y="628.00" width="4.9" height="12.5" rx="2" ry="2"/><rect x="1129.05" y="643.01" width="4.9" height="7.4" rx="2" ry="2"/><rect x="1129.05" y="653.19" width="4.9" height="7.4" rx="2" ry="2"/><rect x="1129.05" y="664.07" width="4.9" height="7.4" rx="2" ry="2"/></g><path d="M972.6 590.5V597.1M972.6 604.5V607.4M972.6 614.8V618.2M972.6 625.6V628.0M972.6 640.5V643.0M972.6 650.4V653.2M972.6 660.6V664.1M972.6 671.5V677.9M1025.6 590.5V597.1M1025.6 604.5V607.4M1025.6 614.8V618.2M1025.6 625.6V628.0M1025.6 640.5V643.0M1025.6 650.4V653.2M1025.6 660.6V664.1M1025.6 671.5V677.9M1078.7 590.5V597.1M1078.7 604.5V607.4M1078.7 614.8V618.2M1078.7 625.6V628.0M1078.7 640.5V643.0M1078.7 650.4V653.2M1078.7 660.6V664.1M1078.7 671.5V677.9" stroke="#8e8e8e" stroke-width="1.5"/><rect x="902" y="591.3" width="230.4000000000001" height="85.79999999999998" fill="none" stroke="#8e8e8e" stroke-width="1.7"/><path d="M931.3 674.6h13M931.3 672.4v3.5" stroke="#8e8e8e" stroke-width="1.6"/><path d="M993.1 674.6h13M993.1 672.4v3.5" stroke="#8e8e8e" stroke-width="1.6"/><path d="M1046.2 674.6h13M1046.2 672.4v3.5" stroke="#8e8e8e" stroke-width="1.6"/><path d="M1099.6 674.6h13M1099.6 672.4v3.5" stroke="#8e8e8e" stroke-width="1.6"/><g shape-rendering="crispEdges"><rect x="680" y="590" width="5" height="88" fill="#f2f2f2"/><rect x="682" y="595" width="1" height="78" fill="#1c2128"/><rect x="681" y="591" width="3" height="4" fill="#15181d"/><rect x="681" y="673" width="3" height="4" fill="#15181d"/></g><g shape-rendering="crispEdges"><rect x="897" y="590" width="5" height="88" fill="#f2f2f2"/><rect x="899" y="595" width="1" height="78" fill="#1c2128"/><rect x="898" y="591" width="3" height="4" fill="#15181d"/><rect x="898" y="673" width="3" height="4" fill="#15181d"/></g><g shape-rendering="crispEdges"><rect x="1131" y="590" width="5" height="88" fill="#f2f2f2"/><rect x="1133" y="595" width="1" height="78" fill="#1c2128"/><rect x="1132" y="591" width="3" height="4" fill="#15181d"/><rect x="1132" y="673" width="3" height="4" fill="#15181d"/></g><path d="M681 590.3H643.9V678.2H681 M680.3 590.3V690.8H1135.3V678" fill="none" stroke="#f2f2f2" stroke-width="1" shape-rendering="crispEdges"/><path d="M610 178.5H707M658.5 175V227M653.5 175V183.5H663.5V175" fill="none" stroke="#d4d6d8" stroke-width="1.2"/><path d="M19.3 806.7V747 M16.5 757 L19.3 746.5 L22 757 M25.7 812.3H85 M75 809.5 L85.5 812.3 L75 815" fill="none" stroke="#f0f0f0" stroke-width="1.1"/><rect x="14" y="806.7" width="11.7" height="10.6" fill="none" stroke="#f0f0f0" stroke-width="1.2"/><path d="M15.5 724.5 L19.8 730 L24 724.5 M19.8 730V736 M97 806.5 L107 818 M107 806.5 L97 818" fill="none" stroke="#f0f0f0" stroke-width="1.1"/><rect x="1631" y="190" width="10.5" height="2.8" fill="#fff"/><path d="M1653 186V183.8H1661V191.8H1659" fill="none" stroke="#fff" stroke-width="1.3"/><rect x="1651.3" y="187.3" width="7" height="6.6" fill="none" stroke="#fff" stroke-width="2.6"/><path d="M1671.5 185.5 L1679.5 193.5 M1679.5 185.5 L1671.5 193.5" stroke="#fff" stroke-width="2.6"/><text transform="translate(168.8 378.2) rotate(-90)" x="0" y="0" text-anchor="middle" font-family="Liberation Sans" font-size="10.5" fill="#e8e8e8" textLength="17.3" lengthAdjust="spacingAndGlyphs">500</text><text transform="translate(210.2 502.5) rotate(-90)" x="0" y="0" text-anchor="middle" font-family="Liberation Sans" font-size="10.5" fill="#e8e8e8" textLength="17" lengthAdjust="spacingAndGlyphs">910</text><text transform="translate(210.2 626) rotate(-90)" x="0" y="0" text-anchor="middle" font-family="Liberation Sans" font-size="10.5" fill="#e8e8e8" textLength="18" lengthAdjust="spacingAndGlyphs">500</text><text transform="translate(832 385.5) rotate(-90)" x="0" y="0" text-anchor="middle" font-family="Liberation Sans" font-size="10.5" fill="#e8e8e8" textLength="17" lengthAdjust="spacingAndGlyphs">500</text><text transform="translate(813.5 508.5) rotate(-90)" x="0" y="0" text-anchor="middle" font-family="Liberation Sans" font-size="10.5" fill="#e8e8e8" textLength="17" lengthAdjust="spacingAndGlyphs">910</text><text transform="translate(643.5 633.5) rotate(-90)" x="0" y="0" text-anchor="middle" font-family="Liberation Sans" font-size="10.5" fill="#e8e8e8" textLength="17" lengthAdjust="spacingAndGlyphs">500</text></svg><svg style="left:0;top:832px" width="300" height="25"><path d="M14 5h14M14 9.5h14M14 14h14" stroke="#e8e8e8" stroke-width="1.8"/><path d="M44 20 l9 -19.5 h64.5 l-9 19.5z" fill="#50698a"/><path d="M181 16 l5.5 -12 M252 16 l5.5 -12 M280 16 l5.5 -12" stroke="#6a707a" stroke-width="1"/><path d="M263.5 10.5 h10.5 M268.8 5.3 v10.5" stroke="#e8e8e8" stroke-width="1.8"/></svg><svg style="left:8px;top:859px" width="9" height="9"><path d="M1.5 1.5l5.5 5.5M7 1.5l-5.5 5.5" stroke="#7f8894" stroke-width="1.3"/></svg><div class="a" style="left:112px;top:986px;width:1px;height:15px;background:#d0d0d0;"></div><div class="a" style="left:8px;top:1030px;width:250px;height:1px;background:#3a4048;"></div><svg style="left:250px;top:1005px" width="360" height="27"><rect x="37.5" y="4.5" width="20" height="20" fill="#42607f" stroke="#5d93c9" stroke-width="1"/><rect x="85.5" y="4.5" width="20" height="20" fill="#42607f" stroke="#5d93c9" stroke-width="1"/><rect x="109.5" y="4.5" width="20" height="20" fill="#42607f" stroke="#5d93c9" stroke-width="1"/><rect x="133.5" y="4.5" width="20" height="20" fill="#42607f" stroke="#5d93c9" stroke-width="1"/><rect x="181.5" y="4.5" width="20" height="20" fill="#42607f" stroke="#5d93c9" stroke-width="1"/><rect x="229.5" y="4.5" width="20" height="20" fill="#42607f" stroke="#5d93c9" stroke-width="1"/><rect x="325.5" y="4.5" width="20" height="20" fill="#42607f" stroke="#5d93c9" stroke-width="1"/><g fill="none" stroke="#ffffff" stroke-width="1.3"><path d="M16 7.5h14M16 12h14M16 16.5h14M16.5 7v11M21 7v11M25.5 7v11M30 7v11"/><rect x="40.5" y="8.5" width="13" height="12"/><path d="M45 8.5v12M49 8.5v12M40.5 12.5h13M40.5 16.5h13" stroke="#5aaaf0"/><path d="M64 7v13.5h14"/><circle cx="95" cy="15" r="6"/><path d="M95 15l5 -4M95 15h6"/><rect x="112.5" y="8.5" width="12" height="12"/><path d="M137 20h13M137 20l11 -10"/><path d="M162 7v13.5h14M162 20.5l8 -6"/><path d="M184 11h6M187 8v6"/><rect x="190.5" y="15.5" width="8" height="4" stroke="#5aaaf0"/><path d="M208 11h13M208 14.5h13M208 18h13" stroke-width="1.8"/><rect x="232.5" y="8.5" width="12" height="12"/><rect x="256.5" y="8.5" width="12" height="12"/><path d="M259 12h2M263 12h4M259 15h2M263 15h4M259 18h2M263 18h4" stroke-width="1"/><path d="M280 7v6M277 10h6"/><rect x="284.5" y="13.5" width="5" height="5"/><path d="M304 9h14M304 19h14" stroke-width="1.6"/><path d="M304 14h14" stroke-dasharray="2 1"/><rect x="328.5" y="9.5" width="10" height="9"/></g><rect x="16" y="18.5" width="14" height="2.5" fill="#5aaaf0"/><rect x="66" y="14" width="5" height="5" fill="#5aaaf0"/><rect x="114" y="9" width="4" height="4" fill="none" stroke="#e05050" stroke-width="1"/><rect x="141" y="13" width="3" height="3" fill="#5aaaf0"/><path d="M170 7l-3 5h3l-2 4" stroke="#f0c040" stroke-width="1.5" fill="none"/><rect x="234" y="10" width="9" height="9" fill="#6fb8f0"/><rect x="331" y="8" width="9" height="9" fill="none" stroke="#ddd" stroke-width="1"/><path d="M338 18l3 3" stroke="#e0b040" stroke-width="1.5"/></svg><svg style="left:1605px;top:1005px" width="314" height="27">
<rect x="5.5" y="7.5" width="14" height="12" fill="none" stroke="#5aaaf0" stroke-width="1.2"/>
<text x="8" y="17" font-family="Liberation Mono" font-size="9" fill="#5aaaf0">00</text>
<path d="M83 9h9l-4.5 5z M143 9h9l-4.5 5z" fill="#fff"/>
<path d="M109 4 l-7.5 17 l7.5 -5 l7.5 5z" fill="#7fc0f0"/>
<path d="M169 4 l-7.5 17 l7.5 -5 l7.5 5z" fill="#7fc0f0"/><circle cx="176" cy="19" r="3" fill="#f0b830"/>
<path d="M191 4 l-7.5 17 l7.5 -5 l7.5 5z" fill="#7fc0f0"/><path d="M188 5l-3 4h3l-2 3" stroke="#c8d0d8" fill="none"/>
<rect x="205.5" y="11.5" width="6" height="7" fill="none" stroke="#fff" stroke-width="1.2"/><circle cx="215" cy="10" r="4" fill="none" stroke="#fff" stroke-width="1.2"/><path d="M215 15l3 3l-3 3l-3 -3z" fill="none" stroke="#fff"/>
<g transform="translate(235 13.5)"><circle r="4" fill="none" stroke="#5aaaf0" stroke-width="2.6"/><g stroke="#5aaaf0" stroke-width="2"><path d="M0 -7V7M-7 0H7M-5 -5L5 5M-5 5L5 -5"/></g><circle r="1.8" fill="#2e333c"/></g>
<rect x="251.5" y="8.5" width="14" height="11" fill="none" stroke="#5aaaf0" stroke-width="1.2"/><path d="M253 5v3M256 5v3M259 5v3M262 5v3M253 20v3M256 20v3M259 20v3M262 20v3" stroke="#5aaaf0"/><path d="M260 10l-3 4h3l-2 4" stroke="#f0c040" stroke-width="1.4" fill="none"/>
<path d="M273 7h4M273 7v4M286 7h-4M286 7v4M273 20h4M273 20v-4M286 20h-4M286 20v-4M273 7l5 5M286 7l-5 5M273 20l5 -5M286 20l-5 -5" stroke="#fff" stroke-width="1.2" fill="none"/>
<path d="M294 8h15M294 13.5h15M294 19h15" stroke="#5aaaf0" stroke-width="2"/>
</svg><div class="a" style="left:1697px;top:179px;width:221px;height:21px;background:#4e5865;"></div><svg style="left:1878px;top:184px" width="40" height="14"><rect x="3" y="3" width="2" height="8" fill="#c9d0d8"/><path d="M5 7L8 3.7V10.3z M9 3.7L12.8 7L9 10.3z" fill="#fff"/><path d="M21.5 2.5l9 9M30.5 2.5l-9 9" stroke="#e8e8e8" stroke-width="1.3"/></svg><div class="a" style="left:1703px;top:206px;width:134px;height:23px;background:#434b58;border:1px solid #545d6a;"></div><svg style="left:1820px;top:206px" width="99" height="24"><path d="M3.5 9h10l-5 5z" fill="#fff"/>
<rect x="22.5" y="4.5" width="9" height="9" fill="none" stroke="#fff" stroke-width="1.1"/><rect x="25.5" y="7.5" width="9" height="9" fill="#424a56" stroke="#fff" stroke-width="1.1"/><path d="M27.5 12h5M30 9.5v5" stroke="#f0c040" stroke-width="1.2"/>
<rect x="53" y="4" width="9" height="9" fill="#5ab0f0"/><path d="M54 15 a4 4 0 1 1 -1 -6" fill="none" stroke="#e0e0e0" stroke-width="1.2"/><path d="M58 11 l0 9 l2 -2 l2 3 l1.5 -1 l-2 -3 l3 0z" fill="#fff" stroke="#333" stroke-width="0.5"/>
<path d="M72 4 l0 10 l3 -2.5 l2 4 l2 -1 l-2 -4 l4 0z" fill="none" stroke="#fff" stroke-width="1.1"/><path d="M86 6 l-4 5 h3 l-2 5" stroke="#f0c040" stroke-width="1.8" fill="none"/>
</svg><div class="a" style="left:1703px;top:234.8px;width:197px;height:25px;background:#393d45;border:1px solid #4d5561;"></div><svg style="left:1882px;top:242.8px" width="14" height="10"><path d="M0.5 1h12l-6 6.5z" fill="#e8ecf0"/></svg><div class="a" style="left:1719px;top:259.8px;width:181px;height:175px;background:#434b58;border:1px solid #535c68;"></div><div class="a" style="left:1802px;top:268.8px;width:9px;height:9px;background:#ffffff;border:1px solid #222;"></div><div class="a" style="left:1720px;top:284.8px;width:180px;height:1px;background:#535c68;"></div><div class="a" style="left:1720px;top:309.8px;width:180px;height:1px;background:#535c68;"></div><div class="a" style="left:1801px;top:322.8px;width:45px;height:1px;background:#e0e0e0;"></div><div class="a" style="left:1720px;top:334.8px;width:180px;height:1px;background:#535c68;"></div><div class="a" style="left:1720px;top:359.8px;width:180px;height:1px;background:#535c68;"></div><div class="a" style="left:1801px;top:372.8px;width:45px;height:1px;background:#e0e0e0;"></div><div class="a" style="left:1720px;top:384.8px;width:180px;height:1px;background:#535c68;"></div><div class="a" style="left:1720px;top:409.8px;width:180px;height:1px;background:#535c68;"></div><div class="a" style="left:1797px;top:259.8px;width:1px;height:175px;background:#535c68;"></div><div class="a" style="left:1703px;top:439.6px;width:197px;height:25px;background:#393d45;border:1px solid #4d5561;"></div><svg style="left:1882px;top:447.6px" width="14" height="10"><path d="M0.5 1h12l-6 6.5z" fill="#e8ecf0"/></svg><div class="a" style="left:1719px;top:464.6px;width:181px;height:125px;background:#434b58;border:1px solid #535c68;"></div><div class="a" style="left:1720px;top:489.6px;width:180px;height:1px;background:#535c68;"></div><div class="a" style="left:1720px;top:514.6px;width:180px;height:1px;background:#535c68;"></div><div class="a" style="left:1720px;top:539.6px;width:180px;height:1px;background:#535c68;"></div><div class="a" style="left:1720px;top:564.6px;width:180px;height:1px;background:#535c68;"></div><div class="a" style="left:1797px;top:464.6px;width:1px;height:125px;background:#535c68;"></div><div class="a" style="left:1703px;top:594.7px;width:197px;height:25px;background:#393d45;border:1px solid #4d5561;"></div><svg style="left:1882px;top:602.7px" width="14" height="10"><path d="M0.5 1h12l-6 6.5z" fill="#e8ecf0"/></svg><div class="a" style="left:1719px;top:619.7px;width:181px;height:150px;background:#434b58;border:1px solid #535c68;"></div><div class="a" style="left:1720px;top:644.7px;width:180px;height:1px;background:#535c68;"></div><div class="a" style="left:1720px;top:669.7px;width:180px;height:1px;background:#535c68;"></div><div class="a" style="left:1720px;top:694.7px;width:180px;height:1px;background:#535c68;"></div><div class="a" style="left:1720px;top:719.7px;width:180px;height:1px;background:#535c68;"></div><div class="a" style="left:1720px;top:744.7px;width:180px;height:1px;background:#535c68;"></div><div class="a" style="left:1797px;top:619.7px;width:1px;height:150px;background:#535c68;"></div>
<div class="t" style="left:317px;top:4.89px;font:normal 12.5px 'Liberation Sans';color:#e8e8e8;transform:scaleX(0.9412);">Interfejs wstążkowy</div><div class="t" style="left:501px;top:4.51px;font:normal 12.7px 'Liberation Sans';color:#f0f0f0;transform:scaleX(0.9121);">ZWCAD 2025 Wersja profesjonalna - [C:\WWW\sklepwsieci.pl\CENNIKI_KATALOGI\Alushelf\Alu_LG_8112021_v1.dwg]</div><div class="t" style="left:14.2px;top:29.69px;font:normal 12.5px 'Liberation Sans';color:#eaeaea;transform:scaleX(0.8990);">Rysuj</div><div class="t" style="left:62px;top:29.69px;font:normal 12.5px 'Liberation Sans';color:#eaeaea;transform:scaleX(0.9338);">Opis</div><div class="t" style="left:105.8px;top:29.69px;font:normal 12.5px 'Liberation Sans';color:#eaeaea;transform:scaleX(0.9387);">Wstaw</div><div class="t" style="left:218px;top:29.69px;font:normal 12.5px 'Liberation Sans';color:#eaeaea;transform:scaleX(0.9063);">Narzędzia</div><div class="t" style="left:288.75px;top:29.69px;font:normal 12.5px 'Liberation Sans';color:#eaeaea;transform:scaleX(0.9050);">Zarządzanie</div><div class="t" style="left:371px;top:29.69px;font:normal 12.5px 'Liberation Sans';color:#eaeaea;transform:scaleX(0.9203);">Eksport</div><div class="t" style="left:430px;top:29.69px;font:normal 12.5px 'Liberation Sans';color:#eaeaea;transform:scaleX(0.9686);">Online</div><div class="t" style="left:485px;top:29.69px;font:normal 12.5px 'Liberation Sans';color:#eaeaea;transform:scaleX(0.8891);">Geoserwis</div><div class="t" style="left:160.7px;top:29.69px;font:normal 12.5px 'Liberation Sans';color:#4ba7e6;transform:scaleX(0.9945);">Widoki</div><div class="t" style="left:11px;top:90.44px;font:normal 12px 'Liberation Sans';color:#ececec;transform:scaleX(0.9822);">Zregeneruj</div><div class="t" style="left:101px;top:56.04px;font:normal 12px 'Liberation Sans';color:#ececec;transform:scaleX(0.9271);">Zakres</div><div class="t" style="left:101px;top:79.94px;font:normal 12px 'Liberation Sans';color:#ececec;transform:scaleX(1.0099);">Orbita</div><div class="t" style="left:47px;top:127.74px;font:normal 12px 'Liberation Sans';color:#ececec;transform:scaleX(0.9628);">Obserwacja</div><div class="t" style="left:183.3px;top:57.34px;font:normal 12px 'Liberation Sans';color:#ffffff;transform:scaleX(0.9146);">Góra</div><div class="t" style="left:183.3px;top:78.84px;font:normal 12px 'Liberation Sans';color:#ececec;transform:scaleX(1.0052);">Dół</div><div class="t" style="left:183.3px;top:101.14px;font:normal 12px 'Liberation Sans';color:#ececec;transform:scaleX(0.9586);">Lewo</div><div class="t" style="left:360.4px;top:90.14px;font:normal 12px 'Liberation Sans';color:#ececec;transform:scaleX(0.9670);">Menadżer</div><div class="t" style="left:362.5px;top:104.94px;font:normal 12px 'Liberation Sans';color:#ececec;transform:scaleX(1.0235);">widoków</div><div class="t" style="left:268px;top:127.44px;font:normal 12px 'Liberation Sans';color:#ececec;transform:scaleX(1.0276);">Widoki</div><div class="t" style="left:484.4px;top:54.74px;font:normal 12px 'Liberation Sans';color:#ececec;transform:scaleX(0.9881);">Globalny</div><div class="t" style="left:455.2px;top:127.74px;font:normal 12px 'Liberation Sans';color:#ececec;transform:scaleX(0.9696);">Współrzędne</div><div class="t" style="left:586.3px;top:55.14px;font:normal 12px 'Liberation Sans';color:#ffffff;transform:scaleX(0.9834);">2D druty</div><div class="t" style="left:595.6px;top:82.24px;font:normal 12px 'Liberation Sans';color:#a3abb6;transform:scaleX(0.9645);">Jak element</div><div class="t" style="left:732px;top:82.14px;font:normal 12px 'Liberation Sans';color:#a3abb6;transform:scaleX(0.9997);">Nie</div><div class="t" style="left:652.4px;top:105.14px;font:normal 12px 'Liberation Sans';color:#a3abb6;transform:scaleX(0.9555);">Nieprzezroczystość</div><div class="t" style="left:831.9px;top:105.14px;font:normal 12px 'Liberation Sans';color:#c5ccd4;transform:scaleX(0.9215);">60</div><div class="t" style="left:664.2px;top:127.94px;font:normal 12px 'Liberation Sans';color:#ececec;transform:scaleX(0.9652);">Style wizualizacji</div><div class="t" style="left:879.7px;top:89.84px;font:normal 12px 'Liberation Sans';color:#9ba4b0;transform:scaleX(0.9864);">Prostokątny</div><div class="t" style="left:975.4px;top:56.14px;font:normal 12px 'Liberation Sans';color:#ececec;transform:scaleX(0.9495);">Nazwane</div><div class="t" style="left:975.4px;top:80.04px;font:normal 12px 'Liberation Sans';color:#9ba4b0;transform:scaleX(0.9787);">Przytnij</div><div class="t" style="left:975.4px;top:103.84px;font:normal 12px 'Liberation Sans';color:#ececec;transform:scaleX(0.9433);">Dołącz</div><div class="t" style="left:1054.2px;top:56.94px;font:normal 12px 'Liberation Sans';color:#ffffff;transform:scaleX(0.9671);">Pojedyncza</div><div class="t" style="left:1054.2px;top:79.04px;font:normal 12px 'Liberation Sans';color:#ececec;transform:scaleX(0.9365);">Dwie:</div><div class="t" style="left:1092px;top:79.04px;font:normal 12px 'Liberation Sans';color:#ececec;transform:scaleX(1.0210);">Pionowo</div><div class="t" style="left:1054.2px;top:101.14px;font:normal 12px 'Liberation Sans';color:#ececec;transform:scaleX(0.9365);">Dwie:</div><div class="t" style="left:1092px;top:101.14px;font:normal 12px 'Liberation Sans';color:#ececec;transform:scaleX(1.0067);">Poziomo</div><div class="t" style="left:1031.1px;top:127.94px;font:normal 12px 'Liberation Sans';color:#ececec;transform:scaleX(0.9610);">Rzutnie</div><div class="t" style="left:1243.5px;top:90.04px;font:normal 12px 'Liberation Sans';color:#ececec;transform:scaleX(0.9019);">Przełącz</div><div class="t" style="left:1251.7px;top:104.04px;font:normal 12px 'Liberation Sans';color:#ececec;transform:scaleX(0.9569);">okna</div><div class="t" style="left:1320.2px;top:56.04px;font:normal 12px 'Liberation Sans';color:#ececec;transform:scaleX(0.9687);">Sąsiadujące poziomo</div><div class="t" style="left:1320.2px;top:80.04px;font:normal 12px 'Liberation Sans';color:#ececec;transform:scaleX(0.9743);">Sąsiadujące pionowo</div><div class="t" style="left:1320.2px;top:103.44px;font:normal 12px 'Liberation Sans';color:#ececec;transform:scaleX(0.9607);">Kaskadowo</div><div class="t" style="left:1314.7px;top:127.54px;font:normal 12px 'Liberation Sans';color:#ececec;transform:scaleX(0.9797);">Okno</div><div class="t" style="left:67px;top:153.14px;font:normal 12px 'Liberation Sans';color:#e6e6e6;transform:scaleX(0.9183);">Rysunek1</div><div class="t" style="left:153px;top:153.14px;font:normal 12px 'Liberation Sans';color:#e6e6e6;transform:scaleX(0.9821);">barka z wym cad*</div><div class="t" style="left:281.7px;top:153.14px;font:normal 12px 'Liberation Sans';color:#e6e6e6;transform:scaleX(0.9611);">zakrzow_p_korbiel*</div><div class="t" style="left:417.7px;top:153.14px;font:bold 12px 'Liberation Sans';color:#ffffff;transform:scaleX(0.9626);">Alu_LG_8112021_v1*</div><div class="t" style="left:5px;top:181.04px;font:normal 11px 'Liberation Sans';color:#e8e8e8;transform:scaleX(0.9703);">[−] [Góra] [2D druty] [GUW]</div><div class="t" style="left:366px;top:282.50px;font:normal 10.5px 'Liberation Sans';color:#e8e8e8;transform:scaleX(0.9975);">1900</div><div class="t" style="left:385px;top:695.50px;font:normal 10.5px 'Liberation Sans';color:#e8e8e8;transform:scaleX(0.9975);">1800</div><div class="t" style="left:1005px;top:303.00px;font:normal 10.5px 'Liberation Sans';color:#e8e8e8;transform:scaleX(0.9975);">1700</div><div class="t" style="left:894.6px;top:680.50px;font:normal 10.5px 'Liberation Sans';color:#e8e8e8;transform:scaleX(1.0446);">2600</div><div class="t" style="left:575.9px;top:371.94px;font:normal 31px 'Liberation Sans';color:#ffffff;">A</div><div class="t" style="left:351.8px;top:493.55px;font:normal 31px 'Liberation Sans';color:#ffffff;">C</div><div class="t" style="left:575.4px;top:590.15px;font:normal 30px 'Liberation Sans';color:#ffffff;">B</div><div class="t" style="left:673.5px;top:546.85px;font:normal 30px 'Liberation Sans';color:#ffffff;">D</div><div class="t" style="left:776.5px;top:353.95px;font:normal 30px 'Liberation Sans';color:#ffffff;">E</div><div class="t" style="left:997px;top:499.65px;font:normal 30px 'Liberation Sans';color:#ffffff;">F</div><div class="t" style="left:64.3px;top:835.04px;font:bold 12px 'Liberation Sans';color:#ffffff;transform:scaleX(0.9635);">Model</div><div class="t" style="left:128px;top:835.04px;font:normal 12px 'Liberation Sans';color:#e6e6e6;transform:scaleX(0.9297);">Arkusz1</div><div class="t" style="left:199px;top:835.04px;font:normal 12px 'Liberation Sans';color:#e6e6e6;transform:scaleX(0.9458);">Arkusz2</div><div class="t" style="left:20.7px;top:858.87px;font:normal 13px 'Liberation Mono';color:#c9c9c9;transform:scaleX(1.0383);">Polecenie:</div><div class="t" style="left:20.7px;top:874.87px;font:normal 13px 'Liberation Mono';color:#c9c9c9;transform:scaleX(1.0383);">Otwórz plik AutoCADa 2013 DWG.</div><div class="t" style="left:20.7px;top:890.87px;font:normal 13px 'Liberation Mono';color:#c9c9c9;transform:scaleX(1.0383);">Polecenie:</div><div class="t" style="left:20.7px;top:906.87px;font:normal 13px 'Liberation Mono';color:#c9c9c9;transform:scaleX(1.0383);">Polecenie:</div><div class="t" style="left:20.7px;top:922.87px;font:normal 13px 'Liberation Mono';color:#c9c9c9;transform:scaleX(1.0383);">Polecenie:</div><div class="t" style="left:20.7px;top:987.67px;font:normal 13px 'Liberation Mono';color:#c9c9c9;transform:scaleX(1.0383);">Polecenie:</div><div class="t" style="left:10.7px;top:1015.67px;font:normal 10px 'Liberation Mono';color:#e6e6e6;transform:scaleX(1.0016);">4812.6016, 6522.4971, 0.0000</div><div class="t" style="left:1629px;top:1012.67px;font:normal 10px 'Liberation Mono';color:#a5a5a5;transform:scaleX(0.9906);">Milimetry</div><div class="t" style="left:1726px;top:1012.67px;font:normal 10px 'Liberation Mono';color:#a5a5a5;transform:scaleX(0.9443);">1:1</div><div class="t" style="left:1714.9px;top:184.49px;font:normal 11.5px 'Liberation Sans';color:#e8e8e8;transform:scaleX(0.9918);">Właściwości</div><div class="t" style="left:1706.7px;top:211.69px;font:normal 11.5px 'Liberation Sans';color:#f0f0f0;transform:scaleX(0.9904);">Brak wyboru</div><div class="t" style="left:1707.9px;top:240.09px;font:bold 11.5px 'Liberation Sans';color:#f0f0f0;">Ogólne</div><div class="t" style="left:1724.4px;top:267.89px;font:normal 11.5px 'Liberation Sans';color:#e6e6e6;transform:scaleX(0.9759);">Kolor</div><div class="t" style="left:1814.4px;top:266.39px;font:normal 11.5px 'Liberation Sans';color:#e6e6e6;transform:scaleX(0.9647);">JakWarstwa</div><div class="t" style="left:1724.4px;top:292.89px;font:normal 11.5px 'Liberation Sans';color:#e6e6e6;transform:scaleX(0.9955);">Warstwa</div><div class="t" style="left:1801.5px;top:291.39px;font:normal 11.5px 'Liberation Sans';color:#e6e6e6;transform:scaleX(0.9381);">0</div><div class="t" style="left:1724.4px;top:317.89px;font:normal 11.5px 'Liberation Sans';color:#e6e6e6;transform:scaleX(0.9988);">Typ linii</div><div class="t" style="left:1850.5px;top:316.39px;font:normal 11.5px 'Liberation Sans';color:#e6e6e6;transform:scaleX(0.9647);">JakWarstwa</div><div class="t" style="left:1724.4px;top:342.89px;font:normal 11.5px 'Liberation Sans';color:#e6e6e6;transform:scaleX(0.9806);">Skala typu li...</div><div class="t" style="left:1801.5px;top:341.39px;font:normal 11.5px 'Liberation Sans';color:#e6e6e6;transform:scaleX(0.7818);">1</div><div class="t" style="left:1724.4px;top:367.89px;font:normal 11.5px 'Liberation Sans';color:#e6e6e6;transform:scaleX(0.9769);">Szerokość linii</div><div class="t" style="left:1850.5px;top:366.39px;font:normal 11.5px 'Liberation Sans';color:#e6e6e6;transform:scaleX(0.9647);">JakWarstwa</div><div class="t" style="left:1724.4px;top:392.89px;font:normal 11.5px 'Liberation Sans';color:#e6e6e6;transform:scaleX(0.9191);">Przeźroczyst...</div><div class="t" style="left:1801.5px;top:391.39px;font:normal 11.5px 'Liberation Sans';color:#e6e6e6;transform:scaleX(0.9631);">JakWarstwa</div><div class="t" style="left:1724.4px;top:417.89px;font:normal 11.5px 'Liberation Sans';color:#e6e6e6;transform:scaleX(0.9779);">Grubość</div><div class="t" style="left:1801.5px;top:416.39px;font:normal 11.5px 'Liberation Sans';color:#e6e6e6;transform:scaleX(0.9381);">0</div><div class="t" style="left:1707.9px;top:444.89px;font:bold 11.5px 'Liberation Sans';color:#f0f0f0;">Widok</div><div class="t" style="left:1724.4px;top:472.69px;font:normal 11.5px 'Liberation Sans';color:#e6e6e6;transform:scaleX(0.9407);">Centrum X</div><div class="t" style="left:1801.5px;top:471.19px;font:normal 11.5px 'Liberation Sans';color:#a9b0b8;transform:scaleX(0.9345);">5882.6097</div><div class="t" style="left:1724.4px;top:497.69px;font:normal 11.5px 'Liberation Sans';color:#e6e6e6;transform:scaleX(0.9407);">Centrum Y</div><div class="t" style="left:1801.5px;top:496.19px;font:normal 11.5px 'Liberation Sans';color:#a9b0b8;transform:scaleX(0.9319);">4664.963</div><div class="t" style="left:1724.4px;top:522.69px;font:normal 11.5px 'Liberation Sans';color:#e6e6e6;transform:scaleX(0.9518);">Centrum Z</div><div class="t" style="left:1801.5px;top:521.19px;font:normal 11.5px 'Liberation Sans';color:#a9b0b8;transform:scaleX(0.9381);">0</div><div class="t" style="left:1724.4px;top:547.69px;font:normal 11.5px 'Liberation Sans';color:#e6e6e6;transform:scaleX(0.9179);">Wysokość</div><div class="t" style="left:1801.5px;top:546.19px;font:normal 11.5px 'Liberation Sans';color:#a9b0b8;transform:scaleX(0.9382);">3749.3085</div><div class="t" style="left:1724.4px;top:572.69px;font:normal 11.5px 'Liberation Sans';color:#e6e6e6;transform:scaleX(0.9406);">Szerokość</div><div class="t" style="left:1801.5px;top:571.19px;font:normal 11.5px 'Liberation Sans';color:#a9b0b8;transform:scaleX(0.9349);">13415.2086</div><div class="t" style="left:1707.9px;top:599.99px;font:bold 11.5px 'Liberation Sans';color:#f0f0f0;">Różne</div><div class="t" style="left:1724.4px;top:627.79px;font:normal 11.5px 'Liberation Sans';color:#e6e6e6;transform:scaleX(0.9806);">Skala opiso...</div><div class="t" style="left:1801.5px;top:626.29px;font:normal 11.5px 'Liberation Sans';color:#e6e6e6;transform:scaleX(0.8570);">1:1</div><div class="t" style="left:1724.4px;top:652.79px;font:normal 11.5px 'Liberation Sans';color:#e6e6e6;transform:scaleX(0.9534);">Symbol LUW...</div><div class="t" style="left:1801.5px;top:651.29px;font:normal 11.5px 'Liberation Sans';color:#e6e6e6;transform:scaleX(0.9499);">Tak</div><div class="t" style="left:1724.4px;top:677.79px;font:normal 11.5px 'Liberation Sans';color:#e6e6e6;transform:scaleX(0.9534);">Symbol LUW...</div><div class="t" style="left:1801.5px;top:676.29px;font:normal 11.5px 'Liberation Sans';color:#e6e6e6;transform:scaleX(0.9499);">Tak</div><div class="t" style="left:1724.4px;top:702.79px;font:normal 11.5px 'Liberation Sans';color:#e6e6e6;transform:scaleX(0.9636);">LUW dla rzu...</div><div class="t" style="left:1801.5px;top:701.29px;font:normal 11.5px 'Liberation Sans';color:#e6e6e6;transform:scaleX(0.9499);">Tak</div><div class="t" style="left:1724.4px;top:727.79px;font:normal 11.5px 'Liberation Sans';color:#e6e6e6;transform:scaleX(0.9483);">Nazwa LUW</div><div class="t" style="left:1724.4px;top:752.79px;font:normal 11.5px 'Liberation Sans';color:#e6e6e6;transform:scaleX(0.9945);">Styl wizualny</div><div class="t" style="left:1801.5px;top:751.29px;font:normal 11.5px 'Liberation Sans';color:#e6e6e6;transform:scaleX(0.9984);">2D Druty</div>
<div class="a" style="left:1899px;top:310.8px;width:19px;height:24px;background:#434b58;border-left:1px solid #535c68"></div><div class="a" style="left:1899px;top:360.8px;width:19px;height:24px;background:#434b58;border-left:1px solid #535c68"></div>
</body></html>
